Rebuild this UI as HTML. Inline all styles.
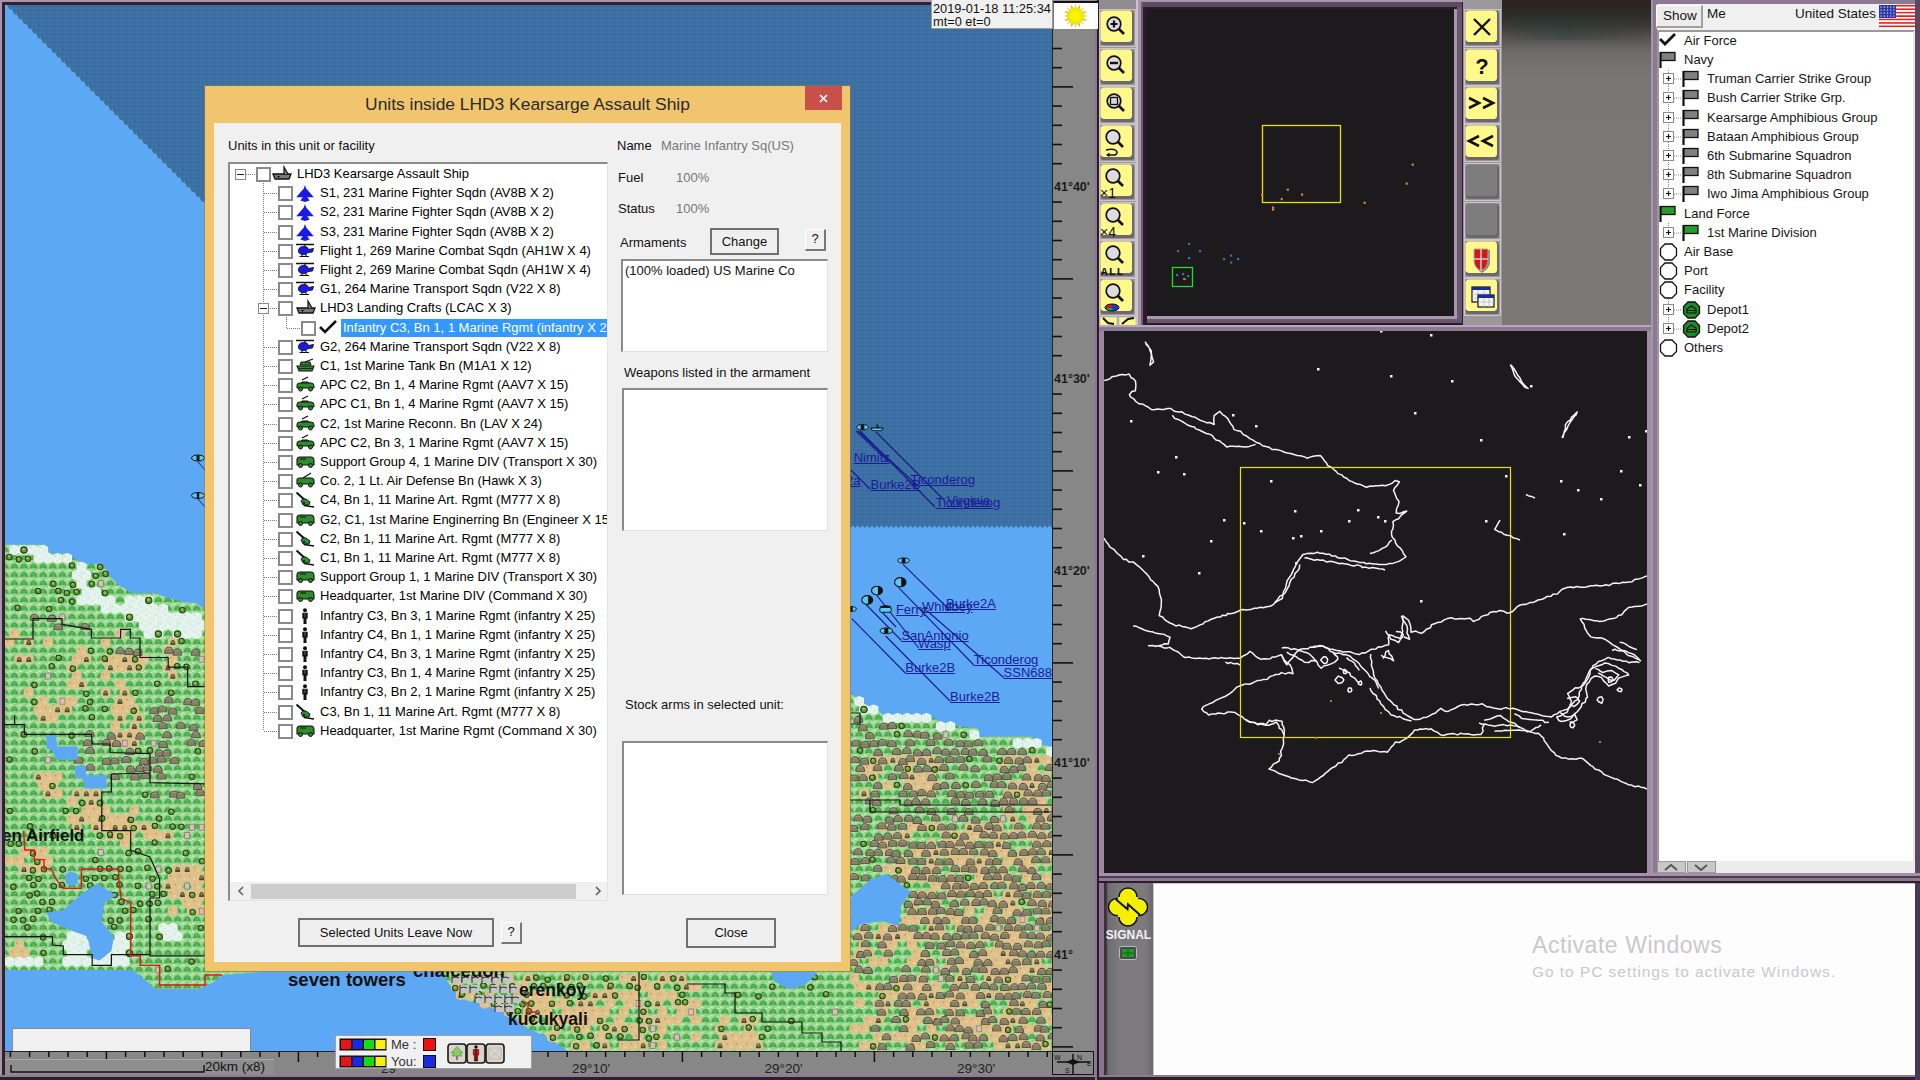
<!DOCTYPE html>
<html><head><meta charset="utf-8">
<style>
html,body{margin:0;padding:0;}
body{width:1920px;height:1080px;overflow:hidden;position:relative;background:#9c8aa0;font-family:"Liberation Sans",sans-serif;}
.a{position:absolute;}
</style></head><body>
<svg class="a" style="left:0;top:0" width="1052" height="1051" viewBox="0 0 1052 1051">
<defs>
<pattern id="grass" width="9.6" height="8.4" patternUnits="userSpaceOnUse">
<rect width="9.6" height="8.4" fill="#9cd894"/>
<path d="M0.6 6.4 Q1.4 1 4.8 0.8 Q8.2 1 9 6.4 Q4.8 4.4 0.6 6.4Z" fill="#46a848"/>
<rect x="3.6" y="2.4" width="2.4" height="1.6" fill="#6cbc68"/>
<rect x="0" y="7" width="2.2" height="1.4" fill="#d0f0ca"/><rect x="7.2" y="0" width="1.8" height="1.2" fill="#c8ecc2"/><rect x="5" y="6.8" width="1.4" height="1.2" fill="#7ac876"/>
</pattern>
<pattern id="sea2" width="4" height="4" patternUnits="userSpaceOnUse">
<rect width="4" height="4" fill="#3c70a3"/><rect x="0" y="0" width="1" height="1" fill="#4a7db0"/><rect x="2" y="2" width="1" height="1" fill="#3567a0"/>
</pattern>
<symbol id="tr" viewBox="0 0 8 8"><circle cx="4" cy="4" r="3.2" fill="#5e9e36" stroke="#2a3c1c" stroke-width="1.2"/><circle cx="3.5" cy="3.1" r="1.2" fill="#9ccc58"/></symbol>
<symbol id="hl" viewBox="0 0 11 8"><path d="M0.6 7.6 Q0.6 0.8 5.5 0.6 Q10.4 0.8 10.4 7.6 Z" fill="#878068" stroke="#4a4434" stroke-width="0.9"/><path d="M2.5 2.8 Q5.5 1.4 8 2.4" stroke="#a49e86" stroke-width="1" fill="none"/></symbol>
<symbol id="tn" viewBox="0 0 10 10.6"><path d="M5 0 L10 2.2 L10 8.4 L5 10.6 L0 8.4 L0 2.2 Z" fill="#e2c08a"/><rect x="2" y="3" width="1.6" height="1.6" fill="#c49e66"/><rect x="6" y="6" width="1.6" height="1.6" fill="#f0dcb0"/></symbol><symbol id="tn2" viewBox="0 0 10 10.6"><path d="M5 0 L10 2.2 L10 8.4 L5 10.6 L0 8.4 L0 2.2 Z" fill="#e2c08a"/><path d="M2.5 8 Q2.5 3 5 3 Q7.5 3 7.5 8Z" fill="#4e4a3c"/><circle cx="5" cy="5" r="1.2" fill="#7a9a4a"/></symbol>
<symbol id="sn" viewBox="0 0 10 10.6"><path d="M5 0 L10 2.2 L10 8.4 L5 10.6 L0 8.4 L0 2.2 Z" fill="#e4f4ee"/><rect x="2" y="2.5" width="1.5" height="1.5" fill="#ecc8dc"/><rect x="6" y="5" width="1.5" height="1.5" fill="#c4e4f4"/><rect x="4" y="7" width="1.5" height="1.2" fill="#f0e2c0"/></symbol>
<symbol id="tw" viewBox="0 0 6 8"><rect x="0.5" y="1" width="5" height="6" fill="#d8c0b8" stroke="#8a7a70" stroke-width="0.8"/></symbol>
<clipPath id="mapclip"><rect x="5" y="5" width="1047" height="1046"/></clipPath>
</defs>
<g clip-path="url(#mapclip)">
<rect x="0" y="0" width="1052" height="1051" fill="#5ca8f4"/>
<polygon points="5.0,5.0 1052.0,5.0 1052.0,528.0 1052.0,528.0 1049.6,525.5 1047.2,528.0 1044.8,525.5 1042.4,528.0 1040.0,525.5 1037.6,528.0 1035.2,525.5 1032.8,528.0 1030.4,525.5 1028.0,528.0 1025.6,525.5 1023.2,528.0 1020.8,525.5 1018.4,528.0 1016.0,525.5 1013.6,528.0 1011.2,525.5 1008.8,528.0 1006.4,525.5 1004.0,528.0 1001.6,525.5 999.2,528.0 996.8,525.5 994.4,528.0 992.0,525.5 989.6,528.0 987.2,525.5 984.8,528.0 982.4,525.5 980.0,528.0 977.6,525.5 975.2,528.0 972.8,525.5 970.4,528.0 968.0,525.5 965.6,528.0 963.2,525.5 960.8,528.0 958.4,525.5 956.0,528.0 953.6,525.5 951.2,528.0 948.8,525.5 946.4,528.0 944.0,525.5 941.6,528.0 939.2,525.5 936.8,528.0 934.4,525.5 932.0,528.0 929.6,525.5 927.2,528.0 924.8,525.5 922.4,528.0 920.0,525.5 917.6,528.0 915.2,525.5 912.8,528.0 910.4,525.5 908.0,528.0 905.6,525.5 903.2,528.0 900.8,525.5 898.4,528.0 896.0,525.5 893.6,528.0 891.2,525.5 888.8,528.0 886.4,525.5 884.0,528.0 881.6,525.5 879.2,528.0 876.8,525.5 874.4,528.0 872.0,525.5 869.6,528.0 867.2,525.5 864.8,528.0 862.4,525.5 860.0,528.0 857.6,525.5 855.2,528.0 852.8,525.5 850.4,528.0 848.0,525.5 845.6,528.0 843.2,525.5 840.8,528.0 838.4,525.5 836.0,528.0 833.6,525.5 831.2,528.0 828.8,525.5 826.4,528.0 824.0,525.5 821.6,528.0 819.2,525.5 816.8,528.0 814.4,525.5 812.0,528.0 809.6,525.5 807.2,528.0 804.8,525.5 802.4,528.0 800.0,525.5 797.6,528.0 795.2,525.5 792.8,528.0 790.4,525.5 788.0,528.0 785.6,525.5 783.2,528.0 780.8,525.5 778.4,528.0 776.0,525.5 773.6,528.0 771.2,525.5 768.8,528.0 766.4,525.5 764.0,528.0 761.6,525.5 759.2,528.0 756.8,525.5 754.4,528.0 752.0,525.5 749.6,528.0 747.2,525.5 744.8,528.0 742.4,525.5 740.0,528.0 737.6,525.5 735.2,528.0 732.8,525.5 730.4,528.0 728.0,525.5 725.6,528.0 723.2,525.5 720.8,528.0 718.4,525.5 716.0,528.0 713.6,525.5 711.2,528.0 708.8,525.5 706.4,528.0 704.0,525.5 701.6,528.0 699.2,525.5 696.8,528.0 694.4,525.5 692.0,528.0 689.6,525.5 687.2,528.0 684.8,525.5 682.4,528.0 680.0,525.5 677.6,528.0 675.2,525.5 672.8,528.0 670.4,525.5 668.0,528.0 665.6,525.5 663.2,528.0 660.8,525.5 658.4,528.0 656.0,525.5 653.6,528.0 651.2,525.5 648.8,528.0 646.4,525.5 644.0,528.0 641.6,525.5 639.2,528.0 636.8,525.5 634.4,528.0 632.0,525.5 629.6,528.0 627.2,525.5 624.8,528.0 622.4,525.5 620.0,528.0 617.6,525.5 615.2,528.0 612.8,525.5 610.4,528.0 608.0,525.5 605.6,528.0 603.2,525.5 600.8,528.0 598.4,525.5 596.0,528.0 593.6,525.5 591.2,528.0 588.8,525.5 586.4,528.0 584.0,525.5 581.6,528.0 579.2,525.5 576.8,528.0 574.4,525.5 572.0,528.0 569.6,525.5 567.2,528.0 564.8,525.5 562.4,528.0 560.0,525.5 557.6,528.0 555.2,525.5 552.8,528.0 550.4,525.5 548.0,528.0 545.6,525.5 543.2,528.0 540.8,525.5 538.4,528.0 536.0,525.5 533.6,528.0 531.2,525.5 528.8,528.0 526.4,525.5 528.0,528.0 528.0,528.0 525.6,523.2 523.2,523.2 520.8,518.4 518.4,518.4 516.0,513.6 513.6,513.6 511.2,508.8 508.8,508.8 506.4,504.0 504.0,504.0 501.6,499.2 499.2,499.2 496.8,494.4 494.4,494.4 492.0,489.6 489.6,489.6 487.2,484.8 484.8,484.8 482.4,480.0 480.0,480.0 477.6,475.2 475.2,475.2 472.8,470.4 470.4,470.4 468.0,465.6 465.6,465.6 463.2,460.8 460.8,460.8 458.4,456.0 456.0,456.0 453.6,451.2 451.2,451.2 448.8,446.4 446.4,446.4 444.0,441.6 441.6,441.6 439.2,436.8 436.8,436.8 434.4,432.0 432.0,432.0 429.6,427.2 427.2,427.2 424.8,422.4 422.4,422.4 420.0,417.6 417.6,417.6 415.2,412.8 412.8,412.8 410.4,408.0 408.0,408.0 405.6,403.2 403.2,403.2 400.8,398.4 398.4,398.4 396.0,393.6 393.6,393.6 391.2,388.8 388.8,388.8 386.4,384.0 384.0,384.0 381.6,379.2 379.2,379.2 376.8,374.4 374.4,374.4 372.0,369.6 369.6,369.6 367.2,364.8 364.8,364.8 362.4,360.0 360.0,360.0 357.6,355.2 355.2,355.2 352.8,350.4 350.4,350.4 348.0,345.6 345.6,345.6 343.2,340.8 340.8,340.8 338.4,336.0 336.0,336.0 333.6,331.2 331.2,331.2 328.8,326.4 326.4,326.4 324.0,321.6 321.6,321.6 319.2,316.8 316.8,316.8 314.4,312.0 312.0,312.0 309.6,307.2 307.2,307.2 304.8,302.4 302.4,302.4 300.0,297.6 297.6,297.6 295.2,292.8 292.8,292.8 290.4,288.0 288.0,288.0 285.6,283.2 283.2,283.2 280.8,278.4 278.4,278.4 276.0,273.6 273.6,273.6 271.2,268.8 268.8,268.8 266.4,264.0 264.0,264.0 261.6,259.2 259.2,259.2 256.8,254.4 254.4,254.4 252.0,249.6 249.6,249.6 247.2,244.8 244.8,244.8 242.4,240.0 240.0,240.0 237.6,235.2 235.2,235.2 232.8,230.4 230.4,230.4 228.0,225.6 225.6,225.6 223.2,220.8 220.8,220.8 218.4,216.0 216.0,216.0 213.6,211.2 211.2,211.2 208.8,206.4 206.4,206.4 204.0,201.6 201.6,201.6 199.2,196.8 196.8,196.8 194.4,192.0 192.0,192.0 189.6,187.2 187.2,187.2 184.8,182.4 182.4,182.4 180.0,177.6 177.6,177.6 175.2,172.8 172.8,172.8 170.4,168.0 168.0,168.0 165.6,163.2 163.2,163.2 160.8,158.4 158.4,158.4 156.0,153.6 153.6,153.6 151.2,148.8 148.8,148.8 146.4,144.0 144.0,144.0 141.6,139.2 139.2,139.2 136.8,134.4 134.4,134.4 132.0,129.6 129.6,129.6 127.2,124.8 124.8,124.8 122.4,120.0 120.0,120.0 117.6,115.2 115.2,115.2 112.8,110.4 110.4,110.4 108.0,105.6 105.6,105.6 103.2,100.8 100.8,100.8 98.4,96.0 96.0,96.0 93.6,91.2 91.2,91.2 88.8,86.4 86.4,86.4 84.0,81.6 81.6,81.6 79.2,76.8 76.8,76.8 74.4,72.0 72.0,72.0 69.6,67.2 67.2,67.2 64.8,62.4 62.4,62.4 60.0,57.6 57.6,57.6 55.2,52.8 52.8,52.8 50.4,48.0 48.0,48.0 45.6,43.2 43.2,43.2 40.8,38.4 38.4,38.4 36.0,33.6 33.6,33.6 31.2,28.8 28.8,28.8 26.4,24.0 24.0,24.0 21.6,19.2 19.2,19.2 16.8,14.4 14.4,14.4 12.0,9.6 9.6,9.6 7.2,4.8" fill="url(#sea2)"/>
<polygon points="5.0,544.7 44.7,544.7 50.5,553.5 68.0,553.5 77.8,561.0 83.6,564.0 103.0,564.0 108.9,575.0 116.7,583.6 132.0,593.0 155.6,593.0 165.3,597.0 182.8,602.0 196.4,603.0 204.0,609.0 260.0,640.0 260.0,972.0 222.0,975.0 215.0,981.0 200.0,989.0 155.0,989.0 145.0,980.0 133.0,970.0 5.0,970.0" fill="url(#grass)"/>
<polygon points="851.0,691.7 855.7,698.5 867.4,705.3 877.0,709.0 885.0,717.0 933.5,717.0 943.0,724.7 962.7,726.7 978.0,728.6 980.0,737.0 991.8,736.4 1030.7,736.4 1040.4,744.0 1052.0,747.0 1052.0,1051.0 568.0,1051.0 545.0,1036.0 527.0,1028.0 505.0,1010.0 480.0,1004.0 464.7,1000.0 450.0,985.0 440.0,971.0 850.0,971.0" fill="url(#grass)"/>
<use href="#sn" x="9.4" y="544.7" width="10" height="10.6"/>
<use href="#sn" x="19.0" y="544.7" width="10" height="10.6"/>
<use href="#sn" x="28.6" y="544.7" width="10" height="10.6"/>
<use href="#sn" x="38.2" y="544.7" width="10" height="10.6"/>
<use href="#sn" x="33.4" y="553.1" width="10" height="10.6"/>
<use href="#sn" x="43.0" y="553.1" width="10" height="10.6"/>
<use href="#sn" x="52.6" y="553.1" width="10" height="10.6"/>
<use href="#sn" x="62.2" y="553.1" width="10" height="10.6"/>
<use href="#sn" x="76.6" y="561.5" width="10" height="10.6"/>
<use href="#sn" x="71.8" y="569.9" width="10" height="10.6"/>
<use href="#sn" x="81.4" y="569.9" width="10" height="10.6"/>
<use href="#sn" x="76.6" y="578.3" width="10" height="10.6"/>
<use href="#sn" x="81.4" y="586.7" width="10" height="10.6"/>
<use href="#sn" x="91.0" y="586.7" width="10" height="10.6"/>
<use href="#sn" x="76.6" y="595.1" width="10" height="10.6"/>
<use href="#sn" x="86.2" y="595.1" width="10" height="10.6"/>
<use href="#sn" x="95.8" y="595.1" width="10" height="10.6"/>
<use href="#sn" x="105.4" y="595.1" width="10" height="10.6"/>
<use href="#sn" x="124.6" y="595.1" width="10" height="10.6"/>
<use href="#sn" x="134.2" y="595.1" width="10" height="10.6"/>
<use href="#sn" x="143.8" y="595.1" width="10" height="10.6"/>
<use href="#sn" x="100.6" y="603.5" width="10" height="10.6"/>
<use href="#sn" x="110.2" y="603.5" width="10" height="10.6"/>
<use href="#sn" x="119.8" y="603.5" width="10" height="10.6"/>
<use href="#sn" x="129.4" y="603.5" width="10" height="10.6"/>
<use href="#sn" x="139.0" y="603.5" width="10" height="10.6"/>
<use href="#sn" x="148.6" y="603.5" width="10" height="10.6"/>
<use href="#sn" x="158.2" y="603.5" width="10" height="10.6"/>
<use href="#sn" x="124.6" y="611.9" width="10" height="10.6"/>
<use href="#sn" x="134.2" y="611.9" width="10" height="10.6"/>
<use href="#sn" x="143.8" y="611.9" width="10" height="10.6"/>
<use href="#sn" x="153.4" y="611.9" width="10" height="10.6"/>
<use href="#sn" x="163.0" y="611.9" width="10" height="10.6"/>
<use href="#sn" x="172.6" y="611.9" width="10" height="10.6"/>
<use href="#sn" x="182.2" y="611.9" width="10" height="10.6"/>
<use href="#sn" x="191.8" y="611.9" width="10" height="10.6"/>
<use href="#sn" x="139.0" y="620.3" width="10" height="10.6"/>
<use href="#sn" x="148.6" y="620.3" width="10" height="10.6"/>
<use href="#sn" x="158.2" y="620.3" width="10" height="10.6"/>
<use href="#sn" x="167.8" y="620.3" width="10" height="10.6"/>
<use href="#sn" x="177.4" y="620.3" width="10" height="10.6"/>
<use href="#sn" x="187.0" y="620.3" width="10" height="10.6"/>
<use href="#sn" x="196.6" y="620.3" width="10" height="10.6"/>
<use href="#tn" x="9.4" y="628.7" width="10" height="10.6"/>
<use href="#tn" x="115.0" y="628.7" width="10" height="10.6"/>
<use href="#sn" x="143.8" y="628.7" width="10" height="10.6"/>
<use href="#sn" x="153.4" y="628.7" width="10" height="10.6"/>
<use href="#sn" x="172.6" y="628.7" width="10" height="10.6"/>
<use href="#sn" x="182.2" y="628.7" width="10" height="10.6"/>
<use href="#sn" x="191.8" y="628.7" width="10" height="10.6"/>
<use href="#tn" x="4.6" y="637.1" width="10" height="10.6"/>
<use href="#tn2" x="23.8" y="637.1" width="10" height="10.6"/>
<use href="#tn" x="43.0" y="637.1" width="10" height="10.6"/>
<use href="#tn" x="100.6" y="637.1" width="10" height="10.6"/>
<use href="#tn2" x="167.8" y="637.1" width="10" height="10.6"/>
<use href="#tn" x="76.6" y="645.5" width="10" height="10.6"/>
<use href="#tn2" x="163.0" y="645.5" width="10" height="10.6"/>
<use href="#tn2" x="14.2" y="653.9" width="10" height="10.6"/>
<use href="#tn2" x="23.8" y="653.9" width="10" height="10.6"/>
<use href="#tn" x="71.8" y="653.9" width="10" height="10.6"/>
<use href="#tn2" x="81.4" y="653.9" width="10" height="10.6"/>
<use href="#tn2" x="100.6" y="653.9" width="10" height="10.6"/>
<use href="#tn" x="110.2" y="653.9" width="10" height="10.6"/>
<use href="#tn2" x="119.8" y="653.9" width="10" height="10.6"/>
<use href="#tn2" x="129.4" y="653.9" width="10" height="10.6"/>
<use href="#tn" x="139.0" y="653.9" width="10" height="10.6"/>
<use href="#tn" x="167.8" y="653.9" width="10" height="10.6"/>
<use href="#tn2" x="67.0" y="662.3" width="10" height="10.6"/>
<use href="#tn2" x="105.4" y="662.3" width="10" height="10.6"/>
<use href="#tn" x="115.0" y="662.3" width="10" height="10.6"/>
<use href="#tn2" x="124.6" y="662.3" width="10" height="10.6"/>
<use href="#tn" x="134.2" y="662.3" width="10" height="10.6"/>
<use href="#tn2" x="163.0" y="662.3" width="10" height="10.6"/>
<use href="#tn" x="71.8" y="670.7" width="10" height="10.6"/>
<use href="#tn" x="100.6" y="670.7" width="10" height="10.6"/>
<use href="#tn2" x="167.8" y="670.7" width="10" height="10.6"/>
<use href="#tn" x="67.0" y="679.1" width="10" height="10.6"/>
<use href="#tn2" x="76.6" y="679.1" width="10" height="10.6"/>
<use href="#tn" x="115.0" y="679.1" width="10" height="10.6"/>
<use href="#tn" x="23.8" y="687.5" width="10" height="10.6"/>
<use href="#tn2" x="100.6" y="687.5" width="10" height="10.6"/>
<use href="#tn2" x="119.8" y="687.5" width="10" height="10.6"/>
<use href="#tn" x="38.2" y="695.9" width="10" height="10.6"/>
<use href="#tn" x="57.4" y="695.9" width="10" height="10.6"/>
<use href="#tn" x="67.0" y="695.9" width="10" height="10.6"/>
<use href="#tn2" x="115.0" y="695.9" width="10" height="10.6"/>
<use href="#tn" x="124.6" y="695.9" width="10" height="10.6"/>
<use href="#sn" x="854.2" y="695.9" width="10" height="10.6"/>
<use href="#tn" x="33.4" y="704.3" width="10" height="10.6"/>
<use href="#tn" x="43.0" y="704.3" width="10" height="10.6"/>
<use href="#tn2" x="52.6" y="704.3" width="10" height="10.6"/>
<use href="#tn2" x="62.2" y="704.3" width="10" height="10.6"/>
<use href="#tn" x="110.2" y="704.3" width="10" height="10.6"/>
<use href="#tn" x="119.8" y="704.3" width="10" height="10.6"/>
<use href="#tn2" x="129.4" y="704.3" width="10" height="10.6"/>
<use href="#sn" x="859.0" y="704.3" width="10" height="10.6"/>
<use href="#sn" x="868.6" y="704.3" width="10" height="10.6"/>
<use href="#tn2" x="38.2" y="712.7" width="10" height="10.6"/>
<use href="#tn" x="47.8" y="712.7" width="10" height="10.6"/>
<use href="#tn2" x="115.0" y="712.7" width="10" height="10.6"/>
<use href="#tn2" x="134.2" y="712.7" width="10" height="10.6"/>
<use href="#sn" x="883.0" y="712.7" width="10" height="10.6"/>
<use href="#sn" x="892.6" y="712.7" width="10" height="10.6"/>
<use href="#sn" x="902.2" y="712.7" width="10" height="10.6"/>
<use href="#sn" x="911.8" y="712.7" width="10" height="10.6"/>
<use href="#sn" x="921.4" y="712.7" width="10" height="10.6"/>
<use href="#tn" x="110.2" y="721.1" width="10" height="10.6"/>
<use href="#tn2" x="129.4" y="721.1" width="10" height="10.6"/>
<use href="#sn" x="935.8" y="721.1" width="10" height="10.6"/>
<use href="#sn" x="945.4" y="721.1" width="10" height="10.6"/>
<use href="#tn2" x="115.0" y="729.5" width="10" height="10.6"/>
<use href="#tn2" x="124.6" y="729.5" width="10" height="10.6"/>
<use href="#tn2" x="134.2" y="729.5" width="10" height="10.6"/>
<use href="#sn" x="969.4" y="729.5" width="10" height="10.6"/>
<use href="#tn2" x="110.2" y="737.9" width="10" height="10.6"/>
<use href="#tn" x="119.8" y="737.9" width="10" height="10.6"/>
<use href="#tn2" x="129.4" y="737.9" width="10" height="10.6"/>
<use href="#sn" x="1012.6" y="737.9" width="10" height="10.6"/>
<use href="#sn" x="1022.2" y="737.9" width="10" height="10.6"/>
<use href="#sn" x="1031.8" y="737.9" width="10" height="10.6"/>
<use href="#sn" x="1046.2" y="746.3" width="10" height="10.6"/>
<use href="#tn" x="868.6" y="754.7" width="10" height="10.6"/>
<use href="#tn" x="878.2" y="754.7" width="10" height="10.6"/>
<use href="#tn2" x="887.8" y="754.7" width="10" height="10.6"/>
<use href="#tn" x="897.4" y="754.7" width="10" height="10.6"/>
<use href="#tn" x="907.0" y="754.7" width="10" height="10.6"/>
<use href="#tn" x="916.6" y="754.7" width="10" height="10.6"/>
<use href="#tn2" x="926.2" y="754.7" width="10" height="10.6"/>
<use href="#tn2" x="1003.0" y="754.7" width="10" height="10.6"/>
<use href="#tn" x="1012.6" y="754.7" width="10" height="10.6"/>
<use href="#tn" x="1022.2" y="754.7" width="10" height="10.6"/>
<use href="#tn2" x="1031.8" y="754.7" width="10" height="10.6"/>
<use href="#tn" x="1041.4" y="754.7" width="10" height="10.6"/>
<use href="#tn" x="863.8" y="763.1" width="10" height="10.6"/>
<use href="#tn" x="873.4" y="763.1" width="10" height="10.6"/>
<use href="#tn" x="902.2" y="763.1" width="10" height="10.6"/>
<use href="#tn2" x="931.0" y="763.1" width="10" height="10.6"/>
<use href="#tn" x="998.2" y="763.1" width="10" height="10.6"/>
<use href="#tn" x="1027.0" y="763.1" width="10" height="10.6"/>
<use href="#tn2" x="33.4" y="771.5" width="10" height="10.6"/>
<use href="#tn" x="43.0" y="771.5" width="10" height="10.6"/>
<use href="#tn" x="52.6" y="771.5" width="10" height="10.6"/>
<use href="#tn" x="859.0" y="771.5" width="10" height="10.6"/>
<use href="#tn2" x="868.6" y="771.5" width="10" height="10.6"/>
<use href="#tn2" x="907.0" y="771.5" width="10" height="10.6"/>
<use href="#tn" x="916.6" y="771.5" width="10" height="10.6"/>
<use href="#tn" x="926.2" y="771.5" width="10" height="10.6"/>
<use href="#tn2" x="1022.2" y="771.5" width="10" height="10.6"/>
<use href="#tn2" x="1031.8" y="771.5" width="10" height="10.6"/>
<use href="#tn" x="1041.4" y="771.5" width="10" height="10.6"/>
<use href="#tn" x="38.2" y="779.9" width="10" height="10.6"/>
<use href="#tn" x="47.8" y="779.9" width="10" height="10.6"/>
<use href="#tn" x="883.0" y="779.9" width="10" height="10.6"/>
<use href="#tn" x="902.2" y="779.9" width="10" height="10.6"/>
<use href="#tn" x="911.8" y="779.9" width="10" height="10.6"/>
<use href="#tn" x="921.4" y="779.9" width="10" height="10.6"/>
<use href="#tn" x="931.0" y="779.9" width="10" height="10.6"/>
<use href="#tn2" x="1007.8" y="779.9" width="10" height="10.6"/>
<use href="#tn2" x="1017.4" y="779.9" width="10" height="10.6"/>
<use href="#tn2" x="1027.0" y="779.9" width="10" height="10.6"/>
<use href="#tn2" x="1036.6" y="779.9" width="10" height="10.6"/>
<use href="#tn2" x="43.0" y="788.3" width="10" height="10.6"/>
<use href="#tn" x="52.6" y="788.3" width="10" height="10.6"/>
<use href="#tn2" x="71.8" y="788.3" width="10" height="10.6"/>
<use href="#tn2" x="81.4" y="788.3" width="10" height="10.6"/>
<use href="#tn2" x="91.0" y="788.3" width="10" height="10.6"/>
<use href="#tn2" x="859.0" y="788.3" width="10" height="10.6"/>
<use href="#tn2" x="916.6" y="788.3" width="10" height="10.6"/>
<use href="#tn2" x="926.2" y="788.3" width="10" height="10.6"/>
<use href="#tn" x="1003.0" y="788.3" width="10" height="10.6"/>
<use href="#tn" x="1012.6" y="788.3" width="10" height="10.6"/>
<use href="#tn" x="1022.2" y="788.3" width="10" height="10.6"/>
<use href="#tn" x="1031.8" y="788.3" width="10" height="10.6"/>
<use href="#tn" x="67.0" y="796.7" width="10" height="10.6"/>
<use href="#tn2" x="86.2" y="796.7" width="10" height="10.6"/>
<use href="#tn" x="998.2" y="796.7" width="10" height="10.6"/>
<use href="#tn2" x="1007.8" y="796.7" width="10" height="10.6"/>
<use href="#tn" x="1027.0" y="796.7" width="10" height="10.6"/>
<use href="#tn" x="1036.6" y="796.7" width="10" height="10.6"/>
<use href="#tn" x="81.4" y="805.1" width="10" height="10.6"/>
<use href="#tn" x="91.0" y="805.1" width="10" height="10.6"/>
<use href="#tn" x="100.6" y="805.1" width="10" height="10.6"/>
<use href="#tn" x="129.4" y="805.1" width="10" height="10.6"/>
<use href="#tn2" x="1003.0" y="805.1" width="10" height="10.6"/>
<use href="#tn" x="1022.2" y="805.1" width="10" height="10.6"/>
<use href="#tn2" x="1031.8" y="805.1" width="10" height="10.6"/>
<use href="#tn2" x="1041.4" y="805.1" width="10" height="10.6"/>
<use href="#tn" x="67.0" y="813.5" width="10" height="10.6"/>
<use href="#tn2" x="76.6" y="813.5" width="10" height="10.6"/>
<use href="#tn" x="86.2" y="813.5" width="10" height="10.6"/>
<use href="#tn2" x="95.8" y="813.5" width="10" height="10.6"/>
<use href="#tn" x="105.4" y="813.5" width="10" height="10.6"/>
<use href="#tn" x="115.0" y="813.5" width="10" height="10.6"/>
<use href="#tn2" x="124.6" y="813.5" width="10" height="10.6"/>
<use href="#tn2" x="1007.8" y="813.5" width="10" height="10.6"/>
<use href="#tn" x="1027.0" y="813.5" width="10" height="10.6"/>
<use href="#tn2" x="1036.6" y="813.5" width="10" height="10.6"/>
<use href="#tn2" x="1046.2" y="813.5" width="10" height="10.6"/>
<use href="#tn2" x="71.8" y="821.9" width="10" height="10.6"/>
<use href="#tn2" x="91.0" y="821.9" width="10" height="10.6"/>
<use href="#tn" x="100.6" y="821.9" width="10" height="10.6"/>
<use href="#tn2" x="110.2" y="821.9" width="10" height="10.6"/>
<use href="#tn2" x="119.8" y="821.9" width="10" height="10.6"/>
<use href="#tn" x="129.4" y="821.9" width="10" height="10.6"/>
<use href="#tn2" x="139.0" y="821.9" width="10" height="10.6"/>
<use href="#tn" x="148.6" y="821.9" width="10" height="10.6"/>
<use href="#tn" x="878.2" y="821.9" width="10" height="10.6"/>
<use href="#tn" x="907.0" y="821.9" width="10" height="10.6"/>
<use href="#tn2" x="916.6" y="821.9" width="10" height="10.6"/>
<use href="#tn2" x="926.2" y="821.9" width="10" height="10.6"/>
<use href="#tn2" x="935.8" y="821.9" width="10" height="10.6"/>
<use href="#tn2" x="964.6" y="821.9" width="10" height="10.6"/>
<use href="#tn" x="974.2" y="821.9" width="10" height="10.6"/>
<use href="#tn2" x="983.8" y="821.9" width="10" height="10.6"/>
<use href="#tn" x="993.4" y="821.9" width="10" height="10.6"/>
<use href="#tn" x="1012.6" y="821.9" width="10" height="10.6"/>
<use href="#tn" x="1031.8" y="821.9" width="10" height="10.6"/>
<use href="#tn2" x="105.4" y="830.3" width="10" height="10.6"/>
<use href="#tn" x="115.0" y="830.3" width="10" height="10.6"/>
<use href="#tn" x="124.6" y="830.3" width="10" height="10.6"/>
<use href="#tn" x="143.8" y="830.3" width="10" height="10.6"/>
<use href="#tn" x="153.4" y="830.3" width="10" height="10.6"/>
<use href="#tn2" x="163.0" y="830.3" width="10" height="10.6"/>
<use href="#tn" x="892.6" y="830.3" width="10" height="10.6"/>
<use href="#tn2" x="902.2" y="830.3" width="10" height="10.6"/>
<use href="#tn" x="940.6" y="830.3" width="10" height="10.6"/>
<use href="#tn" x="950.2" y="830.3" width="10" height="10.6"/>
<use href="#tn" x="959.8" y="830.3" width="10" height="10.6"/>
<use href="#tn" x="969.4" y="830.3" width="10" height="10.6"/>
<use href="#tn2" x="979.0" y="830.3" width="10" height="10.6"/>
<use href="#tn2" x="988.6" y="830.3" width="10" height="10.6"/>
<use href="#tn2" x="998.2" y="830.3" width="10" height="10.6"/>
<use href="#tn" x="1007.8" y="830.3" width="10" height="10.6"/>
<use href="#tn" x="1017.4" y="830.3" width="10" height="10.6"/>
<use href="#tn" x="1027.0" y="830.3" width="10" height="10.6"/>
<use href="#tn" x="1036.6" y="830.3" width="10" height="10.6"/>
<use href="#tn" x="1046.2" y="830.3" width="10" height="10.6"/>
<use href="#tn" x="119.8" y="838.7" width="10" height="10.6"/>
<use href="#tn" x="878.2" y="838.7" width="10" height="10.6"/>
<use href="#tn2" x="897.4" y="838.7" width="10" height="10.6"/>
<use href="#tn2" x="926.2" y="838.7" width="10" height="10.6"/>
<use href="#tn" x="945.4" y="838.7" width="10" height="10.6"/>
<use href="#tn" x="955.0" y="838.7" width="10" height="10.6"/>
<use href="#tn" x="964.6" y="838.7" width="10" height="10.6"/>
<use href="#tn2" x="993.4" y="838.7" width="10" height="10.6"/>
<use href="#tn2" x="1031.8" y="838.7" width="10" height="10.6"/>
<use href="#tn2" x="1041.4" y="838.7" width="10" height="10.6"/>
<use href="#tn" x="19.0" y="847.1" width="10" height="10.6"/>
<use href="#tn" x="28.6" y="847.1" width="10" height="10.6"/>
<use href="#tn" x="38.2" y="847.1" width="10" height="10.6"/>
<use href="#tn" x="883.0" y="847.1" width="10" height="10.6"/>
<use href="#tn" x="911.8" y="847.1" width="10" height="10.6"/>
<use href="#tn" x="921.4" y="847.1" width="10" height="10.6"/>
<use href="#tn2" x="931.0" y="847.1" width="10" height="10.6"/>
<use href="#tn" x="940.6" y="847.1" width="10" height="10.6"/>
<use href="#tn" x="950.2" y="847.1" width="10" height="10.6"/>
<use href="#tn" x="959.8" y="847.1" width="10" height="10.6"/>
<use href="#tn2" x="979.0" y="847.1" width="10" height="10.6"/>
<use href="#tn" x="988.6" y="847.1" width="10" height="10.6"/>
<use href="#tn" x="998.2" y="847.1" width="10" height="10.6"/>
<use href="#tn" x="1017.4" y="847.1" width="10" height="10.6"/>
<use href="#tn" x="1027.0" y="847.1" width="10" height="10.6"/>
<use href="#tn2" x="1046.2" y="847.1" width="10" height="10.6"/>
<use href="#tn" x="4.6" y="855.5" width="10" height="10.6"/>
<use href="#tn" x="14.2" y="855.5" width="10" height="10.6"/>
<use href="#tn" x="33.4" y="855.5" width="10" height="10.6"/>
<use href="#tn" x="43.0" y="855.5" width="10" height="10.6"/>
<use href="#tn2" x="897.4" y="855.5" width="10" height="10.6"/>
<use href="#tn2" x="926.2" y="855.5" width="10" height="10.6"/>
<use href="#tn2" x="945.4" y="855.5" width="10" height="10.6"/>
<use href="#tn" x="955.0" y="855.5" width="10" height="10.6"/>
<use href="#tn" x="964.6" y="855.5" width="10" height="10.6"/>
<use href="#tn2" x="974.2" y="855.5" width="10" height="10.6"/>
<use href="#tn" x="983.8" y="855.5" width="10" height="10.6"/>
<use href="#tn" x="1003.0" y="855.5" width="10" height="10.6"/>
<use href="#tn" x="1012.6" y="855.5" width="10" height="10.6"/>
<use href="#tn" x="1022.2" y="855.5" width="10" height="10.6"/>
<use href="#tn" x="1041.4" y="855.5" width="10" height="10.6"/>
<use href="#tn2" x="19.0" y="863.9" width="10" height="10.6"/>
<use href="#tn" x="28.6" y="863.9" width="10" height="10.6"/>
<use href="#tn" x="38.2" y="863.9" width="10" height="10.6"/>
<use href="#tn2" x="172.6" y="863.9" width="10" height="10.6"/>
<use href="#tn2" x="182.2" y="863.9" width="10" height="10.6"/>
<use href="#tn" x="191.8" y="863.9" width="10" height="10.6"/>
<use href="#tn" x="883.0" y="863.9" width="10" height="10.6"/>
<use href="#tn2" x="892.6" y="863.9" width="10" height="10.6"/>
<use href="#tn" x="902.2" y="863.9" width="10" height="10.6"/>
<use href="#tn" x="921.4" y="863.9" width="10" height="10.6"/>
<use href="#tn2" x="931.0" y="863.9" width="10" height="10.6"/>
<use href="#tn" x="959.8" y="863.9" width="10" height="10.6"/>
<use href="#tn" x="969.4" y="863.9" width="10" height="10.6"/>
<use href="#tn" x="979.0" y="863.9" width="10" height="10.6"/>
<use href="#tn" x="998.2" y="863.9" width="10" height="10.6"/>
<use href="#tn2" x="1017.4" y="863.9" width="10" height="10.6"/>
<use href="#tn2" x="1027.0" y="863.9" width="10" height="10.6"/>
<use href="#tn" x="167.8" y="872.3" width="10" height="10.6"/>
<use href="#tn" x="177.4" y="872.3" width="10" height="10.6"/>
<use href="#tn" x="187.0" y="872.3" width="10" height="10.6"/>
<use href="#tn2" x="196.6" y="872.3" width="10" height="10.6"/>
<use href="#tn" x="897.4" y="872.3" width="10" height="10.6"/>
<use href="#tn" x="907.0" y="872.3" width="10" height="10.6"/>
<use href="#tn" x="916.6" y="872.3" width="10" height="10.6"/>
<use href="#tn" x="926.2" y="872.3" width="10" height="10.6"/>
<use href="#tn" x="945.4" y="872.3" width="10" height="10.6"/>
<use href="#tn" x="974.2" y="872.3" width="10" height="10.6"/>
<use href="#tn" x="983.8" y="872.3" width="10" height="10.6"/>
<use href="#tn" x="993.4" y="872.3" width="10" height="10.6"/>
<use href="#tn" x="1003.0" y="872.3" width="10" height="10.6"/>
<use href="#tn" x="1022.2" y="872.3" width="10" height="10.6"/>
<use href="#tn" x="1041.4" y="872.3" width="10" height="10.6"/>
<use href="#tn2" x="163.0" y="880.7" width="10" height="10.6"/>
<use href="#tn" x="172.6" y="880.7" width="10" height="10.6"/>
<use href="#tn" x="191.8" y="880.7" width="10" height="10.6"/>
<use href="#tn" x="931.0" y="880.7" width="10" height="10.6"/>
<use href="#tn" x="940.6" y="880.7" width="10" height="10.6"/>
<use href="#tn2" x="950.2" y="880.7" width="10" height="10.6"/>
<use href="#tn2" x="959.8" y="880.7" width="10" height="10.6"/>
<use href="#tn" x="969.4" y="880.7" width="10" height="10.6"/>
<use href="#tn2" x="979.0" y="880.7" width="10" height="10.6"/>
<use href="#tn" x="1007.8" y="880.7" width="10" height="10.6"/>
<use href="#tn2" x="1027.0" y="880.7" width="10" height="10.6"/>
<use href="#tn" x="1046.2" y="880.7" width="10" height="10.6"/>
<use href="#tn" x="167.8" y="889.1" width="10" height="10.6"/>
<use href="#tn2" x="177.4" y="889.1" width="10" height="10.6"/>
<use href="#tn" x="187.0" y="889.1" width="10" height="10.6"/>
<use href="#tn2" x="196.6" y="889.1" width="10" height="10.6"/>
<use href="#tn" x="916.6" y="889.1" width="10" height="10.6"/>
<use href="#tn" x="926.2" y="889.1" width="10" height="10.6"/>
<use href="#tn2" x="945.4" y="889.1" width="10" height="10.6"/>
<use href="#tn" x="955.0" y="889.1" width="10" height="10.6"/>
<use href="#tn2" x="974.2" y="889.1" width="10" height="10.6"/>
<use href="#tn" x="983.8" y="889.1" width="10" height="10.6"/>
<use href="#tn2" x="1003.0" y="889.1" width="10" height="10.6"/>
<use href="#tn" x="1012.6" y="889.1" width="10" height="10.6"/>
<use href="#tn" x="1031.8" y="889.1" width="10" height="10.6"/>
<use href="#tn" x="182.2" y="897.5" width="10" height="10.6"/>
<use href="#tn" x="191.8" y="897.5" width="10" height="10.6"/>
<use href="#tn2" x="911.8" y="897.5" width="10" height="10.6"/>
<use href="#tn" x="931.0" y="897.5" width="10" height="10.6"/>
<use href="#tn2" x="969.4" y="897.5" width="10" height="10.6"/>
<use href="#tn2" x="988.6" y="897.5" width="10" height="10.6"/>
<use href="#tn2" x="998.2" y="897.5" width="10" height="10.6"/>
<use href="#tn2" x="1007.8" y="897.5" width="10" height="10.6"/>
<use href="#tn2" x="1027.0" y="897.5" width="10" height="10.6"/>
<use href="#tn" x="1036.6" y="897.5" width="10" height="10.6"/>
<use href="#tn" x="1046.2" y="897.5" width="10" height="10.6"/>
<use href="#tn" x="167.8" y="905.9" width="10" height="10.6"/>
<use href="#tn" x="187.0" y="905.9" width="10" height="10.6"/>
<use href="#tn" x="196.6" y="905.9" width="10" height="10.6"/>
<use href="#tn" x="907.0" y="905.9" width="10" height="10.6"/>
<use href="#tn" x="926.2" y="905.9" width="10" height="10.6"/>
<use href="#tn" x="945.4" y="905.9" width="10" height="10.6"/>
<use href="#tn" x="964.6" y="905.9" width="10" height="10.6"/>
<use href="#tn" x="983.8" y="905.9" width="10" height="10.6"/>
<use href="#tn" x="1003.0" y="905.9" width="10" height="10.6"/>
<use href="#tn" x="1012.6" y="905.9" width="10" height="10.6"/>
<use href="#tn2" x="1041.4" y="905.9" width="10" height="10.6"/>
<use href="#tn" x="902.2" y="914.3" width="10" height="10.6"/>
<use href="#tn" x="911.8" y="914.3" width="10" height="10.6"/>
<use href="#tn" x="921.4" y="914.3" width="10" height="10.6"/>
<use href="#tn" x="931.0" y="914.3" width="10" height="10.6"/>
<use href="#tn" x="940.6" y="914.3" width="10" height="10.6"/>
<use href="#tn" x="950.2" y="914.3" width="10" height="10.6"/>
<use href="#tn" x="959.8" y="914.3" width="10" height="10.6"/>
<use href="#tn" x="979.0" y="914.3" width="10" height="10.6"/>
<use href="#tn2" x="988.6" y="914.3" width="10" height="10.6"/>
<use href="#tn" x="998.2" y="914.3" width="10" height="10.6"/>
<use href="#tn" x="1017.4" y="914.3" width="10" height="10.6"/>
<use href="#tn2" x="1036.6" y="914.3" width="10" height="10.6"/>
<use href="#tn2" x="1046.2" y="914.3" width="10" height="10.6"/>
<use href="#sn" x="158.2" y="922.7" width="10" height="10.6"/>
<use href="#sn" x="167.8" y="922.7" width="10" height="10.6"/>
<use href="#tn2" x="859.0" y="922.7" width="10" height="10.6"/>
<use href="#tn" x="878.2" y="922.7" width="10" height="10.6"/>
<use href="#tn" x="887.8" y="922.7" width="10" height="10.6"/>
<use href="#tn" x="897.4" y="922.7" width="10" height="10.6"/>
<use href="#tn2" x="926.2" y="922.7" width="10" height="10.6"/>
<use href="#tn" x="935.8" y="922.7" width="10" height="10.6"/>
<use href="#tn" x="955.0" y="922.7" width="10" height="10.6"/>
<use href="#tn2" x="964.6" y="922.7" width="10" height="10.6"/>
<use href="#tn2" x="974.2" y="922.7" width="10" height="10.6"/>
<use href="#tn" x="983.8" y="922.7" width="10" height="10.6"/>
<use href="#tn2" x="1003.0" y="922.7" width="10" height="10.6"/>
<use href="#tn2" x="1012.6" y="922.7" width="10" height="10.6"/>
<use href="#sn" x="67.0" y="931.1" width="10" height="10.6"/>
<use href="#sn" x="76.6" y="931.1" width="10" height="10.6"/>
<use href="#sn" x="115.0" y="931.1" width="10" height="10.6"/>
<use href="#sn" x="124.6" y="931.1" width="10" height="10.6"/>
<use href="#sn" x="163.0" y="931.1" width="10" height="10.6"/>
<use href="#sn" x="172.6" y="931.1" width="10" height="10.6"/>
<use href="#tn2" x="854.2" y="931.1" width="10" height="10.6"/>
<use href="#tn2" x="873.4" y="931.1" width="10" height="10.6"/>
<use href="#tn" x="883.0" y="931.1" width="10" height="10.6"/>
<use href="#tn2" x="892.6" y="931.1" width="10" height="10.6"/>
<use href="#tn" x="902.2" y="931.1" width="10" height="10.6"/>
<use href="#tn2" x="911.8" y="931.1" width="10" height="10.6"/>
<use href="#tn" x="921.4" y="931.1" width="10" height="10.6"/>
<use href="#tn" x="931.0" y="931.1" width="10" height="10.6"/>
<use href="#tn2" x="940.6" y="931.1" width="10" height="10.6"/>
<use href="#tn" x="979.0" y="931.1" width="10" height="10.6"/>
<use href="#tn2" x="988.6" y="931.1" width="10" height="10.6"/>
<use href="#tn2" x="998.2" y="931.1" width="10" height="10.6"/>
<use href="#tn" x="1007.8" y="931.1" width="10" height="10.6"/>
<use href="#tn" x="1017.4" y="931.1" width="10" height="10.6"/>
<use href="#tn" x="1036.6" y="931.1" width="10" height="10.6"/>
<use href="#tn2" x="1046.2" y="931.1" width="10" height="10.6"/>
<use href="#tn" x="14.2" y="939.5" width="10" height="10.6"/>
<use href="#sn" x="62.2" y="939.5" width="10" height="10.6"/>
<use href="#sn" x="71.8" y="939.5" width="10" height="10.6"/>
<use href="#sn" x="81.4" y="939.5" width="10" height="10.6"/>
<use href="#sn" x="110.2" y="939.5" width="10" height="10.6"/>
<use href="#sn" x="119.8" y="939.5" width="10" height="10.6"/>
<use href="#tn" x="859.0" y="939.5" width="10" height="10.6"/>
<use href="#tn" x="878.2" y="939.5" width="10" height="10.6"/>
<use href="#tn" x="887.8" y="939.5" width="10" height="10.6"/>
<use href="#tn" x="907.0" y="939.5" width="10" height="10.6"/>
<use href="#tn" x="955.0" y="939.5" width="10" height="10.6"/>
<use href="#tn2" x="964.6" y="939.5" width="10" height="10.6"/>
<use href="#tn2" x="974.2" y="939.5" width="10" height="10.6"/>
<use href="#tn" x="993.4" y="939.5" width="10" height="10.6"/>
<use href="#tn" x="1003.0" y="939.5" width="10" height="10.6"/>
<use href="#tn" x="1012.6" y="939.5" width="10" height="10.6"/>
<use href="#tn" x="1022.2" y="939.5" width="10" height="10.6"/>
<use href="#tn2" x="1031.8" y="939.5" width="10" height="10.6"/>
<use href="#tn" x="9.4" y="947.9" width="10" height="10.6"/>
<use href="#tn" x="19.0" y="947.9" width="10" height="10.6"/>
<use href="#sn" x="67.0" y="947.9" width="10" height="10.6"/>
<use href="#sn" x="76.6" y="947.9" width="10" height="10.6"/>
<use href="#sn" x="105.4" y="947.9" width="10" height="10.6"/>
<use href="#sn" x="115.0" y="947.9" width="10" height="10.6"/>
<use href="#tn2" x="854.2" y="947.9" width="10" height="10.6"/>
<use href="#tn" x="863.8" y="947.9" width="10" height="10.6"/>
<use href="#tn" x="883.0" y="947.9" width="10" height="10.6"/>
<use href="#tn" x="911.8" y="947.9" width="10" height="10.6"/>
<use href="#tn2" x="940.6" y="947.9" width="10" height="10.6"/>
<use href="#tn" x="959.8" y="947.9" width="10" height="10.6"/>
<use href="#tn2" x="979.0" y="947.9" width="10" height="10.6"/>
<use href="#tn" x="988.6" y="947.9" width="10" height="10.6"/>
<use href="#tn2" x="998.2" y="947.9" width="10" height="10.6"/>
<use href="#tn" x="1007.8" y="947.9" width="10" height="10.6"/>
<use href="#tn" x="1017.4" y="947.9" width="10" height="10.6"/>
<use href="#tn2" x="1036.6" y="947.9" width="10" height="10.6"/>
<use href="#tn" x="1046.2" y="947.9" width="10" height="10.6"/>
<use href="#sn" x="4.6" y="956.3" width="10" height="10.6"/>
<use href="#sn" x="14.2" y="956.3" width="10" height="10.6"/>
<use href="#sn" x="23.8" y="956.3" width="10" height="10.6"/>
<use href="#sn" x="33.4" y="956.3" width="10" height="10.6"/>
<use href="#sn" x="62.2" y="956.3" width="10" height="10.6"/>
<use href="#sn" x="71.8" y="956.3" width="10" height="10.6"/>
<use href="#sn" x="81.4" y="956.3" width="10" height="10.6"/>
<use href="#sn" x="91.0" y="956.3" width="10" height="10.6"/>
<use href="#sn" x="100.6" y="956.3" width="10" height="10.6"/>
<use href="#sn" x="110.2" y="956.3" width="10" height="10.6"/>
<use href="#sn" x="119.8" y="956.3" width="10" height="10.6"/>
<use href="#tn" x="849.4" y="956.3" width="10" height="10.6"/>
<use href="#tn" x="868.6" y="956.3" width="10" height="10.6"/>
<use href="#tn" x="878.2" y="956.3" width="10" height="10.6"/>
<use href="#tn" x="907.0" y="956.3" width="10" height="10.6"/>
<use href="#tn2" x="916.6" y="956.3" width="10" height="10.6"/>
<use href="#tn2" x="926.2" y="956.3" width="10" height="10.6"/>
<use href="#tn" x="945.4" y="956.3" width="10" height="10.6"/>
<use href="#tn" x="955.0" y="956.3" width="10" height="10.6"/>
<use href="#tn" x="964.6" y="956.3" width="10" height="10.6"/>
<use href="#tn" x="974.2" y="956.3" width="10" height="10.6"/>
<use href="#tn2" x="983.8" y="956.3" width="10" height="10.6"/>
<use href="#tn" x="993.4" y="956.3" width="10" height="10.6"/>
<use href="#tn2" x="1003.0" y="956.3" width="10" height="10.6"/>
<use href="#tn" x="1012.6" y="956.3" width="10" height="10.6"/>
<use href="#tn2" x="1031.8" y="956.3" width="10" height="10.6"/>
<use href="#tn2" x="940.6" y="964.7" width="10" height="10.6"/>
<use href="#tn" x="959.8" y="964.7" width="10" height="10.6"/>
<use href="#tn" x="979.0" y="964.7" width="10" height="10.6"/>
<use href="#tn" x="988.6" y="964.7" width="10" height="10.6"/>
<use href="#tn" x="998.2" y="964.7" width="10" height="10.6"/>
<use href="#tn2" x="1007.8" y="964.7" width="10" height="10.6"/>
<use href="#tn" x="1017.4" y="964.7" width="10" height="10.6"/>
<use href="#tn2" x="1027.0" y="964.7" width="10" height="10.6"/>
<use href="#tn2" x="1036.6" y="964.7" width="10" height="10.6"/>
<use href="#tn" x="1046.2" y="964.7" width="10" height="10.6"/>
<use href="#tn" x="455.8" y="973.1" width="10" height="10.6"/>
<use href="#tn" x="475.0" y="973.1" width="10" height="10.6"/>
<use href="#tn2" x="484.6" y="973.1" width="10" height="10.6"/>
<use href="#tn2" x="494.2" y="973.1" width="10" height="10.6"/>
<use href="#tn" x="503.8" y="973.1" width="10" height="10.6"/>
<use href="#tn2" x="523.0" y="973.1" width="10" height="10.6"/>
<use href="#tn2" x="561.4" y="973.1" width="10" height="10.6"/>
<use href="#tn" x="580.6" y="973.1" width="10" height="10.6"/>
<use href="#tn" x="619.0" y="973.1" width="10" height="10.6"/>
<use href="#tn2" x="628.6" y="973.1" width="10" height="10.6"/>
<use href="#tn" x="638.2" y="973.1" width="10" height="10.6"/>
<use href="#tn2" x="657.4" y="973.1" width="10" height="10.6"/>
<use href="#tn" x="667.0" y="973.1" width="10" height="10.6"/>
<use href="#tn2" x="676.6" y="973.1" width="10" height="10.6"/>
<use href="#tn" x="849.4" y="973.1" width="10" height="10.6"/>
<use href="#tn" x="897.4" y="973.1" width="10" height="10.6"/>
<use href="#tn2" x="916.6" y="973.1" width="10" height="10.6"/>
<use href="#tn2" x="955.0" y="973.1" width="10" height="10.6"/>
<use href="#tn2" x="983.8" y="973.1" width="10" height="10.6"/>
<use href="#tn" x="993.4" y="973.1" width="10" height="10.6"/>
<use href="#tn" x="1003.0" y="973.1" width="10" height="10.6"/>
<use href="#tn" x="1012.6" y="973.1" width="10" height="10.6"/>
<use href="#tn" x="451.0" y="981.5" width="10" height="10.6"/>
<use href="#tn" x="489.4" y="981.5" width="10" height="10.6"/>
<use href="#tn" x="508.6" y="981.5" width="10" height="10.6"/>
<use href="#tn" x="518.2" y="981.5" width="10" height="10.6"/>
<use href="#tn2" x="604.6" y="981.5" width="10" height="10.6"/>
<use href="#tn" x="633.4" y="981.5" width="10" height="10.6"/>
<use href="#tn" x="643.0" y="981.5" width="10" height="10.6"/>
<use href="#tn2" x="652.6" y="981.5" width="10" height="10.6"/>
<use href="#tn2" x="681.4" y="981.5" width="10" height="10.6"/>
<use href="#tn" x="691.0" y="981.5" width="10" height="10.6"/>
<use href="#tn" x="854.2" y="981.5" width="10" height="10.6"/>
<use href="#tn2" x="863.8" y="981.5" width="10" height="10.6"/>
<use href="#tn2" x="873.4" y="981.5" width="10" height="10.6"/>
<use href="#tn" x="892.6" y="981.5" width="10" height="10.6"/>
<use href="#tn2" x="902.2" y="981.5" width="10" height="10.6"/>
<use href="#tn" x="911.8" y="981.5" width="10" height="10.6"/>
<use href="#tn2" x="921.4" y="981.5" width="10" height="10.6"/>
<use href="#tn" x="931.0" y="981.5" width="10" height="10.6"/>
<use href="#tn" x="950.2" y="981.5" width="10" height="10.6"/>
<use href="#tn2" x="969.4" y="981.5" width="10" height="10.6"/>
<use href="#tn" x="1007.8" y="981.5" width="10" height="10.6"/>
<use href="#tn" x="1017.4" y="981.5" width="10" height="10.6"/>
<use href="#tn" x="1046.2" y="981.5" width="10" height="10.6"/>
<use href="#tn2" x="455.8" y="989.9" width="10" height="10.6"/>
<use href="#tn" x="465.4" y="989.9" width="10" height="10.6"/>
<use href="#tn" x="484.6" y="989.9" width="10" height="10.6"/>
<use href="#tn" x="513.4" y="989.9" width="10" height="10.6"/>
<use href="#tn" x="523.0" y="989.9" width="10" height="10.6"/>
<use href="#tn" x="532.6" y="989.9" width="10" height="10.6"/>
<use href="#tn" x="542.2" y="989.9" width="10" height="10.6"/>
<use href="#tn2" x="561.4" y="989.9" width="10" height="10.6"/>
<use href="#tn2" x="590.2" y="989.9" width="10" height="10.6"/>
<use href="#tn2" x="599.8" y="989.9" width="10" height="10.6"/>
<use href="#tn" x="609.4" y="989.9" width="10" height="10.6"/>
<use href="#tn" x="619.0" y="989.9" width="10" height="10.6"/>
<use href="#tn" x="628.6" y="989.9" width="10" height="10.6"/>
<use href="#tn" x="647.8" y="989.9" width="10" height="10.6"/>
<use href="#tn" x="657.4" y="989.9" width="10" height="10.6"/>
<use href="#tn" x="667.0" y="989.9" width="10" height="10.6"/>
<use href="#tn" x="878.2" y="989.9" width="10" height="10.6"/>
<use href="#tn" x="887.8" y="989.9" width="10" height="10.6"/>
<use href="#tn2" x="897.4" y="989.9" width="10" height="10.6"/>
<use href="#tn2" x="907.0" y="989.9" width="10" height="10.6"/>
<use href="#tn2" x="916.6" y="989.9" width="10" height="10.6"/>
<use href="#tn2" x="926.2" y="989.9" width="10" height="10.6"/>
<use href="#tn" x="945.4" y="989.9" width="10" height="10.6"/>
<use href="#tn2" x="955.0" y="989.9" width="10" height="10.6"/>
<use href="#tn" x="964.6" y="989.9" width="10" height="10.6"/>
<use href="#tn" x="974.2" y="989.9" width="10" height="10.6"/>
<use href="#tn2" x="983.8" y="989.9" width="10" height="10.6"/>
<use href="#tn" x="993.4" y="989.9" width="10" height="10.6"/>
<use href="#tn" x="1003.0" y="989.9" width="10" height="10.6"/>
<use href="#tn2" x="1022.2" y="989.9" width="10" height="10.6"/>
<use href="#tn" x="1041.4" y="989.9" width="10" height="10.6"/>
<use href="#tn" x="479.8" y="998.3" width="10" height="10.6"/>
<use href="#tn" x="489.4" y="998.3" width="10" height="10.6"/>
<use href="#tn2" x="499.0" y="998.3" width="10" height="10.6"/>
<use href="#tn" x="527.8" y="998.3" width="10" height="10.6"/>
<use href="#tn" x="537.4" y="998.3" width="10" height="10.6"/>
<use href="#tn2" x="547.0" y="998.3" width="10" height="10.6"/>
<use href="#tn" x="556.6" y="998.3" width="10" height="10.6"/>
<use href="#tn2" x="575.8" y="998.3" width="10" height="10.6"/>
<use href="#tn2" x="585.4" y="998.3" width="10" height="10.6"/>
<use href="#tn" x="604.6" y="998.3" width="10" height="10.6"/>
<use href="#tn" x="623.8" y="998.3" width="10" height="10.6"/>
<use href="#tn2" x="633.4" y="998.3" width="10" height="10.6"/>
<use href="#tn2" x="652.6" y="998.3" width="10" height="10.6"/>
<use href="#tn" x="671.8" y="998.3" width="10" height="10.6"/>
<use href="#tn" x="681.4" y="998.3" width="10" height="10.6"/>
<use href="#tn" x="691.0" y="998.3" width="10" height="10.6"/>
<use href="#tn" x="854.2" y="998.3" width="10" height="10.6"/>
<use href="#tn" x="873.4" y="998.3" width="10" height="10.6"/>
<use href="#tn2" x="883.0" y="998.3" width="10" height="10.6"/>
<use href="#tn" x="902.2" y="998.3" width="10" height="10.6"/>
<use href="#tn2" x="921.4" y="998.3" width="10" height="10.6"/>
<use href="#tn" x="931.0" y="998.3" width="10" height="10.6"/>
<use href="#tn" x="940.6" y="998.3" width="10" height="10.6"/>
<use href="#tn" x="950.2" y="998.3" width="10" height="10.6"/>
<use href="#tn2" x="959.8" y="998.3" width="10" height="10.6"/>
<use href="#tn" x="969.4" y="998.3" width="10" height="10.6"/>
<use href="#tn" x="1007.8" y="998.3" width="10" height="10.6"/>
<use href="#tn2" x="1017.4" y="998.3" width="10" height="10.6"/>
<use href="#tn" x="1027.0" y="998.3" width="10" height="10.6"/>
<use href="#tn" x="503.8" y="1006.7" width="10" height="10.6"/>
<use href="#tn2" x="523.0" y="1006.7" width="10" height="10.6"/>
<use href="#tn2" x="532.6" y="1006.7" width="10" height="10.6"/>
<use href="#tn" x="542.2" y="1006.7" width="10" height="10.6"/>
<use href="#tn" x="561.4" y="1006.7" width="10" height="10.6"/>
<use href="#tn" x="571.0" y="1006.7" width="10" height="10.6"/>
<use href="#tn" x="580.6" y="1006.7" width="10" height="10.6"/>
<use href="#tn" x="590.2" y="1006.7" width="10" height="10.6"/>
<use href="#tn" x="599.8" y="1006.7" width="10" height="10.6"/>
<use href="#tn" x="619.0" y="1006.7" width="10" height="10.6"/>
<use href="#tn" x="638.2" y="1006.7" width="10" height="10.6"/>
<use href="#tn" x="657.4" y="1006.7" width="10" height="10.6"/>
<use href="#tn" x="676.6" y="1006.7" width="10" height="10.6"/>
<use href="#tn" x="686.2" y="1006.7" width="10" height="10.6"/>
<use href="#tn" x="878.2" y="1006.7" width="10" height="10.6"/>
<use href="#tn" x="907.0" y="1006.7" width="10" height="10.6"/>
<use href="#tn" x="916.6" y="1006.7" width="10" height="10.6"/>
<use href="#tn" x="926.2" y="1006.7" width="10" height="10.6"/>
<use href="#tn2" x="945.4" y="1006.7" width="10" height="10.6"/>
<use href="#tn" x="983.8" y="1006.7" width="10" height="10.6"/>
<use href="#tn" x="1003.0" y="1006.7" width="10" height="10.6"/>
<use href="#tn" x="1022.2" y="1006.7" width="10" height="10.6"/>
<use href="#tn2" x="1031.8" y="1006.7" width="10" height="10.6"/>
<use href="#tn" x="1041.4" y="1006.7" width="10" height="10.6"/>
<use href="#tn" x="518.2" y="1015.1" width="10" height="10.6"/>
<use href="#tn" x="527.8" y="1015.1" width="10" height="10.6"/>
<use href="#tn" x="547.0" y="1015.1" width="10" height="10.6"/>
<use href="#tn" x="556.6" y="1015.1" width="10" height="10.6"/>
<use href="#tn" x="566.2" y="1015.1" width="10" height="10.6"/>
<use href="#tn" x="575.8" y="1015.1" width="10" height="10.6"/>
<use href="#tn" x="585.4" y="1015.1" width="10" height="10.6"/>
<use href="#tn" x="595.0" y="1015.1" width="10" height="10.6"/>
<use href="#tn" x="614.2" y="1015.1" width="10" height="10.6"/>
<use href="#tn2" x="643.0" y="1015.1" width="10" height="10.6"/>
<use href="#tn2" x="652.6" y="1015.1" width="10" height="10.6"/>
<use href="#tn" x="662.2" y="1015.1" width="10" height="10.6"/>
<use href="#tn" x="671.8" y="1015.1" width="10" height="10.6"/>
<use href="#tn" x="691.0" y="1015.1" width="10" height="10.6"/>
<use href="#tn" x="719.8" y="1015.1" width="10" height="10.6"/>
<use href="#tn2" x="739.0" y="1015.1" width="10" height="10.6"/>
<use href="#tn" x="748.6" y="1015.1" width="10" height="10.6"/>
<use href="#tn" x="863.8" y="1015.1" width="10" height="10.6"/>
<use href="#tn2" x="873.4" y="1015.1" width="10" height="10.6"/>
<use href="#tn" x="902.2" y="1015.1" width="10" height="10.6"/>
<use href="#tn" x="911.8" y="1015.1" width="10" height="10.6"/>
<use href="#tn2" x="931.0" y="1015.1" width="10" height="10.6"/>
<use href="#tn" x="950.2" y="1015.1" width="10" height="10.6"/>
<use href="#tn" x="959.8" y="1015.1" width="10" height="10.6"/>
<use href="#tn" x="969.4" y="1015.1" width="10" height="10.6"/>
<use href="#tn2" x="979.0" y="1015.1" width="10" height="10.6"/>
<use href="#tn" x="998.2" y="1015.1" width="10" height="10.6"/>
<use href="#tn2" x="1007.8" y="1015.1" width="10" height="10.6"/>
<use href="#tn" x="1017.4" y="1015.1" width="10" height="10.6"/>
<use href="#tn" x="1046.2" y="1015.1" width="10" height="10.6"/>
<use href="#tn" x="551.8" y="1023.5" width="10" height="10.6"/>
<use href="#tn" x="571.0" y="1023.5" width="10" height="10.6"/>
<use href="#tn" x="580.6" y="1023.5" width="10" height="10.6"/>
<use href="#tn" x="599.8" y="1023.5" width="10" height="10.6"/>
<use href="#tn2" x="609.4" y="1023.5" width="10" height="10.6"/>
<use href="#tn" x="619.0" y="1023.5" width="10" height="10.6"/>
<use href="#tn" x="628.6" y="1023.5" width="10" height="10.6"/>
<use href="#tn" x="638.2" y="1023.5" width="10" height="10.6"/>
<use href="#tn" x="657.4" y="1023.5" width="10" height="10.6"/>
<use href="#tn" x="715.0" y="1023.5" width="10" height="10.6"/>
<use href="#tn" x="743.8" y="1023.5" width="10" height="10.6"/>
<use href="#tn" x="849.4" y="1023.5" width="10" height="10.6"/>
<use href="#tn" x="859.0" y="1023.5" width="10" height="10.6"/>
<use href="#tn" x="907.0" y="1023.5" width="10" height="10.6"/>
<use href="#tn" x="926.2" y="1023.5" width="10" height="10.6"/>
<use href="#tn" x="945.4" y="1023.5" width="10" height="10.6"/>
<use href="#tn" x="955.0" y="1023.5" width="10" height="10.6"/>
<use href="#tn" x="964.6" y="1023.5" width="10" height="10.6"/>
<use href="#tn" x="974.2" y="1023.5" width="10" height="10.6"/>
<use href="#tn" x="983.8" y="1023.5" width="10" height="10.6"/>
<use href="#tn" x="993.4" y="1023.5" width="10" height="10.6"/>
<use href="#tn2" x="1003.0" y="1023.5" width="10" height="10.6"/>
<use href="#tn" x="1022.2" y="1023.5" width="10" height="10.6"/>
<use href="#tn" x="1031.8" y="1023.5" width="10" height="10.6"/>
<use href="#tn" x="547.0" y="1031.9" width="10" height="10.6"/>
<use href="#tn" x="595.0" y="1031.9" width="10" height="10.6"/>
<use href="#tn" x="633.4" y="1031.9" width="10" height="10.6"/>
<use href="#tn" x="652.6" y="1031.9" width="10" height="10.6"/>
<use href="#tn" x="691.0" y="1031.9" width="10" height="10.6"/>
<use href="#tn2" x="719.8" y="1031.9" width="10" height="10.6"/>
<use href="#tn" x="729.4" y="1031.9" width="10" height="10.6"/>
<use href="#tn" x="739.0" y="1031.9" width="10" height="10.6"/>
<use href="#tn" x="748.6" y="1031.9" width="10" height="10.6"/>
<use href="#tn" x="873.4" y="1031.9" width="10" height="10.6"/>
<use href="#tn2" x="883.0" y="1031.9" width="10" height="10.6"/>
<use href="#tn" x="892.6" y="1031.9" width="10" height="10.6"/>
<use href="#tn" x="902.2" y="1031.9" width="10" height="10.6"/>
<use href="#tn2" x="911.8" y="1031.9" width="10" height="10.6"/>
<use href="#tn" x="931.0" y="1031.9" width="10" height="10.6"/>
<use href="#tn" x="940.6" y="1031.9" width="10" height="10.6"/>
<use href="#tn" x="959.8" y="1031.9" width="10" height="10.6"/>
<use href="#tn" x="969.4" y="1031.9" width="10" height="10.6"/>
<use href="#tn" x="988.6" y="1031.9" width="10" height="10.6"/>
<use href="#tn2" x="998.2" y="1031.9" width="10" height="10.6"/>
<use href="#tn" x="1017.4" y="1031.9" width="10" height="10.6"/>
<use href="#tn2" x="1036.6" y="1031.9" width="10" height="10.6"/>
<use href="#tn2" x="571.0" y="1040.3" width="10" height="10.6"/>
<use href="#tn" x="580.6" y="1040.3" width="10" height="10.6"/>
<use href="#tn2" x="599.8" y="1040.3" width="10" height="10.6"/>
<use href="#tn" x="619.0" y="1040.3" width="10" height="10.6"/>
<use href="#tn" x="628.6" y="1040.3" width="10" height="10.6"/>
<use href="#tn2" x="638.2" y="1040.3" width="10" height="10.6"/>
<use href="#tn" x="657.4" y="1040.3" width="10" height="10.6"/>
<use href="#tn2" x="715.0" y="1040.3" width="10" height="10.6"/>
<use href="#tn" x="724.6" y="1040.3" width="10" height="10.6"/>
<use href="#tn" x="734.2" y="1040.3" width="10" height="10.6"/>
<use href="#tn" x="743.8" y="1040.3" width="10" height="10.6"/>
<use href="#tn2" x="753.4" y="1040.3" width="10" height="10.6"/>
<use href="#tn" x="859.0" y="1040.3" width="10" height="10.6"/>
<use href="#tn" x="868.6" y="1040.3" width="10" height="10.6"/>
<use href="#tn2" x="907.0" y="1040.3" width="10" height="10.6"/>
<use href="#tn" x="916.6" y="1040.3" width="10" height="10.6"/>
<use href="#tn" x="945.4" y="1040.3" width="10" height="10.6"/>
<use href="#tn" x="993.4" y="1040.3" width="10" height="10.6"/>
<use href="#tn2" x="1003.0" y="1040.3" width="10" height="10.6"/>
<use href="#tn2" x="1012.6" y="1040.3" width="10" height="10.6"/>
<use href="#tn" x="1022.2" y="1040.3" width="10" height="10.6"/>
<use href="#tn" x="1031.8" y="1040.3" width="10" height="10.6"/>
<use href="#tn" x="1041.4" y="1040.3" width="10" height="10.6"/>
<use href="#tr" x="20.0" y="546.0" width="8" height="8"/>
<use href="#tr" x="5.9" y="553.6" width="7" height="7"/>
<use href="#tr" x="15.5" y="555.9" width="7" height="7"/>
<use href="#tr" x="24.5" y="555.3" width="7" height="7"/>
<use href="#tr" x="68.6" y="562.0" width="7" height="7"/>
<use href="#tr" x="96.7" y="563.6" width="7" height="7"/>
<use href="#tr" x="92.3" y="572.5" width="7" height="7"/>
<use href="#tr" x="102.1" y="570.3" width="7" height="7"/>
<use href="#tr" x="49.9" y="580.4" width="7" height="7"/>
<use href="#tr" x="69.5" y="581.4" width="7" height="7"/>
<use href="#tr" x="88.3" y="580.5" width="7" height="7"/>
<use href="#tw" x="97.8" y="579.6" width="6" height="8"/>
<use href="#tr" x="34.8" y="587.5" width="7" height="7"/>
<use href="#tr" x="54.9" y="587.4" width="7" height="7"/>
<use href="#tr" x="63.4" y="589.6" width="7" height="7"/>
<use href="#tr" x="73.1" y="588.6" width="7" height="7"/>
<use href="#tr" x="101.7" y="589.7" width="7" height="7"/>
<use href="#tr" x="57.4" y="596.7" width="7" height="7"/>
<use href="#tr" x="68.7" y="598.3" width="7" height="7"/>
<use href="#tr" x="144.8" y="596.4" width="8" height="8"/>
<use href="#tr" x="14.2" y="604.3" width="7" height="7"/>
<use href="#tr" x="45.6" y="605.6" width="7" height="7"/>
<use href="#tr" x="179.0" y="606.7" width="7" height="7"/>
<use href="#hl" x="29.6" y="613.7" width="10" height="7.3"/>
<use href="#hl" x="46.8" y="614.5" width="10" height="7.3"/>
<use href="#tw" x="59.4" y="613.2" width="6" height="8"/>
<use href="#tr" x="125.6" y="613.2" width="8" height="8"/>
<use href="#hl" x="53.2" y="623.2" width="10" height="7.3"/>
<use href="#hl" x="80.2" y="622.9" width="10" height="7.3"/>
<use href="#tr" x="209.1" y="622.5" width="7" height="7"/>
<use href="#tr" x="154.4" y="630.0" width="8" height="8"/>
<use href="#tr" x="173.6" y="630.0" width="8" height="8"/>
<use href="#tr" x="178.1" y="637.6" width="7" height="7"/>
<use href="#tr" x="87.5" y="647.3" width="7" height="7"/>
<use href="#tr" x="106.4" y="648.0" width="7" height="7"/>
<use href="#hl" x="115.2" y="647.0" width="10" height="7.3"/>
<use href="#hl" x="124.0" y="647.6" width="10" height="7.3"/>
<use href="#hl" x="132.6" y="648.7" width="10" height="7.3"/>
<use href="#hl" x="164.0" y="646.5" width="10" height="7.3"/>
<use href="#hl" x="172.3" y="648.4" width="10" height="7.3"/>
<use href="#hl" x="190.5" y="648.5" width="10" height="7.3"/>
<use href="#tr" x="55.2" y="654.4" width="7" height="7"/>
<use href="#tr" x="101.2" y="655.1" width="7" height="7"/>
<use href="#tr" x="131.6" y="655.9" width="7" height="7"/>
<use href="#tw" x="198.6" y="655.2" width="6" height="8"/>
<use href="#tr" x="48.2" y="662.8" width="7" height="7"/>
<use href="#tr" x="69.5" y="665.2" width="7" height="7"/>
<use href="#tr" x="135.3" y="664.0" width="7" height="7"/>
<use href="#tr" x="173.8" y="662.7" width="7" height="7"/>
<use href="#tr" x="183.1" y="663.3" width="7" height="7"/>
<use href="#tw" x="45.0" y="672.0" width="6" height="8"/>
<use href="#tr" x="31.0" y="681.6" width="7" height="7"/>
<use href="#tr" x="153.8" y="680.2" width="7" height="7"/>
<use href="#tr" x="192.0" y="680.2" width="7" height="7"/>
<use href="#tr" x="82.8" y="690.3" width="7" height="7"/>
<use href="#tr" x="131.9" y="689.3" width="7" height="7"/>
<use href="#tr" x="167.8" y="689.3" width="7" height="7"/>
<use href="#tr" x="30.9" y="698.7" width="7" height="7"/>
<use href="#tw" x="59.4" y="697.2" width="6" height="8"/>
<use href="#tr" x="86.5" y="698.7" width="7" height="7"/>
<use href="#hl" x="163.8" y="696.2" width="10" height="7.3"/>
<use href="#hl" x="183.1" y="698.0" width="10" height="7.3"/>
<use href="#hl" x="190.2" y="698.9" width="10" height="7.3"/>
<use href="#tr" x="82.0" y="704.9" width="7" height="7"/>
<use href="#tr" x="101.3" y="705.4" width="7" height="7"/>
<use href="#tr" x="130.2" y="707.5" width="7" height="7"/>
<use href="#hl" x="149.1" y="707.1" width="10" height="7.3"/>
<use href="#hl" x="157.4" y="705.2" width="10" height="7.3"/>
<use href="#hl" x="167.6" y="707.4" width="10" height="7.3"/>
<use href="#hl" x="194.9" y="706.6" width="10" height="7.3"/>
<use href="#tr" x="860.0" y="705.6" width="8" height="8"/>
<use href="#tr" x="88.5" y="713.7" width="7" height="7"/>
<use href="#hl" x="152.4" y="714.7" width="10" height="7.3"/>
<use href="#hl" x="162.3" y="714.3" width="10" height="7.3"/>
<use href="#hl" x="853.3" y="715.8" width="10" height="7.3"/>
<use href="#hl" x="157.8" y="721.9" width="10" height="7.3"/>
<use href="#hl" x="175.8" y="721.5" width="10" height="7.3"/>
<use href="#hl" x="188.4" y="724.0" width="10" height="7.3"/>
<use href="#tw" x="208.2" y="722.4" width="6" height="8"/>
<use href="#hl" x="857.9" y="724.1" width="10" height="7.3"/>
<use href="#hl" x="878.8" y="722.4" width="10" height="7.3"/>
<use href="#hl" x="887.2" y="721.8" width="10" height="7.3"/>
<use href="#tr" x="898.2" y="722.5" width="7" height="7"/>
<use href="#tr" x="20.4" y="730.9" width="7" height="7"/>
<use href="#tr" x="68.2" y="732.2" width="7" height="7"/>
<use href="#hl" x="84.5" y="729.9" width="10" height="7.3"/>
<use href="#hl" x="106.3" y="732.4" width="10" height="7.3"/>
<use href="#hl" x="135.1" y="732.4" width="10" height="7.3"/>
<use href="#hl" x="162.0" y="731.1" width="10" height="7.3"/>
<use href="#hl" x="190.9" y="731.0" width="10" height="7.3"/>
<use href="#hl" x="864.9" y="731.9" width="10" height="7.3"/>
<use href="#tr" x="893.6" y="730.8" width="7" height="7"/>
<use href="#hl" x="903.2" y="729.9" width="10" height="7.3"/>
<use href="#hl" x="912.7" y="730.4" width="10" height="7.3"/>
<use href="#hl" x="919.7" y="731.4" width="10" height="7.3"/>
<use href="#hl" x="932.7" y="732.4" width="10" height="7.3"/>
<use href="#tw" x="942.6" y="730.8" width="6" height="8"/>
<use href="#tr" x="960.1" y="731.3" width="7" height="7"/>
<use href="#hl" x="82.6" y="739.0" width="10" height="7.3"/>
<use href="#hl" x="101.5" y="738.7" width="10" height="7.3"/>
<use href="#hl" x="111.6" y="739.8" width="10" height="7.3"/>
<use href="#tw" x="121.8" y="739.2" width="6" height="8"/>
<use href="#tw" x="150.6" y="739.2" width="6" height="8"/>
<use href="#hl" x="158.1" y="740.6" width="10" height="7.3"/>
<use href="#hl" x="186.3" y="738.5" width="10" height="7.3"/>
<use href="#hl" x="198.3" y="739.8" width="10" height="7.3"/>
<use href="#hl" x="850.7" y="739.4" width="10" height="7.3"/>
<use href="#hl" x="860.0" y="740.9" width="10" height="7.3"/>
<use href="#hl" x="868.9" y="740.0" width="10" height="7.3"/>
<use href="#hl" x="877.7" y="738.5" width="10" height="7.3"/>
<use href="#hl" x="886.9" y="739.9" width="10" height="7.3"/>
<use href="#hl" x="905.2" y="739.1" width="10" height="7.3"/>
<use href="#hl" x="925.5" y="738.7" width="10" height="7.3"/>
<use href="#hl" x="943.8" y="738.4" width="10" height="7.3"/>
<use href="#hl" x="955.2" y="740.0" width="10" height="7.3"/>
<use href="#hl" x="963.4" y="740.2" width="10" height="7.3"/>
<use href="#hl" x="973.4" y="739.0" width="10" height="7.3"/>
<use href="#tr" x="31.3" y="747.9" width="7" height="7"/>
<use href="#hl" x="85.0" y="746.5" width="10" height="7.3"/>
<use href="#hl" x="125.0" y="747.6" width="10" height="7.3"/>
<use href="#tr" x="134.6" y="747.4" width="7" height="7"/>
<use href="#tr" x="146.6" y="746.9" width="7" height="7"/>
<use href="#hl" x="154.5" y="749.4" width="10" height="7.3"/>
<use href="#hl" x="161.7" y="749.3" width="10" height="7.3"/>
<use href="#tr" x="194.6" y="747.8" width="7" height="7"/>
<use href="#tr" x="856.7" y="747.1" width="7" height="7"/>
<use href="#hl" x="873.1" y="749.0" width="10" height="7.3"/>
<use href="#hl" x="891.6" y="747.7" width="10" height="7.3"/>
<use href="#hl" x="901.8" y="746.9" width="10" height="7.3"/>
<use href="#hl" x="912.6" y="749.2" width="10" height="7.3"/>
<use href="#hl" x="921.6" y="748.8" width="10" height="7.3"/>
<use href="#hl" x="932.2" y="746.9" width="10" height="7.3"/>
<use href="#hl" x="940.8" y="748.4" width="10" height="7.3"/>
<use href="#hl" x="949.9" y="748.2" width="10" height="7.3"/>
<use href="#hl" x="960.4" y="747.8" width="10" height="7.3"/>
<use href="#hl" x="967.7" y="748.4" width="10" height="7.3"/>
<use href="#hl" x="978.0" y="748.8" width="10" height="7.3"/>
<use href="#hl" x="997.0" y="747.9" width="10" height="7.3"/>
<use href="#hl" x="1006.5" y="747.8" width="10" height="7.3"/>
<use href="#hl" x="1017.2" y="748.0" width="10" height="7.3"/>
<use href="#tr" x="1028.9" y="746.8" width="7" height="7"/>
<use href="#tr" x="6.1" y="756.1" width="7" height="7"/>
<use href="#tw" x="45.0" y="756.0" width="6" height="8"/>
<use href="#hl" x="73.5" y="756.4" width="10" height="7.3"/>
<use href="#hl" x="101.6" y="757.7" width="10" height="7.3"/>
<use href="#hl" x="109.7" y="757.2" width="10" height="7.3"/>
<use href="#hl" x="121.2" y="755.7" width="10" height="7.3"/>
<use href="#hl" x="139.0" y="757.7" width="10" height="7.3"/>
<use href="#hl" x="147.7" y="756.4" width="10" height="7.3"/>
<use href="#hl" x="156.5" y="755.4" width="10" height="7.3"/>
<use href="#hl" x="169.4" y="756.9" width="10" height="7.3"/>
<use href="#hl" x="849.9" y="756.0" width="10" height="7.3"/>
<use href="#hl" x="859.3" y="757.5" width="10" height="7.3"/>
<use href="#tr" x="869.8" y="757.4" width="7" height="7"/>
<use href="#hl" x="877.7" y="757.2" width="10" height="7.3"/>
<use href="#hl" x="897.9" y="757.9" width="10" height="7.3"/>
<use href="#hl" x="905.2" y="755.0" width="10" height="7.3"/>
<use href="#hl" x="916.6" y="757.6" width="10" height="7.3"/>
<use href="#hl" x="934.0" y="756.0" width="10" height="7.3"/>
<use href="#hl" x="944.9" y="755.6" width="10" height="7.3"/>
<use href="#hl" x="955.3" y="755.5" width="10" height="7.3"/>
<use href="#tr" x="966.0" y="755.4" width="7" height="7"/>
<use href="#hl" x="982.5" y="755.2" width="10" height="7.3"/>
<use href="#tr" x="996.0" y="757.3" width="7" height="7"/>
<use href="#hl" x="1003.5" y="756.6" width="10" height="7.3"/>
<use href="#hl" x="1014.2" y="757.1" width="10" height="7.3"/>
<use href="#hl" x="1022.3" y="756.1" width="10" height="7.3"/>
<use href="#hl" x="85.5" y="763.4" width="10" height="7.3"/>
<use href="#hl" x="125.8" y="765.5" width="10" height="7.3"/>
<use href="#hl" x="135.1" y="764.7" width="10" height="7.3"/>
<use href="#hl" x="142.4" y="764.0" width="10" height="7.3"/>
<use href="#hl" x="152.8" y="765.5" width="10" height="7.3"/>
<use href="#hl" x="855.2" y="764.9" width="10" height="7.3"/>
<use href="#hl" x="872.5" y="764.0" width="10" height="7.3"/>
<use href="#hl" x="894.0" y="764.3" width="10" height="7.3"/>
<use href="#tr" x="904.3" y="765.4" width="7" height="7"/>
<use href="#hl" x="913.0" y="765.4" width="10" height="7.3"/>
<use href="#hl" x="922.2" y="765.0" width="10" height="7.3"/>
<use href="#tr" x="931.2" y="766.1" width="7" height="7"/>
<use href="#hl" x="938.9" y="763.6" width="10" height="7.3"/>
<use href="#hl" x="958.5" y="763.4" width="10" height="7.3"/>
<use href="#hl" x="970.1" y="765.2" width="10" height="7.3"/>
<use href="#hl" x="999.3" y="765.8" width="10" height="7.3"/>
<use href="#hl" x="1009.1" y="766.0" width="10" height="7.3"/>
<use href="#hl" x="1016.3" y="763.6" width="10" height="7.3"/>
<use href="#hl" x="1044.8" y="763.6" width="10" height="7.3"/>
<use href="#hl" x="109.9" y="773.0" width="10" height="7.3"/>
<use href="#hl" x="130.1" y="773.3" width="10" height="7.3"/>
<use href="#hl" x="140.3" y="772.0" width="10" height="7.3"/>
<use href="#hl" x="156.4" y="772.3" width="10" height="7.3"/>
<use href="#tr" x="188.5" y="773.3" width="7" height="7"/>
<use href="#hl" x="848.8" y="774.2" width="10" height="7.3"/>
<use href="#hl" x="858.0" y="773.8" width="10" height="7.3"/>
<use href="#tr" x="868.8" y="774.2" width="7" height="7"/>
<use href="#hl" x="887.4" y="772.9" width="10" height="7.3"/>
<use href="#hl" x="898.8" y="771.8" width="10" height="7.3"/>
<use href="#hl" x="927.1" y="774.0" width="10" height="7.3"/>
<use href="#hl" x="944.8" y="772.2" width="10" height="7.3"/>
<use href="#hl" x="983.6" y="774.0" width="10" height="7.3"/>
<use href="#hl" x="992.1" y="773.1" width="10" height="7.3"/>
<use href="#hl" x="1001.9" y="772.6" width="10" height="7.3"/>
<use href="#hl" x="1021.6" y="773.3" width="10" height="7.3"/>
<use href="#hl" x="1033.5" y="773.9" width="10" height="7.3"/>
<use href="#hl" x="1041.0" y="774.7" width="10" height="7.3"/>
<use href="#tr" x="49.0" y="782.6" width="7" height="7"/>
<use href="#hl" x="192.6" y="782.7" width="10" height="7.3"/>
<use href="#hl" x="872.7" y="782.0" width="10" height="7.3"/>
<use href="#tr" x="893.4" y="781.5" width="7" height="7"/>
<use href="#hl" x="902.8" y="782.9" width="10" height="7.3"/>
<use href="#hl" x="932.0" y="782.9" width="10" height="7.3"/>
<use href="#hl" x="939.2" y="781.8" width="10" height="7.3"/>
<use href="#hl" x="951.0" y="781.6" width="10" height="7.3"/>
<use href="#tr" x="962.3" y="781.8" width="7" height="7"/>
<use href="#hl" x="971.0" y="780.7" width="10" height="7.3"/>
<use href="#hl" x="989.5" y="780.5" width="10" height="7.3"/>
<use href="#hl" x="996.6" y="780.9" width="10" height="7.3"/>
<use href="#hl" x="1007.5" y="782.2" width="10" height="7.3"/>
<use href="#hl" x="1018.3" y="782.9" width="10" height="7.3"/>
<use href="#hl" x="1037.6" y="782.5" width="10" height="7.3"/>
<use href="#hl" x="1046.4" y="780.8" width="10" height="7.3"/>
<use href="#tr" x="141.8" y="791.2" width="7" height="7"/>
<use href="#hl" x="149.8" y="791.2" width="10" height="7.3"/>
<use href="#hl" x="169.0" y="790.4" width="10" height="7.3"/>
<use href="#hl" x="175.6" y="791.4" width="10" height="7.3"/>
<use href="#hl" x="195.2" y="788.9" width="10" height="7.3"/>
<use href="#hl" x="870.0" y="790.3" width="10" height="7.3"/>
<use href="#hl" x="898.1" y="790.1" width="10" height="7.3"/>
<use href="#hl" x="908.4" y="790.2" width="10" height="7.3"/>
<use href="#hl" x="916.6" y="788.7" width="10" height="7.3"/>
<use href="#hl" x="926.2" y="790.1" width="10" height="7.3"/>
<use href="#hl" x="946.6" y="789.9" width="10" height="7.3"/>
<use href="#hl" x="955.6" y="791.0" width="10" height="7.3"/>
<use href="#hl" x="964.3" y="791.4" width="10" height="7.3"/>
<use href="#hl" x="974.7" y="790.4" width="10" height="7.3"/>
<use href="#hl" x="984.2" y="790.5" width="10" height="7.3"/>
<use href="#hl" x="1002.9" y="791.2" width="10" height="7.3"/>
<use href="#tr" x="1013.6" y="791.2" width="7" height="7"/>
<use href="#hl" x="1023.2" y="789.1" width="10" height="7.3"/>
<use href="#hl" x="1033.0" y="789.4" width="10" height="7.3"/>
<use href="#hl" x="1041.4" y="789.3" width="10" height="7.3"/>
<use href="#tr" x="78.8" y="799.7" width="7" height="7"/>
<use href="#tr" x="96.4" y="799.8" width="7" height="7"/>
<use href="#hl" x="864.7" y="797.2" width="10" height="7.3"/>
<use href="#hl" x="871.7" y="799.2" width="10" height="7.3"/>
<use href="#hl" x="903.4" y="799.3" width="10" height="7.3"/>
<use href="#hl" x="910.9" y="797.8" width="10" height="7.3"/>
<use href="#hl" x="920.7" y="798.2" width="10" height="7.3"/>
<use href="#hl" x="950.4" y="797.0" width="10" height="7.3"/>
<use href="#hl" x="960.9" y="798.6" width="10" height="7.3"/>
<use href="#hl" x="977.3" y="798.1" width="10" height="7.3"/>
<use href="#hl" x="990.2" y="799.8" width="10" height="7.3"/>
<use href="#hl" x="998.7" y="797.5" width="10" height="7.3"/>
<use href="#hl" x="1008.5" y="797.3" width="10" height="7.3"/>
<use href="#hl" x="1018.7" y="797.3" width="10" height="7.3"/>
<use href="#hl" x="1027.8" y="797.5" width="10" height="7.3"/>
<use href="#tr" x="6.5" y="807.5" width="7" height="7"/>
<use href="#tr" x="62.2" y="807.4" width="7" height="7"/>
<use href="#tr" x="72.7" y="807.6" width="7" height="7"/>
<use href="#tr" x="168.0" y="808.3" width="7" height="7"/>
<use href="#tr" x="869.5" y="806.7" width="7" height="7"/>
<use href="#hl" x="888.5" y="807.1" width="10" height="7.3"/>
<use href="#hl" x="914.8" y="806.1" width="10" height="7.3"/>
<use href="#hl" x="926.5" y="807.7" width="10" height="7.3"/>
<use href="#hl" x="946.6" y="807.7" width="10" height="7.3"/>
<use href="#hl" x="963.8" y="807.9" width="10" height="7.3"/>
<use href="#hl" x="1004.1" y="805.9" width="10" height="7.3"/>
<use href="#hl" x="1032.7" y="807.7" width="10" height="7.3"/>
<use href="#tr" x="98.8" y="814.9" width="7" height="7"/>
<use href="#tr" x="127.6" y="816.4" width="7" height="7"/>
<use href="#tr" x="155.7" y="815.1" width="7" height="7"/>
<use href="#hl" x="853.1" y="814.2" width="10" height="7.3"/>
<use href="#hl" x="862.2" y="815.4" width="10" height="7.3"/>
<use href="#hl" x="884.6" y="816.4" width="10" height="7.3"/>
<use href="#hl" x="893.0" y="814.9" width="10" height="7.3"/>
<use href="#hl" x="903.9" y="814.5" width="10" height="7.3"/>
<use href="#hl" x="912.3" y="816.6" width="10" height="7.3"/>
<use href="#hl" x="930.8" y="814.2" width="10" height="7.3"/>
<use href="#tw" x="952.2" y="814.8" width="6" height="8"/>
<use href="#hl" x="958.1" y="814.5" width="10" height="7.3"/>
<use href="#hl" x="970.8" y="816.4" width="10" height="7.3"/>
<use href="#hl" x="989.6" y="815.8" width="10" height="7.3"/>
<use href="#tw" x="1000.2" y="814.8" width="6" height="8"/>
<use href="#hl" x="1035.2" y="815.1" width="10" height="7.3"/>
<use href="#hl" x="1046.8" y="813.7" width="10" height="7.3"/>
<use href="#tr" x="26.6" y="822.9" width="7" height="7"/>
<use href="#tr" x="130.2" y="824.7" width="7" height="7"/>
<use href="#tr" x="151.5" y="822.4" width="7" height="7"/>
<use href="#tr" x="169.2" y="823.1" width="7" height="7"/>
<use href="#tr" x="178.0" y="823.3" width="7" height="7"/>
<use href="#tw" x="189.0" y="823.2" width="6" height="8"/>
<use href="#tw" x="198.6" y="823.2" width="6" height="8"/>
<use href="#hl" x="848.6" y="824.8" width="10" height="7.3"/>
<use href="#hl" x="859.8" y="823.0" width="10" height="7.3"/>
<use href="#hl" x="876.9" y="822.1" width="10" height="7.3"/>
<use href="#hl" x="886.7" y="823.4" width="10" height="7.3"/>
<use href="#hl" x="897.7" y="822.5" width="10" height="7.3"/>
<use href="#hl" x="917.0" y="823.6" width="10" height="7.3"/>
<use href="#tr" x="928.3" y="824.6" width="7" height="7"/>
<use href="#hl" x="936.6" y="823.3" width="10" height="7.3"/>
<use href="#hl" x="946.5" y="823.1" width="10" height="7.3"/>
<use href="#hl" x="973.1" y="824.6" width="10" height="7.3"/>
<use href="#hl" x="984.1" y="822.1" width="10" height="7.3"/>
<use href="#hl" x="992.0" y="824.2" width="10" height="7.3"/>
<use href="#hl" x="1013.5" y="822.3" width="10" height="7.3"/>
<use href="#hl" x="1031.9" y="822.2" width="10" height="7.3"/>
<use href="#hl" x="1040.3" y="822.4" width="10" height="7.3"/>
<use href="#tr" x="28.9" y="832.7" width="7" height="7"/>
<use href="#tr" x="49.6" y="832.3" width="7" height="7"/>
<use href="#tr" x="96.2" y="832.1" width="7" height="7"/>
<use href="#tr" x="106.6" y="831.0" width="7" height="7"/>
<use href="#tr" x="116.7" y="832.8" width="7" height="7"/>
<use href="#tw" x="184.2" y="831.6" width="6" height="8"/>
<use href="#hl" x="873.5" y="833.4" width="10" height="7.3"/>
<use href="#hl" x="882.7" y="832.4" width="10" height="7.3"/>
<use href="#hl" x="892.4" y="832.0" width="10" height="7.3"/>
<use href="#hl" x="941.2" y="831.3" width="10" height="7.3"/>
<use href="#tr" x="951.0" y="832.2" width="7" height="7"/>
<use href="#hl" x="959.1" y="832.4" width="10" height="7.3"/>
<use href="#hl" x="979.1" y="830.9" width="10" height="7.3"/>
<use href="#hl" x="988.3" y="831.4" width="10" height="7.3"/>
<use href="#hl" x="999.4" y="832.3" width="10" height="7.3"/>
<use href="#hl" x="1008.6" y="831.9" width="10" height="7.3"/>
<use href="#hl" x="1016.7" y="831.2" width="10" height="7.3"/>
<use href="#hl" x="1027.3" y="830.5" width="10" height="7.3"/>
<use href="#hl" x="1036.8" y="832.0" width="10" height="7.3"/>
<use href="#hl" x="1047.2" y="831.0" width="10" height="7.3"/>
<use href="#tr" x="7.2" y="840.3" width="7" height="7"/>
<use href="#tr" x="15.4" y="840.3" width="7" height="7"/>
<use href="#tr" x="151.2" y="839.0" width="7" height="7"/>
<use href="#tr" x="860.1" y="840.4" width="7" height="7"/>
<use href="#hl" x="869.4" y="839.8" width="10" height="7.3"/>
<use href="#hl" x="877.6" y="841.3" width="10" height="7.3"/>
<use href="#hl" x="887.6" y="839.5" width="10" height="7.3"/>
<use href="#hl" x="897.7" y="839.2" width="10" height="7.3"/>
<use href="#hl" x="908.2" y="841.4" width="10" height="7.3"/>
<use href="#hl" x="916.3" y="841.6" width="10" height="7.3"/>
<use href="#hl" x="926.2" y="841.7" width="10" height="7.3"/>
<use href="#hl" x="937.6" y="840.5" width="10" height="7.3"/>
<use href="#hl" x="944.9" y="840.7" width="10" height="7.3"/>
<use href="#hl" x="955.1" y="839.2" width="10" height="7.3"/>
<use href="#hl" x="964.9" y="841.5" width="10" height="7.3"/>
<use href="#hl" x="974.0" y="840.8" width="10" height="7.3"/>
<use href="#hl" x="983.9" y="841.3" width="10" height="7.3"/>
<use href="#hl" x="1001.6" y="841.6" width="10" height="7.3"/>
<use href="#hl" x="1031.8" y="840.4" width="10" height="7.3"/>
<use href="#hl" x="1041.8" y="840.0" width="10" height="7.3"/>
<use href="#tr" x="29.5" y="849.9" width="7" height="7"/>
<use href="#tw" x="97.8" y="848.4" width="6" height="8"/>
<use href="#tr" x="125.1" y="849.7" width="7" height="7"/>
<use href="#tr" x="134.5" y="847.9" width="7" height="7"/>
<use href="#tr" x="182.2" y="849.7" width="7" height="7"/>
<use href="#hl" x="853.0" y="848.1" width="10" height="7.3"/>
<use href="#hl" x="865.3" y="849.0" width="10" height="7.3"/>
<use href="#hl" x="873.2" y="848.5" width="10" height="7.3"/>
<use href="#hl" x="884.7" y="848.6" width="10" height="7.3"/>
<use href="#hl" x="891.0" y="850.1" width="10" height="7.3"/>
<use href="#hl" x="903.6" y="849.7" width="10" height="7.3"/>
<use href="#hl" x="921.0" y="849.5" width="10" height="7.3"/>
<use href="#hl" x="939.4" y="848.4" width="10" height="7.3"/>
<use href="#hl" x="950.4" y="847.6" width="10" height="7.3"/>
<use href="#hl" x="958.2" y="847.7" width="10" height="7.3"/>
<use href="#hl" x="968.5" y="847.9" width="10" height="7.3"/>
<use href="#hl" x="979.6" y="848.3" width="10" height="7.3"/>
<use href="#hl" x="987.8" y="849.8" width="10" height="7.3"/>
<use href="#hl" x="1007.3" y="849.5" width="10" height="7.3"/>
<use href="#hl" x="1019.0" y="848.8" width="10" height="7.3"/>
<use href="#hl" x="1027.7" y="848.1" width="10" height="7.3"/>
<use href="#hl" x="1036.1" y="848.0" width="10" height="7.3"/>
<use href="#tr" x="33.9" y="858.4" width="7" height="7"/>
<use href="#tr" x="91.9" y="856.5" width="7" height="7"/>
<use href="#tr" x="198.6" y="857.8" width="7" height="7"/>
<use href="#hl" x="850.0" y="857.8" width="10" height="7.3"/>
<use href="#hl" x="860.2" y="856.8" width="10" height="7.3"/>
<use href="#tr" x="869.1" y="856.1" width="7" height="7"/>
<use href="#hl" x="886.1" y="856.2" width="10" height="7.3"/>
<use href="#hl" x="895.7" y="856.6" width="10" height="7.3"/>
<use href="#hl" x="908.2" y="857.4" width="10" height="7.3"/>
<use href="#hl" x="916.4" y="857.8" width="10" height="7.3"/>
<use href="#hl" x="934.2" y="858.3" width="10" height="7.3"/>
<use href="#hl" x="944.0" y="858.1" width="10" height="7.3"/>
<use href="#hl" x="965.5" y="858.2" width="10" height="7.3"/>
<use href="#hl" x="984.7" y="858.2" width="10" height="7.3"/>
<use href="#hl" x="991.8" y="857.8" width="10" height="7.3"/>
<use href="#hl" x="1013.3" y="858.1" width="10" height="7.3"/>
<use href="#hl" x="1030.9" y="855.9" width="10" height="7.3"/>
<use href="#hl" x="1040.7" y="856.1" width="10" height="7.3"/>
<use href="#tr" x="29.5" y="866.9" width="7" height="7"/>
<use href="#tr" x="40.6" y="865.8" width="7" height="7"/>
<use href="#tr" x="59.4" y="866.0" width="7" height="7"/>
<use href="#tr" x="96.7" y="865.3" width="7" height="7"/>
<use href="#tr" x="105.6" y="865.0" width="7" height="7"/>
<use href="#tr" x="117.1" y="865.5" width="7" height="7"/>
<use href="#tr" x="125.6" y="865.6" width="7" height="7"/>
<use href="#tr" x="144.0" y="864.2" width="7" height="7"/>
<use href="#tw" x="155.4" y="865.2" width="6" height="8"/>
<use href="#tr" x="165.2" y="867.1" width="7" height="7"/>
<use href="#hl" x="872.5" y="864.5" width="10" height="7.3"/>
<use href="#tr" x="895.1" y="867.0" width="7" height="7"/>
<use href="#hl" x="910.7" y="866.6" width="10" height="7.3"/>
<use href="#hl" x="920.9" y="866.6" width="10" height="7.3"/>
<use href="#hl" x="931.5" y="866.6" width="10" height="7.3"/>
<use href="#hl" x="950.2" y="864.6" width="10" height="7.3"/>
<use href="#hl" x="960.5" y="864.6" width="10" height="7.3"/>
<use href="#hl" x="967.7" y="865.4" width="10" height="7.3"/>
<use href="#hl" x="980.2" y="866.7" width="10" height="7.3"/>
<use href="#hl" x="987.8" y="866.1" width="10" height="7.3"/>
<use href="#hl" x="998.0" y="866.1" width="10" height="7.3"/>
<use href="#hl" x="1017.6" y="865.1" width="10" height="7.3"/>
<use href="#hl" x="1026.9" y="867.0" width="10" height="7.3"/>
<use href="#tr" x="25.8" y="874.4" width="7" height="7"/>
<use href="#tr" x="35.1" y="875.5" width="7" height="7"/>
<use href="#tr" x="82.4" y="875.3" width="7" height="7"/>
<use href="#tr" x="91.6" y="874.6" width="7" height="7"/>
<use href="#tr" x="100.9" y="874.6" width="7" height="7"/>
<use href="#tr" x="111.9" y="873.8" width="7" height="7"/>
<use href="#tr" x="149.1" y="875.3" width="7" height="7"/>
<use href="#hl" x="849.1" y="872.7" width="10" height="7.3"/>
<use href="#hl" x="860.3" y="874.2" width="10" height="7.3"/>
<use href="#hl" x="889.6" y="874.7" width="10" height="7.3"/>
<use href="#hl" x="896.2" y="875.4" width="10" height="7.3"/>
<use href="#hl" x="908.0" y="872.7" width="10" height="7.3"/>
<use href="#hl" x="916.9" y="873.1" width="10" height="7.3"/>
<use href="#hl" x="927.6" y="874.4" width="10" height="7.3"/>
<use href="#hl" x="937.3" y="875.1" width="10" height="7.3"/>
<use href="#hl" x="946.3" y="874.5" width="10" height="7.3"/>
<use href="#hl" x="954.5" y="874.7" width="10" height="7.3"/>
<use href="#tr" x="964.7" y="874.4" width="7" height="7"/>
<use href="#hl" x="982.9" y="873.1" width="10" height="7.3"/>
<use href="#hl" x="992.0" y="872.6" width="10" height="7.3"/>
<use href="#hl" x="1003.2" y="873.4" width="10" height="7.3"/>
<use href="#hl" x="1011.3" y="875.1" width="10" height="7.3"/>
<use href="#hl" x="1031.2" y="873.0" width="10" height="7.3"/>
<use href="#tr" x="9.9" y="883.5" width="7" height="7"/>
<use href="#tr" x="30.0" y="881.5" width="7" height="7"/>
<use href="#tr" x="50.4" y="882.8" width="7" height="7"/>
<use href="#tr" x="58.4" y="881.6" width="7" height="7"/>
<use href="#tr" x="86.7" y="882.1" width="7" height="7"/>
<use href="#tr" x="116.1" y="881.0" width="7" height="7"/>
<use href="#tr" x="134.3" y="882.4" width="7" height="7"/>
<use href="#tw" x="145.8" y="882.0" width="6" height="8"/>
<use href="#tr" x="153.8" y="883.0" width="7" height="7"/>
<use href="#tw" x="184.2" y="882.0" width="6" height="8"/>
<use href="#tr" x="903.3" y="881.8" width="7" height="7"/>
<use href="#hl" x="940.8" y="882.1" width="10" height="7.3"/>
<use href="#hl" x="952.0" y="882.3" width="10" height="7.3"/>
<use href="#hl" x="959.3" y="881.3" width="10" height="7.3"/>
<use href="#hl" x="969.2" y="882.6" width="10" height="7.3"/>
<use href="#hl" x="978.3" y="881.8" width="10" height="7.3"/>
<use href="#hl" x="990.2" y="881.9" width="10" height="7.3"/>
<use href="#hl" x="996.7" y="881.4" width="10" height="7.3"/>
<use href="#hl" x="1008.8" y="882.2" width="10" height="7.3"/>
<use href="#hl" x="1017.3" y="883.6" width="10" height="7.3"/>
<use href="#hl" x="1025.8" y="881.7" width="10" height="7.3"/>
<use href="#hl" x="1036.2" y="881.5" width="10" height="7.3"/>
<use href="#hl" x="1045.1" y="883.1" width="10" height="7.3"/>
<use href="#tr" x="26.2" y="892.0" width="7" height="7"/>
<use href="#tr" x="33.8" y="890.0" width="7" height="7"/>
<use href="#tr" x="111.2" y="891.6" width="7" height="7"/>
<use href="#tr" x="148.8" y="890.6" width="7" height="7"/>
<use href="#tr" x="160.1" y="890.4" width="7" height="7"/>
<use href="#tr" x="188.8" y="891.6" width="7" height="7"/>
<use href="#hl" x="908.1" y="890.6" width="10" height="7.3"/>
<use href="#hl" x="917.2" y="891.1" width="10" height="7.3"/>
<use href="#hl" x="927.0" y="891.6" width="10" height="7.3"/>
<use href="#hl" x="936.8" y="892.2" width="10" height="7.3"/>
<use href="#hl" x="947.0" y="889.7" width="10" height="7.3"/>
<use href="#hl" x="956.0" y="890.4" width="10" height="7.3"/>
<use href="#hl" x="965.5" y="889.6" width="10" height="7.3"/>
<use href="#hl" x="974.2" y="891.0" width="10" height="7.3"/>
<use href="#hl" x="982.5" y="889.8" width="10" height="7.3"/>
<use href="#hl" x="1013.1" y="890.3" width="10" height="7.3"/>
<use href="#hl" x="1021.6" y="892.0" width="10" height="7.3"/>
<use href="#hl" x="1032.3" y="890.5" width="10" height="7.3"/>
<use href="#hl" x="1041.6" y="890.5" width="10" height="7.3"/>
<use href="#tr" x="39.0" y="898.6" width="7" height="7"/>
<use href="#tr" x="48.5" y="898.4" width="7" height="7"/>
<use href="#tr" x="118.0" y="898.4" width="7" height="7"/>
<use href="#tr" x="136.8" y="900.4" width="7" height="7"/>
<use href="#tr" x="146.1" y="900.3" width="7" height="7"/>
<use href="#tr" x="154.4" y="899.3" width="7" height="7"/>
<use href="#hl" x="903.5" y="900.7" width="10" height="7.3"/>
<use href="#hl" x="913.5" y="897.7" width="10" height="7.3"/>
<use href="#hl" x="922.2" y="898.0" width="10" height="7.3"/>
<use href="#hl" x="930.4" y="900.5" width="10" height="7.3"/>
<use href="#hl" x="949.2" y="900.1" width="10" height="7.3"/>
<use href="#hl" x="959.8" y="898.4" width="10" height="7.3"/>
<use href="#hl" x="971.2" y="898.6" width="10" height="7.3"/>
<use href="#hl" x="979.0" y="898.1" width="10" height="7.3"/>
<use href="#hl" x="987.3" y="899.9" width="10" height="7.3"/>
<use href="#hl" x="998.2" y="900.5" width="10" height="7.3"/>
<use href="#tr" x="1018.2" y="898.3" width="7" height="7"/>
<use href="#hl" x="1027.0" y="898.9" width="10" height="7.3"/>
<use href="#hl" x="1037.3" y="899.7" width="10" height="7.3"/>
<use href="#hl" x="1047.9" y="900.3" width="10" height="7.3"/>
<use href="#tr" x="15.2" y="907.5" width="7" height="7"/>
<use href="#tr" x="34.6" y="907.4" width="7" height="7"/>
<use href="#tr" x="46.0" y="906.2" width="7" height="7"/>
<use href="#tr" x="121.6" y="907.3" width="7" height="7"/>
<use href="#tr" x="130.0" y="906.5" width="7" height="7"/>
<use href="#tr" x="189.2" y="908.8" width="7" height="7"/>
<use href="#tw" x="198.6" y="907.2" width="6" height="8"/>
<use href="#hl" x="907.1" y="907.9" width="10" height="7.3"/>
<use href="#hl" x="917.1" y="907.7" width="10" height="7.3"/>
<use href="#hl" x="927.7" y="907.5" width="10" height="7.3"/>
<use href="#hl" x="935.7" y="906.8" width="10" height="7.3"/>
<use href="#hl" x="945.5" y="907.7" width="10" height="7.3"/>
<use href="#hl" x="953.8" y="908.6" width="10" height="7.3"/>
<use href="#hl" x="992.2" y="906.9" width="10" height="7.3"/>
<use href="#hl" x="1012.2" y="909.1" width="10" height="7.3"/>
<use href="#hl" x="1022.1" y="908.5" width="10" height="7.3"/>
<use href="#hl" x="1032.4" y="907.2" width="10" height="7.3"/>
<use href="#hl" x="1040.8" y="907.2" width="10" height="7.3"/>
<use href="#tr" x="10.0" y="916.3" width="7" height="7"/>
<use href="#tr" x="19.5" y="916.8" width="7" height="7"/>
<use href="#tr" x="29.6" y="915.3" width="7" height="7"/>
<use href="#tr" x="107.3" y="917.2" width="7" height="7"/>
<use href="#tr" x="116.3" y="917.0" width="7" height="7"/>
<use href="#tr" x="145.1" y="915.7" width="7" height="7"/>
<use href="#hl" x="919.9" y="916.8" width="10" height="7.3"/>
<use href="#hl" x="932.4" y="916.8" width="10" height="7.3"/>
<use href="#hl" x="940.5" y="917.0" width="10" height="7.3"/>
<use href="#hl" x="961.0" y="916.5" width="10" height="7.3"/>
<use href="#hl" x="967.7" y="916.5" width="10" height="7.3"/>
<use href="#hl" x="989.7" y="914.8" width="10" height="7.3"/>
<use href="#hl" x="996.6" y="916.5" width="10" height="7.3"/>
<use href="#hl" x="1006.2" y="916.6" width="10" height="7.3"/>
<use href="#tw" x="1019.4" y="915.6" width="6" height="8"/>
<use href="#hl" x="1034.8" y="917.5" width="10" height="7.3"/>
<use href="#hl" x="1045.3" y="917.1" width="10" height="7.3"/>
<use href="#tr" x="24.0" y="923.9" width="7" height="7"/>
<use href="#tr" x="110.8" y="923.2" width="7" height="7"/>
<use href="#tr" x="197.5" y="924.6" width="7" height="7"/>
<use href="#hl" x="860.1" y="923.8" width="10" height="7.3"/>
<use href="#hl" x="887.6" y="924.8" width="10" height="7.3"/>
<use href="#hl" x="897.7" y="923.4" width="10" height="7.3"/>
<use href="#hl" x="908.1" y="924.4" width="10" height="7.3"/>
<use href="#hl" x="934.4" y="923.2" width="10" height="7.3"/>
<use href="#hl" x="956.5" y="925.0" width="10" height="7.3"/>
<use href="#hl" x="963.0" y="925.4" width="10" height="7.3"/>
<use href="#hl" x="973.5" y="924.6" width="10" height="7.3"/>
<use href="#hl" x="985.0" y="923.4" width="10" height="7.3"/>
<use href="#tw" x="995.4" y="924.0" width="6" height="8"/>
<use href="#hl" x="1003.5" y="923.6" width="10" height="7.3"/>
<use href="#hl" x="1013.4" y="924.2" width="10" height="7.3"/>
<use href="#hl" x="1023.4" y="923.3" width="10" height="7.3"/>
<use href="#tw" x="1033.8" y="924.0" width="6" height="8"/>
<use href="#hl" x="1040.6" y="923.9" width="10" height="7.3"/>
<use href="#tr" x="39.7" y="934.0" width="7" height="7"/>
<use href="#tr" x="125.6" y="932.4" width="8" height="8"/>
<use href="#tr" x="156.2" y="933.4" width="7" height="7"/>
<use href="#hl" x="852.7" y="933.0" width="10" height="7.3"/>
<use href="#hl" x="863.7" y="931.4" width="10" height="7.3"/>
<use href="#hl" x="882.5" y="933.3" width="10" height="7.3"/>
<use href="#hl" x="913.2" y="931.7" width="10" height="7.3"/>
<use href="#hl" x="921.3" y="931.8" width="10" height="7.3"/>
<use href="#hl" x="929.9" y="932.5" width="10" height="7.3"/>
<use href="#hl" x="941.9" y="932.8" width="10" height="7.3"/>
<use href="#hl" x="951.8" y="932.8" width="10" height="7.3"/>
<use href="#hl" x="960.5" y="932.0" width="10" height="7.3"/>
<use href="#hl" x="968.6" y="931.4" width="10" height="7.3"/>
<use href="#hl" x="980.4" y="931.6" width="10" height="7.3"/>
<use href="#hl" x="989.6" y="933.4" width="10" height="7.3"/>
<use href="#hl" x="999.9" y="931.4" width="10" height="7.3"/>
<use href="#hl" x="1018.9" y="931.3" width="10" height="7.3"/>
<use href="#hl" x="1026.7" y="931.6" width="10" height="7.3"/>
<use href="#hl" x="1035.3" y="932.3" width="10" height="7.3"/>
<use href="#hl" x="1045.6" y="934.2" width="10" height="7.3"/>
<use href="#hl" x="860.6" y="940.0" width="10" height="7.3"/>
<use href="#hl" x="877.1" y="941.1" width="10" height="7.3"/>
<use href="#hl" x="924.7" y="941.7" width="10" height="7.3"/>
<use href="#hl" x="936.1" y="942.2" width="10" height="7.3"/>
<use href="#hl" x="945.4" y="939.7" width="10" height="7.3"/>
<use href="#hl" x="955.4" y="941.1" width="10" height="7.3"/>
<use href="#hl" x="965.8" y="941.6" width="10" height="7.3"/>
<use href="#hl" x="974.9" y="941.0" width="10" height="7.3"/>
<use href="#hl" x="994.6" y="940.3" width="10" height="7.3"/>
<use href="#hl" x="1002.0" y="942.4" width="10" height="7.3"/>
<use href="#hl" x="1012.6" y="942.6" width="10" height="7.3"/>
<use href="#hl" x="1023.4" y="940.2" width="10" height="7.3"/>
<use href="#hl" x="1033.4" y="941.1" width="10" height="7.3"/>
<use href="#hl" x="1040.9" y="940.0" width="10" height="7.3"/>
<use href="#tr" x="40.1" y="949.5" width="7" height="7"/>
<use href="#tr" x="125.6" y="949.2" width="8" height="8"/>
<use href="#hl" x="855.8" y="950.8" width="10" height="7.3"/>
<use href="#hl" x="862.2" y="949.3" width="10" height="7.3"/>
<use href="#hl" x="883.2" y="949.4" width="10" height="7.3"/>
<use href="#hl" x="920.2" y="949.8" width="10" height="7.3"/>
<use href="#hl" x="942.0" y="948.6" width="10" height="7.3"/>
<use href="#hl" x="949.5" y="948.3" width="10" height="7.3"/>
<use href="#hl" x="968.7" y="950.9" width="10" height="7.3"/>
<use href="#hl" x="977.6" y="948.9" width="10" height="7.3"/>
<use href="#hl" x="1008.8" y="949.0" width="10" height="7.3"/>
<use href="#hl" x="1017.6" y="950.1" width="10" height="7.3"/>
<use href="#hl" x="1026.5" y="950.9" width="10" height="7.3"/>
<use href="#hl" x="1035.7" y="950.4" width="10" height="7.3"/>
<use href="#hl" x="1045.7" y="950.9" width="10" height="7.3"/>
<use href="#tr" x="188.2" y="958.1" width="7" height="7"/>
<use href="#hl" x="848.6" y="959.0" width="10" height="7.3"/>
<use href="#hl" x="917.0" y="959.0" width="10" height="7.3"/>
<use href="#hl" x="924.7" y="958.5" width="10" height="7.3"/>
<use href="#hl" x="946.6" y="957.5" width="10" height="7.3"/>
<use href="#hl" x="954.2" y="956.7" width="10" height="7.3"/>
<use href="#hl" x="973.2" y="958.4" width="10" height="7.3"/>
<use href="#hl" x="982.8" y="958.9" width="10" height="7.3"/>
<use href="#hl" x="1011.0" y="958.4" width="10" height="7.3"/>
<use href="#hl" x="1021.8" y="958.0" width="10" height="7.3"/>
<use href="#tw" x="155.4" y="966.0" width="6" height="8"/>
<use href="#tr" x="164.4" y="965.4" width="7" height="7"/>
<use href="#hl" x="854.0" y="965.5" width="10" height="7.3"/>
<use href="#hl" x="863.0" y="966.6" width="10" height="7.3"/>
<use href="#hl" x="901.1" y="964.9" width="10" height="7.3"/>
<use href="#hl" x="920.9" y="965.4" width="10" height="7.3"/>
<use href="#tw" x="933.0" y="966.0" width="6" height="8"/>
<use href="#hl" x="940.1" y="967.6" width="10" height="7.3"/>
<use href="#hl" x="948.8" y="965.2" width="10" height="7.3"/>
<use href="#hl" x="961.6" y="967.6" width="10" height="7.3"/>
<use href="#hl" x="970.6" y="965.3" width="10" height="7.3"/>
<use href="#hl" x="978.0" y="965.7" width="10" height="7.3"/>
<use href="#hl" x="990.2" y="967.8" width="10" height="7.3"/>
<use href="#hl" x="999.3" y="967.4" width="10" height="7.3"/>
<use href="#hl" x="1008.1" y="966.0" width="10" height="7.3"/>
<use href="#hl" x="1037.0" y="967.6" width="10" height="7.3"/>
<use href="#hl" x="1045.3" y="967.6" width="10" height="7.3"/>
<use href="#tr" x="457.2" y="974.6" width="7" height="7"/>
<use href="#tr" x="497.2" y="974.1" width="7" height="7"/>
<use href="#tr" x="532.7" y="974.1" width="7" height="7"/>
<use href="#tr" x="544.2" y="976.2" width="7" height="7"/>
<use href="#tr" x="563.7" y="973.7" width="7" height="7"/>
<use href="#tr" x="582.1" y="973.7" width="7" height="7"/>
<use href="#tr" x="602.4" y="975.1" width="7" height="7"/>
<use href="#tr" x="640.4" y="973.5" width="7" height="7"/>
<use href="#tr" x="669.9" y="975.0" width="7" height="7"/>
<use href="#tr" x="811.2" y="973.7" width="7" height="7"/>
<use href="#hl" x="888.5" y="975.8" width="10" height="7.3"/>
<use href="#hl" x="899.0" y="974.6" width="10" height="7.3"/>
<use href="#hl" x="906.3" y="974.3" width="10" height="7.3"/>
<use href="#hl" x="918.3" y="975.3" width="10" height="7.3"/>
<use href="#tw" x="937.8" y="974.4" width="6" height="8"/>
<use href="#hl" x="944.5" y="974.5" width="10" height="7.3"/>
<use href="#hl" x="965.6" y="975.6" width="10" height="7.3"/>
<use href="#hl" x="993.5" y="976.2" width="10" height="7.3"/>
<use href="#tr" x="1004.6" y="976.2" width="7" height="7"/>
<use href="#hl" x="1021.2" y="974.2" width="10" height="7.3"/>
<use href="#hl" x="1030.9" y="975.4" width="10" height="7.3"/>
<use href="#hl" x="1041.2" y="975.4" width="10" height="7.3"/>
<use href="#tr" x="451.8" y="984.7" width="7" height="7"/>
<use href="#tr" x="480.0" y="982.0" width="7" height="7"/>
<use href="#tr" x="489.7" y="983.3" width="7" height="7"/>
<use href="#tr" x="508.9" y="982.7" width="7" height="7"/>
<use href="#tr" x="530.6" y="982.8" width="7" height="7"/>
<use href="#tr" x="539.9" y="982.5" width="7" height="7"/>
<use href="#tr" x="556.6" y="982.4" width="7" height="7"/>
<use href="#tr" x="568.2" y="983.6" width="7" height="7"/>
<use href="#tr" x="576.2" y="982.1" width="7" height="7"/>
<use href="#tr" x="607.2" y="982.2" width="7" height="7"/>
<use href="#tr" x="626.2" y="982.6" width="7" height="7"/>
<use href="#tr" x="634.1" y="984.2" width="7" height="7"/>
<use href="#tr" x="653.8" y="982.9" width="7" height="7"/>
<use href="#tr" x="673.8" y="984.3" width="7" height="7"/>
<use href="#tr" x="768.9" y="983.2" width="7" height="7"/>
<use href="#tr" x="806.9" y="984.0" width="7" height="7"/>
<use href="#hl" x="874.9" y="983.1" width="10" height="7.3"/>
<use href="#hl" x="882.8" y="982.7" width="10" height="7.3"/>
<use href="#tr" x="893.0" y="984.8" width="7" height="7"/>
<use href="#hl" x="902.8" y="983.2" width="10" height="7.3"/>
<use href="#hl" x="921.8" y="983.7" width="10" height="7.3"/>
<use href="#hl" x="949.2" y="983.5" width="10" height="7.3"/>
<use href="#hl" x="958.8" y="981.8" width="10" height="7.3"/>
<use href="#hl" x="970.3" y="983.4" width="10" height="7.3"/>
<use href="#hl" x="979.6" y="981.7" width="10" height="7.3"/>
<use href="#hl" x="988.5" y="983.2" width="10" height="7.3"/>
<use href="#hl" x="1000.0" y="983.6" width="10" height="7.3"/>
<use href="#hl" x="1009.6" y="983.1" width="10" height="7.3"/>
<use href="#hl" x="1017.1" y="982.7" width="10" height="7.3"/>
<use href="#hl" x="1026.5" y="982.2" width="10" height="7.3"/>
<use href="#hl" x="1037.0" y="982.5" width="10" height="7.3"/>
<use href="#tr" x="458.7" y="990.6" width="7" height="7"/>
<use href="#tr" x="475.7" y="990.7" width="7" height="7"/>
<use href="#tr" x="523.1" y="991.1" width="7" height="7"/>
<use href="#tr" x="563.4" y="992.0" width="7" height="7"/>
<use href="#tr" x="580.8" y="992.9" width="7" height="7"/>
<use href="#tr" x="611.6" y="992.1" width="7" height="7"/>
<use href="#tr" x="678.8" y="991.3" width="7" height="7"/>
<use href="#tr" x="734.6" y="991.4" width="7" height="7"/>
<use href="#tr" x="755.1" y="993.0" width="7" height="7"/>
<use href="#tr" x="822.6" y="990.7" width="7" height="7"/>
<use href="#tr" x="879.0" y="992.7" width="7" height="7"/>
<use href="#hl" x="897.5" y="992.3" width="10" height="7.3"/>
<use href="#hl" x="905.8" y="992.2" width="10" height="7.3"/>
<use href="#hl" x="917.4" y="993.1" width="10" height="7.3"/>
<use href="#hl" x="935.2" y="991.7" width="10" height="7.3"/>
<use href="#hl" x="944.5" y="990.3" width="10" height="7.3"/>
<use href="#hl" x="955.4" y="992.2" width="10" height="7.3"/>
<use href="#hl" x="975.7" y="991.8" width="10" height="7.3"/>
<use href="#hl" x="994.5" y="992.5" width="10" height="7.3"/>
<use href="#hl" x="1003.7" y="992.5" width="10" height="7.3"/>
<use href="#hl" x="1011.1" y="992.1" width="10" height="7.3"/>
<use href="#hl" x="1022.5" y="990.4" width="10" height="7.3"/>
<use href="#hl" x="1030.9" y="991.4" width="10" height="7.3"/>
<use href="#hl" x="1042.2" y="990.8" width="10" height="7.3"/>
<use href="#tr" x="490.3" y="1000.6" width="7" height="7"/>
<use href="#tr" x="501.3" y="1001.1" width="7" height="7"/>
<use href="#tr" x="519.1" y="1000.8" width="7" height="7"/>
<use href="#tr" x="527.9" y="1000.1" width="7" height="7"/>
<use href="#tr" x="548.5" y="1000.2" width="7" height="7"/>
<use href="#tr" x="566.4" y="999.8" width="7" height="7"/>
<use href="#tw" x="635.4" y="999.6" width="6" height="8"/>
<use href="#tr" x="644.4" y="1000.5" width="7" height="7"/>
<use href="#tr" x="674.7" y="998.8" width="7" height="7"/>
<use href="#tr" x="681.7" y="998.8" width="7" height="7"/>
<use href="#hl" x="874.5" y="999.5" width="10" height="7.3"/>
<use href="#hl" x="893.9" y="999.5" width="10" height="7.3"/>
<use href="#hl" x="901.1" y="999.8" width="10" height="7.3"/>
<use href="#hl" x="949.7" y="999.6" width="10" height="7.3"/>
<use href="#hl" x="980.5" y="1000.9" width="10" height="7.3"/>
<use href="#hl" x="1009.0" y="998.9" width="10" height="7.3"/>
<use href="#hl" x="1038.2" y="1000.7" width="10" height="7.3"/>
<use href="#tr" x="1046.3" y="1001.2" width="7" height="7"/>
<use href="#tr" x="506.1" y="1009.3" width="7" height="7"/>
<use href="#tr" x="514.4" y="1007.7" width="7" height="7"/>
<use href="#tr" x="525.4" y="1007.7" width="7" height="7"/>
<use href="#tr" x="640.0" y="1008.3" width="7" height="7"/>
<use href="#tw" x="688.2" y="1008.0" width="6" height="8"/>
<use href="#tw" x="832.2" y="1008.0" width="6" height="8"/>
<use href="#hl" x="876.5" y="1008.4" width="10" height="7.3"/>
<use href="#hl" x="899.0" y="1008.6" width="10" height="7.3"/>
<use href="#hl" x="915.8" y="1008.2" width="10" height="7.3"/>
<use href="#hl" x="924.4" y="1007.9" width="10" height="7.3"/>
<use href="#hl" x="944.2" y="1008.7" width="10" height="7.3"/>
<use href="#hl" x="955.3" y="1009.1" width="10" height="7.3"/>
<use href="#hl" x="975.4" y="1009.7" width="10" height="7.3"/>
<use href="#hl" x="982.3" y="1007.1" width="10" height="7.3"/>
<use href="#tr" x="1006.0" y="1008.0" width="7" height="7"/>
<use href="#hl" x="1011.5" y="1007.4" width="10" height="7.3"/>
<use href="#hl" x="1021.0" y="1007.6" width="10" height="7.3"/>
<use href="#hl" x="1031.8" y="1007.5" width="10" height="7.3"/>
<use href="#tr" x="528.3" y="1015.6" width="7" height="7"/>
<use href="#tr" x="596.7" y="1017.4" width="7" height="7"/>
<use href="#tr" x="636.2" y="1017.0" width="7" height="7"/>
<use href="#tr" x="645.7" y="1017.8" width="7" height="7"/>
<use href="#tr" x="749.2" y="1015.6" width="7" height="7"/>
<use href="#tr" x="787.8" y="1017.6" width="7" height="7"/>
<use href="#hl" x="891.0" y="1015.7" width="10" height="7.3"/>
<use href="#tr" x="902.5" y="1015.9" width="7" height="7"/>
<use href="#hl" x="923.1" y="1016.6" width="10" height="7.3"/>
<use href="#hl" x="932.7" y="1018.3" width="10" height="7.3"/>
<use href="#hl" x="939.4" y="1015.8" width="10" height="7.3"/>
<use href="#hl" x="950.3" y="1017.3" width="10" height="7.3"/>
<use href="#hl" x="980.6" y="1017.9" width="10" height="7.3"/>
<use href="#hl" x="987.3" y="1015.8" width="10" height="7.3"/>
<use href="#hl" x="999.3" y="1017.7" width="10" height="7.3"/>
<use href="#hl" x="1018.2" y="1016.5" width="10" height="7.3"/>
<use href="#hl" x="1035.9" y="1016.4" width="10" height="7.3"/>
<use href="#tr" x="553.6" y="1024.3" width="7" height="7"/>
<use href="#tr" x="573.8" y="1026.1" width="7" height="7"/>
<use href="#tr" x="602.1" y="1024.1" width="7" height="7"/>
<use href="#tr" x="621.2" y="1025.7" width="7" height="7"/>
<use href="#tr" x="639.3" y="1026.6" width="7" height="7"/>
<use href="#tw" x="649.8" y="1024.8" width="6" height="8"/>
<use href="#tr" x="718.0" y="1025.4" width="7" height="7"/>
<use href="#tr" x="745.2" y="1024.1" width="7" height="7"/>
<use href="#tr" x="764.4" y="1025.2" width="7" height="7"/>
<use href="#hl" x="870.1" y="1024.4" width="10" height="7.3"/>
<use href="#hl" x="898.7" y="1025.0" width="10" height="7.3"/>
<use href="#hl" x="945.1" y="1024.2" width="10" height="7.3"/>
<use href="#hl" x="954.2" y="1024.8" width="10" height="7.3"/>
<use href="#hl" x="963.4" y="1026.4" width="10" height="7.3"/>
<use href="#tw" x="976.2" y="1024.8" width="6" height="8"/>
<use href="#hl" x="991.7" y="1024.3" width="10" height="7.3"/>
<use href="#tr" x="1004.7" y="1026.6" width="7" height="7"/>
<use href="#hl" x="1014.2" y="1025.6" width="10" height="7.3"/>
<use href="#hl" x="1033.5" y="1024.4" width="10" height="7.3"/>
<use href="#hl" x="1039.6" y="1025.4" width="10" height="7.3"/>
<use href="#tr" x="549.5" y="1034.2" width="7" height="7"/>
<use href="#tr" x="575.9" y="1033.5" width="7" height="7"/>
<use href="#tr" x="587.1" y="1032.2" width="7" height="7"/>
<use href="#tr" x="605.2" y="1032.7" width="7" height="7"/>
<use href="#tr" x="617.0" y="1033.0" width="7" height="7"/>
<use href="#tr" x="645.5" y="1035.1" width="7" height="7"/>
<use href="#tr" x="653.0" y="1033.3" width="7" height="7"/>
<use href="#tw" x="673.8" y="1033.2" width="6" height="8"/>
<use href="#tr" x="758.4" y="1033.5" width="7" height="7"/>
<use href="#hl" x="881.5" y="1033.1" width="10" height="7.3"/>
<use href="#hl" x="911.2" y="1034.8" width="10" height="7.3"/>
<use href="#hl" x="920.2" y="1032.2" width="10" height="7.3"/>
<use href="#tr" x="931.5" y="1034.1" width="7" height="7"/>
<use href="#hl" x="939.2" y="1034.3" width="10" height="7.3"/>
<use href="#hl" x="949.0" y="1034.1" width="10" height="7.3"/>
<use href="#hl" x="961.2" y="1032.1" width="10" height="7.3"/>
<use href="#hl" x="967.9" y="1034.2" width="10" height="7.3"/>
<use href="#hl" x="978.2" y="1034.1" width="10" height="7.3"/>
<use href="#hl" x="998.4" y="1035.1" width="10" height="7.3"/>
<use href="#hl" x="1007.8" y="1033.6" width="10" height="7.3"/>
<use href="#hl" x="1018.5" y="1033.0" width="10" height="7.3"/>
<use href="#hl" x="1035.3" y="1034.2" width="10" height="7.3"/>
<use href="#hl" x="1047.9" y="1032.2" width="10" height="7.3"/>
<use href="#tr" x="572.7" y="1042.8" width="7" height="7"/>
<use href="#tr" x="593.1" y="1041.9" width="7" height="7"/>
<use href="#tw" x="649.8" y="1041.6" width="6" height="8"/>
<use href="#tr" x="869.7" y="1042.9" width="7" height="7"/>
<use href="#hl" x="877.2" y="1042.9" width="10" height="7.3"/>
<use href="#hl" x="905.3" y="1043.4" width="10" height="7.3"/>
<use href="#hl" x="925.6" y="1040.8" width="10" height="7.3"/>
<use href="#hl" x="945.4" y="1042.6" width="10" height="7.3"/>
<use href="#hl" x="964.3" y="1041.4" width="10" height="7.3"/>
<use href="#hl" x="973.0" y="1041.3" width="10" height="7.3"/>
<use href="#hl" x="1021.3" y="1040.6" width="10" height="7.3"/>
<use href="#hl" x="1031.3" y="1042.8" width="10" height="7.3"/>
<use href="#tr" x="1042.0" y="1040.7" width="7" height="7"/>
<polygon points="46.5,735.6 56.0,735.6 57.0,746.5 77.7,746.5 77.7,759.7 56.0,759.7 52.0,749.0 46.5,749.0" fill="#5ca8f4"/>
<polygon points="75.0,765.7 86.0,765.7 86.0,775.0 106.6,775.0 106.6,788.6 85.0,788.6 82.0,778.0 75.0,777.7" fill="#5ca8f4"/>
<polygon points="65.7,874.0 70.0,871.6 77.7,874.0 77.7,884.0 71.0,886.0 65.7,883.0" fill="#5ca8f4"/>
<polygon points="46.5,912.5 63.3,910.0 82.6,893.0 97.0,883.6 116.0,895.6 104.2,903.0 101.8,922.0 113.8,936.6 111.4,951.0 99.4,960.6 92.2,958.0 87.4,936.6 68.0,929.0 51.3,922.0" fill="#5ca8f4"/>
<polygon points="771.0,972.0 818.0,972.0 805.0,985.0 790.0,989.0 775.0,982.0" fill="#5ca8f4"/>
<polygon points="851.0,897.0 870.0,880.0 886.0,874.0 911.0,892.0 901.0,905.0 899.0,926.0 882.0,921.0 862.0,924.0 851.0,931.0" fill="#5ca8f4"/>
<rect x="452" y="975" width="9" height="8" fill="#c4c4c4"/><path d="M452 983 V975 M452 978 Q456 976 459 978" stroke="#2a2a2a" stroke-width="1" fill="none"/>
<rect x="462" y="975" width="9" height="8" fill="#c4c4c4"/><path d="M462 983 V975 M462 978 Q466 976 469 978" stroke="#2a2a2a" stroke-width="1" fill="none"/>
<rect x="472" y="975" width="9" height="8" fill="#c4c4c4"/><path d="M472 983 V975 M472 978 Q476 976 479 978" stroke="#2a2a2a" stroke-width="1" fill="none"/>
<rect x="482" y="975" width="9" height="8" fill="#c4c4c4"/><path d="M482 983 V975 M482 978 Q486 976 489 978" stroke="#2a2a2a" stroke-width="1" fill="none"/>
<rect x="492" y="975" width="9" height="8" fill="#c4c4c4"/><path d="M492 983 V975 M492 978 Q496 976 499 978" stroke="#2a2a2a" stroke-width="1" fill="none"/>
<rect x="502" y="975" width="9" height="8" fill="#c4c4c4"/><path d="M502 983 V975 M502 978 Q506 976 509 978" stroke="#2a2a2a" stroke-width="1" fill="none"/>
<rect x="460" y="985" width="9" height="8" fill="#c4c4c4"/><path d="M460 993 V985 M460 988 Q464 986 467 988" stroke="#2a2a2a" stroke-width="1" fill="none"/>
<rect x="470" y="985" width="9" height="8" fill="#c4c4c4"/><path d="M470 993 V985 M470 988 Q474 986 477 988" stroke="#2a2a2a" stroke-width="1" fill="none"/>
<rect x="490" y="985" width="9" height="8" fill="#c4c4c4"/><path d="M490 993 V985 M490 988 Q494 986 497 988" stroke="#2a2a2a" stroke-width="1" fill="none"/>
<rect x="500" y="985" width="9" height="8" fill="#c4c4c4"/><path d="M500 993 V985 M500 988 Q504 986 507 988" stroke="#2a2a2a" stroke-width="1" fill="none"/>
<rect x="510" y="985" width="9" height="8" fill="#c4c4c4"/><path d="M510 993 V985 M510 988 Q514 986 517 988" stroke="#2a2a2a" stroke-width="1" fill="none"/>
<rect x="475" y="995" width="9" height="8" fill="#c4c4c4"/><path d="M475 1003 V995 M475 998 Q479 996 482 998" stroke="#2a2a2a" stroke-width="1" fill="none"/>
<rect x="485" y="995" width="9" height="8" fill="#c4c4c4"/><path d="M485 1003 V995 M485 998 Q489 996 492 998" stroke="#2a2a2a" stroke-width="1" fill="none"/>
<rect x="495" y="995" width="9" height="8" fill="#c4c4c4"/><path d="M495 1003 V995 M495 998 Q499 996 502 998" stroke="#2a2a2a" stroke-width="1" fill="none"/>
<rect x="505" y="995" width="9" height="8" fill="#c4c4c4"/><path d="M505 1003 V995 M505 998 Q509 996 512 998" stroke="#2a2a2a" stroke-width="1" fill="none"/>
<rect x="512" y="995" width="9" height="8" fill="#c4c4c4"/><path d="M512 1003 V995 M512 998 Q516 996 519 998" stroke="#2a2a2a" stroke-width="1" fill="none"/>
<rect x="495" y="1004" width="9" height="8" fill="#c4c4c4"/><path d="M495 1012 V1004 M495 1007 Q499 1005 502 1007" stroke="#2a2a2a" stroke-width="1" fill="none"/>
<rect x="505" y="1004" width="9" height="8" fill="#c4c4c4"/><path d="M505 1012 V1004 M505 1007 Q509 1005 512 1007" stroke="#2a2a2a" stroke-width="1" fill="none"/>
<polyline points="5,639 33,639 33,618.6 62,618.6 62,624.4 91.4,629.3 91.4,638 120.6,638 120.6,629.3 130.3,629.3 130.3,638 140,638 140,657.5 168.2,657.5 168.2,667.2 187.6,667.2 187.6,686.7 205,686.7" fill="none" stroke="#151515" stroke-width="1.2"/>
<polyline points="14.6,715.8 14.6,724.6" fill="none" stroke="#151515" stroke-width="1.2"/>
<polyline points="5,724.6 24.3,724.6 24.3,734.3 91.4,734.3 92.2,744 110,744 110,752.5 150,753.7 150,782.6 205,783.8" fill="none" stroke="#151515" stroke-width="1.2"/>
<polyline points="111.4,774 150,773" fill="none" stroke="#151515" stroke-width="1.2"/>
<polyline points="111.4,774 111.4,792 101.8,792 101.8,830.7 130.7,830.7 130.7,850 150,857 159.6,878.8 159.6,898 150,898 150,955.8 205,955.8" fill="none" stroke="#151515" stroke-width="1.2"/>
<polyline points="5,936.6 52.5,936.6 52.5,945 63.3,946 63.3,954.6 92.2,954.6 92.2,965.4 111.4,965.4 111.4,954.6 150,954.6" fill="none" stroke="#151515" stroke-width="1.2"/>
<polyline points="687,984 725,984 725,993 735,993 735,1013 762,1013 762,1022 802,1022 802,1033 822,1033 822,1042 841,1042 841,1051" fill="none" stroke="#151515" stroke-width="1.2"/>
<polyline points="639,972 639,1040 617,1040" fill="none" stroke="#151515" stroke-width="1.2"/>
<polyline points="850,800 900,800 900,805 1052,805" fill="none" stroke="#151515" stroke-width="1.2"/>
<polyline points="851,713 860,713 860,724 851,724" fill="none" stroke="#151515" stroke-width="1.2"/>
<polyline points="870,800 870,812 1052,812" fill="none" stroke="#151515" stroke-width="1.2"/>
<polyline points="23.6,830.7 24.8,850 34.4,850 34.4,859.6 44,859.6 44,869 51.3,869 56,878.8 63.3,888.4 81.4,888.4 81.4,869 118.7,869 118.7,878.8 121,898 130.7,903 130.7,955.8 140.3,955.8 140.3,965.4 159.6,965.4 159.6,985 205,985 205,975 222,975" fill="none" stroke="#e01818" stroke-width="1.4"/>
<polyline points="522,1003 528,1003 528,1012 537,1012" fill="none" stroke="#e01818" stroke-width="1.4"/>
</g>
</svg>
<!-- map frame -->
<div class="a" style="left:0;top:0;width:1052px;height:2px;background:#a897aa"></div>
<div class="a" style="left:0;top:2px;width:1052px;height:3px;background:#32202e"></div>
<div class="a" style="left:0;top:0;width:2px;height:1080px;background:#a897aa"></div>
<div class="a" style="left:2px;top:2px;width:3px;height:1078px;background:#32202e"></div>
<!-- bottom ruler -->
<div class="a" style="left:5px;top:1051px;width:1047px;height:24px;background:#878787;border-top:1px solid #222;box-sizing:border-box"></div>
<div class="a" style="left:0;top:1075px;width:1100px;height:5px;background:#2e1e30"></div><div class="a" style="left:0;top:1075px;width:1100px;height:2px;background:#8f7c94"></div>
<!-- right ruler -->
<div class="a" style="left:1052px;top:29px;width:43px;height:1046px;background:#878787;border-left:1px solid #222;box-sizing:border-box"></div>
<div class="a" style="left:1095px;top:0;width:9px;height:1080px;background:#8a7590"></div>
<div class="a" style="left:1097px;top:0;width:2px;height:1080px;background:#2a1a2a"></div>

<svg class="a" style="left:0;top:0" width="1052" height="1051"><defs><symbol id="sub" viewBox="0 0 14 7"><ellipse cx="7" cy="3.5" rx="6.3" ry="3" fill="#5ac8f0" stroke="#111" stroke-width="1"/><rect x="5" y="0.8" width="4" height="5.4" fill="#111"/></symbol><symbol id="half" viewBox="0 0 14 11"><ellipse cx="7" cy="5.5" rx="6" ry="4.8" fill="#5ac8f0" stroke="#111" stroke-width="1.2"/><path d="M8 0.8 A6 4.8 0 0 1 8 10.2Z" fill="#111"/></symbol><symbol id="boat" viewBox="0 0 14 10"><path d="M1 3 Q7 0 13 3 V4 H1Z" fill="#111"/><rect x="1" y="4" width="12" height="5" rx="1.5" fill="#5ac8f0" stroke="#111"/></symbol><symbol id="car" viewBox="0 0 14 8"><path d="M0.8 4.5 H13.2 L11.5 7.3 H2.5Z" fill="#5ac8f0" stroke="#111" stroke-width="1"/><path d="M7 4.5 V1 L9 4.5" stroke="#111" fill="none"/></symbol></defs><g fill="none" stroke="#18188c" stroke-width="1.1"><path d="M856 431 L888 461"/><path d="M858 431 L918 486"/><path d="M860 431 L935 507"/><path d="M876 432 L944 500"/><path d="M851 470 L870 489"/><path d="M903 564.4 L948.6 609"/><path d="M898.2 587.2 L973.8 665"/><path d="M925 609 L1003.7 677.5"/><path d="M876 594.3 L918.7 648"/><path d="M866 604.5 L901.4 640.5"/><path d="M851.8 618.7 L905.3 673"/><path d="M885.6 636 L950 701"/><path d="M882 612 L896 627"/></g><use href="#sub" x="856" y="424" width="13" height="6.5"/><use href="#car" x="870" y="423.5" width="14" height="8"/><use href="#sub" x="896.6" y="557.3" width="14" height="6.5"/><use href="#half" x="893.5" y="577" width="13.5" height="10.5"/><use href="#half" x="870" y="585.6" width="14" height="10"/><use href="#half" x="860.5" y="595" width="13.5" height="10"/><use href="#boat" x="878.5" y="603.7" width="14" height="9.5"/><use href="#sub" x="879.3" y="627.3" width="14" height="7"/><use href="#sub" x="845" y="606" width="12" height="6"/><use href="#boat" x="921.8" y="606" width="7" height="6"/></svg>
<div class="a" style="left:853.7px;top:451px;font-size:13px;line-height:14px;color:#1c1c9a;text-decoration:underline;white-space:nowrap">Nimitz</div>
<div class="a" style="left:910.5px;top:473px;font-size:13px;line-height:14px;color:#1c1c9a;text-decoration:underline;white-space:nowrap">Ticonderog</div>
<div class="a" style="left:935.7px;top:496px;font-size:13px;line-height:14px;color:#1c1c9a;text-decoration:underline;white-space:nowrap">Ticonderog</div>
<div class="a" style="left:947px;top:494px;font-size:13px;line-height:14px;color:#1c1c9a;text-decoration:underline;white-space:nowrap">Virginia</div>
<div class="a" style="left:870.6px;top:478px;font-size:13px;line-height:14px;color:#1c1c9a;text-decoration:underline;white-space:nowrap">Burke2B</div>
<div class="a" style="left:846px;top:474px;font-size:13px;line-height:14px;color:#1c1c9a;text-decoration:underline;white-space:nowrap">2a</div>
<div class="a" style="left:946px;top:597px;font-size:13px;line-height:14px;color:#1c1c9a;text-decoration:underline;white-space:nowrap">Burke2A</div>
<div class="a" style="left:895.9px;top:603px;font-size:13px;line-height:14px;color:#1c1c9a;text-decoration:underline;white-space:nowrap">Ferry</div>
<div class="a" style="left:922px;top:600px;font-size:13px;line-height:14px;color:#1c1c9a;text-decoration:underline;white-space:nowrap">Whidbey</div>
<div class="a" style="left:901.4px;top:629px;font-size:13px;line-height:14px;color:#1c1c9a;text-decoration:underline;white-space:nowrap">SanAntonio</div>
<div class="a" style="left:918px;top:637px;font-size:13px;line-height:14px;color:#1c1c9a;text-decoration:underline;white-space:nowrap">Wasp</div>
<div class="a" style="left:973.8px;top:653px;font-size:13px;line-height:14px;color:#1c1c9a;text-decoration:underline;white-space:nowrap">Ticonderog</div>
<div class="a" style="left:1003.6px;top:666px;font-size:13px;line-height:14px;color:#1c1c9a;text-decoration:underline;white-space:nowrap">SSN688</div>
<div class="a" style="left:905.3px;top:661px;font-size:13px;line-height:14px;color:#1c1c9a;text-decoration:underline;white-space:nowrap">Burke2B</div>
<div class="a" style="left:950px;top:690px;font-size:13px;line-height:14px;color:#1c1c9a;text-decoration:underline;white-space:nowrap">Burke2B</div>
<svg class="a" style="left:190px;top:450px" width="16" height="60"><ellipse cx="8" cy="8" rx="6.5" ry="3" fill="#5ac8f0" stroke="#111"/><rect x="6.5" y="5.2" width="3" height="5.6" fill="#111"/><path d="M8 12 L15 20" stroke="#18188c"/><ellipse cx="8" cy="45.5" rx="6.5" ry="3" fill="#5ac8f0" stroke="#111"/><rect x="6.8" y="42.6" width="2.4" height="5.8" fill="#111"/><path d="M8 49 L15 57" stroke="#18188c"/></svg>
<div class="a" style="left:5px;top:0;width:200px;height:1051px;overflow:hidden"><div style="position:absolute;left:-3px;top:826px;font-size:17px;font-weight:bold;line-height:20px;color:#111;white-space:nowrap">en Airfield</div></div>
<div class="a" style="left:288px;top:970px;font-size:18.6px;font-weight:bold;line-height:20px;color:#111;white-space:nowrap">seven towers</div>
<div class="a" style="left:413px;top:971px;width:100px;height:10px;overflow:hidden"><div style="position:absolute;left:0;top:-10px;font-size:18.6px;font-weight:bold;line-height:20px;color:#111;white-space:nowrap">chalcedon</div></div>
<div class="a" style="left:519px;top:980px;font-size:17.5px;font-weight:bold;line-height:20px;color:#111;white-space:nowrap">erenkoy</div>
<div class="a" style="left:508px;top:1009px;font-size:17.5px;font-weight:bold;line-height:20px;color:#111;white-space:nowrap">kucukyali</div>
<div class="a" style="left:931px;top:0;width:122px;height:29px;box-sizing:border-box;background:#f0f0f0;border:1px solid #9a9a9a;border-top:none"></div>
<div class="a" style="left:933px;top:2px;font-size:12.8px;line-height:13px;color:#111;white-space:nowrap">2019-01-18 11:25:34<br>mt=0 et=0</div>
<div class="a" style="left:1053px;top:1px;width:45px;height:28px;background:#fdfdfd;border-top:2px solid #111;border-left:1px solid #777;box-sizing:border-box"></div>
<svg class="a" style="left:1053px;top:1px" width="45" height="28"><path d="M29.4 13.6 L35.0 15.0 L29.4 16.4Z" fill="#e8e020"/><path d="M29.4 16.3 L34.0 19.8 L28.3 18.9Z" fill="#f0a040"/><path d="M28.3 18.9 L31.3 23.8 L26.4 20.8Z" fill="#e8e020"/><path d="M26.4 20.8 L27.3 26.5 L23.8 21.9Z" fill="#f0a040"/><path d="M23.9 21.9 L22.5 27.5 L21.1 21.9Z" fill="#e8e020"/><path d="M21.2 21.9 L17.7 26.5 L18.6 20.8Z" fill="#f0a040"/><path d="M18.6 20.8 L13.7 23.8 L16.7 18.9Z" fill="#e8e020"/><path d="M16.7 18.9 L11.0 19.8 L15.6 16.3Z" fill="#f0a040"/><path d="M15.6 16.4 L10.0 15.0 L15.6 13.6Z" fill="#e8e020"/><path d="M15.6 13.7 L11.0 10.2 L16.7 11.1Z" fill="#f0a040"/><path d="M16.7 11.1 L13.7 6.2 L18.6 9.2Z" fill="#e8e020"/><path d="M18.6 9.2 L17.7 3.5 L21.2 8.1Z" fill="#f0a040"/><path d="M21.1 8.1 L22.5 2.5 L23.9 8.1Z" fill="#e8e020"/><path d="M23.8 8.1 L27.3 3.5 L26.4 9.2Z" fill="#f0a040"/><path d="M26.4 9.2 L31.3 6.2 L28.3 11.1Z" fill="#e8e020"/><path d="M28.3 11.1 L34.0 10.2 L29.4 13.7Z" fill="#f0a040"/><circle cx="22.5" cy="15" r="8.5" fill="#eaea10"/><circle cx="22.5" cy="15" r="5.5" fill="#f8f400"/></svg>
<svg class="a" style="left:1052px;top:29px" width="43" height="1022"><g stroke="#111" stroke-width="1.6"><path d="M0 19.5 H10"/><path d="M0 38.7 H10"/><path d="M0 57.9 H21"/><path d="M0 77.1 H10"/><path d="M0 96.3 H10"/><path d="M0 115.5 H10"/><path d="M0 134.7 H10"/><path d="M0 173.1 H10"/><path d="M0 192.3 H10"/><path d="M0 211.5 H10"/><path d="M0 230.7 H10"/><path d="M0 249.9 H21"/><path d="M0 269.1 H10"/><path d="M0 288.3 H10"/><path d="M0 307.5 H10"/><path d="M0 326.7 H10"/><path d="M0 365.1 H10"/><path d="M0 384.3 H10"/><path d="M0 403.5 H10"/><path d="M0 422.7 H10"/><path d="M0 441.9 H21"/><path d="M0 461.1 H10"/><path d="M0 480.3 H10"/><path d="M0 499.5 H10"/><path d="M0 518.7 H10"/><path d="M0 557.1 H10"/><path d="M0 576.3 H10"/><path d="M0 595.5 H10"/><path d="M0 614.7 H10"/><path d="M0 633.9 H21"/><path d="M0 653.1 H10"/><path d="M0 672.3 H10"/><path d="M0 691.5 H10"/><path d="M0 710.7 H10"/><path d="M0 749.1 H10"/><path d="M0 768.3 H10"/><path d="M0 787.5 H10"/><path d="M0 806.7 H10"/><path d="M0 825.9 H21"/><path d="M0 845.1 H10"/><path d="M0 864.3 H10"/><path d="M0 883.5 H10"/><path d="M0 902.7 H10"/><path d="M0 941.1 H10"/><path d="M0 960.3 H10"/><path d="M0 979.5 H10"/><path d="M0 998.7 H10"/><path d="M0 1017.9 H21"/></g></svg>
<div class="a" style="left:1054px;top:179.5px;font-size:12.5px;font-weight:bold;line-height:15px;color:#1a1a1a;white-space:nowrap">41°40'</div>
<div class="a" style="left:1054px;top:371.5px;font-size:12.5px;font-weight:bold;line-height:15px;color:#1a1a1a;white-space:nowrap">41°30'</div>
<div class="a" style="left:1054px;top:563.5px;font-size:12.5px;font-weight:bold;line-height:15px;color:#1a1a1a;white-space:nowrap">41°20'</div>
<div class="a" style="left:1054px;top:755.5px;font-size:12.5px;font-weight:bold;line-height:15px;color:#1a1a1a;white-space:nowrap">41°10'</div>
<div class="a" style="left:1054px;top:947.5px;font-size:12.5px;font-weight:bold;line-height:15px;color:#1a1a1a;white-space:nowrap">41°</div>
<svg class="a" style="left:0;top:1051px" width="1052" height="24"><g stroke="#111" stroke-width="1.5"><path d="M10.4 0 V6"/><path d="M29.6 0 V6"/><path d="M48.8 0 V6"/><path d="M68.0 0 V6"/><path d="M87.2 0 V6"/><path d="M106.4 0 V11"/><path d="M125.6 0 V6"/><path d="M144.8 0 V6"/><path d="M164.0 0 V6"/><path d="M183.2 0 V6"/><path d="M202.4 0 V6"/><path d="M221.6 0 V6"/><path d="M240.8 0 V6"/><path d="M260.0 0 V6"/><path d="M279.2 0 V6"/><path d="M298.4 0 V11"/><path d="M317.6 0 V6"/><path d="M336.8 0 V6"/><path d="M356.0 0 V6"/><path d="M375.2 0 V6"/><path d="M394.4 0 V6"/><path d="M413.6 0 V6"/><path d="M432.8 0 V6"/><path d="M452.0 0 V6"/><path d="M471.2 0 V6"/><path d="M490.4 0 V11"/><path d="M509.6 0 V6"/><path d="M528.8 0 V6"/><path d="M548.0 0 V6"/><path d="M567.2 0 V6"/><path d="M586.4 0 V6"/><path d="M605.6 0 V6"/><path d="M624.8 0 V6"/><path d="M644.0 0 V6"/><path d="M663.2 0 V6"/><path d="M682.4 0 V11"/><path d="M701.6 0 V6"/><path d="M720.8 0 V6"/><path d="M740.0 0 V6"/><path d="M759.2 0 V6"/><path d="M778.4 0 V6"/><path d="M797.6 0 V6"/><path d="M816.8 0 V6"/><path d="M836.0 0 V6"/><path d="M855.2 0 V6"/><path d="M874.4 0 V11"/><path d="M893.6 0 V6"/><path d="M912.8 0 V6"/><path d="M932.0 0 V6"/><path d="M951.2 0 V6"/><path d="M970.4 0 V6"/><path d="M989.6 0 V6"/><path d="M1008.8 0 V6"/><path d="M1028.0 0 V6"/><path d="M1047.2 0 V6"/></g></svg>
<div class="a" style="left:572.0px;top:1060.5px;font-size:13.5px;line-height:15px;color:#222;white-space:nowrap">29°10'</div>
<div class="a" style="left:764.5px;top:1060.5px;font-size:13.5px;line-height:15px;color:#222;white-space:nowrap">29°20'</div>
<div class="a" style="left:957.0px;top:1060.5px;font-size:13.5px;line-height:15px;color:#222;white-space:nowrap">29°30'</div>
<div class="a" style="left:381px;top:1060.5px;font-size:13.5px;line-height:15px;color:#222;white-space:nowrap">29°</div>
<div class="a" style="left:5px;top:1059px;width:269px;height:16px;background:#8e8e8e;border-top:1px solid #a8a8a8;box-sizing:border-box"></div>
<svg class="a" style="left:5px;top:1059px" width="269" height="16"><path d="M6 6 V13 H199 V6" stroke="#111" stroke-width="1.4" fill="none"/></svg>
<div class="a" style="left:205px;top:1059px;font-size:13.5px;line-height:15px;color:#111;white-space:nowrap">20km (x8)</div>
<div class="a" style="left:12px;top:1028px;width:239px;height:23px;background:#f0f0f0;border:1px solid #8a8a8a;border-bottom:none;box-sizing:border-box"></div>
<div class="a" style="left:335px;top:1035px;width:197px;height:34px;background:#f0f0f0;border:1px solid #a0a0a0;box-sizing:border-box"></div><svg class="a" style="left:335px;top:1035px" width="197" height="34"><rect x="4.5" y="3.5" width="47" height="12" fill="#111"/><rect x="6.0" y="5" width="10" height="9" fill="#ee1111"/><rect x="17.5" y="5" width="10" height="9" fill="#1a2ae0"/><rect x="29.0" y="5" width="10" height="9" fill="#11dd11"/><rect x="40.5" y="5" width="10" height="9" fill="#f8f011"/><rect x="4.5" y="20.5" width="47" height="12" fill="#111"/><rect x="6.0" y="22" width="10" height="9" fill="#ee1111"/><rect x="17.5" y="22" width="10" height="9" fill="#1a2ae0"/><rect x="29.0" y="22" width="10" height="9" fill="#11dd11"/><rect x="40.5" y="22" width="10" height="9" fill="#f8f011"/><rect x="88.5" y="3.5" width="12" height="12" fill="#ee1111" stroke="#111"/><rect x="88.5" y="20.5" width="12" height="12" fill="#1a2ae0" stroke="#111"/><text x="56" y="14" font-size="13" font-family="Liberation Sans" fill="#333">Me :</text><text x="56" y="31" font-size="13" font-family="Liberation Sans" fill="#333">You:</text><rect x="113" y="9" width="18" height="19" rx="3" fill="#dcd4cc" stroke="#1a1a1a" stroke-width="1.6"/><rect x="132" y="9" width="18" height="19" rx="3" fill="#dcd4cc" stroke="#1a1a1a" stroke-width="1.6"/><rect x="151" y="9" width="18" height="19" rx="3" fill="#dcd4cc" stroke="#1a1a1a" stroke-width="1.6"/><path d="M122 11.5 L128 18 L125 18 L127 21 L117 21 L119 18 L116 18Z" fill="#88cc66" stroke="#4a8a3a" stroke-width="0.6"/><path d="M122 21 V25" stroke="#666" stroke-width="1.5"/><circle cx="141" cy="12" r="1.7" fill="#111"/><path d="M138.3 14.5 H143.7 V20 H142.6 V26 H139.4 V20 H138.3Z" fill="#dd1010" stroke="#111" stroke-width="0.6"/><path d="M141 14.5 V26" stroke="#111" stroke-width="1"/><rect x="154" y="13" width="12" height="11" fill="none" stroke="#bbb"/><path d="M154 13 L166 24 M166 13 L154 24" stroke="#bbb"/></svg>
<svg class="a" style="left:1052px;top:1051px" width="43" height="24"><rect x="0.5" y="0.5" width="41" height="23" fill="#888" stroke="#111"/><path d="M5 11 H38 M21 3 V23" stroke="#111" stroke-width="1.5"/><path d="M14 11 L21 8 L28 11 L21 14Z" fill="#111"/><text x="2" y="9" font-size="7" font-family="Liberation Sans" fill="#111">W</text><text x="35" y="15" font-size="7" font-family="Liberation Sans" fill="#111">E</text><text x="25" y="9" font-size="7" font-family="Liberation Sans" fill="#111">N</text><text x="13" y="22" font-size="7" font-family="Liberation Sans" fill="#111">S</text></svg>
<div class="a" style="left:1099px;top:29px;width:41px;height:297px;background:#9b979b"></div>
<div class="a" style="left:1099px;top:0px;width:41px;height:29px;background:#8f8b8f"></div>
<svg class="a" style="left:1099px;top:9px" width="37" height="38"><rect x="0.5" y="0.5" width="36" height="37" fill="#9b979b" stroke="#c9c5c9"/><polygon points="4,2 33,2 35,4 35,35 33,36 4,36 2,35 2,4" fill="#6b676b"/><polygon points="4,1.5 31,1.5 33,3.5 33,31 31,33 4,33 1.5,31 1.5,3.5" fill="#fff98c"/><path d="M19 19 L25 25" stroke="#111" stroke-width="2.6"/><circle cx="15" cy="15" r="6.8" fill="#dcdce0" stroke="#111" stroke-width="1.7"/><path d="M11.5 15 H18.5 M15 11.5 V18.5" stroke="#111" stroke-width="2.2"/></svg>
<svg class="a" style="left:1099px;top:48px" width="37" height="38"><rect x="0.5" y="0.5" width="36" height="37" fill="#9b979b" stroke="#c9c5c9"/><polygon points="4,2 33,2 35,4 35,35 33,36 4,36 2,35 2,4" fill="#6b676b"/><polygon points="4,1.5 31,1.5 33,3.5 33,31 31,33 4,33 1.5,31 1.5,3.5" fill="#fff98c"/><path d="M19 19 L25 25" stroke="#111" stroke-width="2.6"/><circle cx="15" cy="15" r="6.8" fill="#dcdce0" stroke="#111" stroke-width="1.7"/><path d="M11 15 H19" stroke="#111" stroke-width="2.4"/></svg>
<svg class="a" style="left:1099px;top:86px" width="37" height="38"><rect x="0.5" y="0.5" width="36" height="37" fill="#9b979b" stroke="#c9c5c9"/><polygon points="4,2 33,2 35,4 35,35 33,36 4,36 2,35 2,4" fill="#6b676b"/><polygon points="4,1.5 31,1.5 33,3.5 33,31 31,33 4,33 1.5,31 1.5,3.5" fill="#fff98c"/><path d="M19 19 L25 25" stroke="#111" stroke-width="2.6"/><circle cx="15" cy="15" r="6.8" fill="#dcdce0" stroke="#111" stroke-width="1.7"/><rect x="11.5" y="11.5" width="7" height="7" fill="#d8d8dc" stroke="#111" stroke-width="1.3"/></svg>
<svg class="a" style="left:1099px;top:124px" width="37" height="38"><rect x="0.5" y="0.5" width="36" height="37" fill="#9b979b" stroke="#c9c5c9"/><polygon points="4,2 33,2 35,4 35,35 33,36 4,36 2,35 2,4" fill="#6b676b"/><polygon points="4,1.5 31,1.5 33,3.5 33,31 31,33 4,33 1.5,31 1.5,3.5" fill="#fff98c"/><path d="M18 17 L24 23" stroke="#111" stroke-width="2.6"/><circle cx="14" cy="13" r="6.8" fill="#dcdce0" stroke="#111" stroke-width="1.7"/><path d="M7 26 Q14 24.5 17 26.5 Q19.5 29 16 31 L8 31" stroke="#111" stroke-width="1.5" fill="none"/><path d="M10.5 28.5 L7 31 L10.5 33Z" fill="#111"/></svg>
<svg class="a" style="left:1099px;top:163px" width="37" height="38"><rect x="0.5" y="0.5" width="36" height="37" fill="#9b979b" stroke="#c9c5c9"/><polygon points="4,2 33,2 35,4 35,35 33,36 4,36 2,35 2,4" fill="#6b676b"/><polygon points="4,1.5 31,1.5 33,3.5 33,31 31,33 4,33 1.5,31 1.5,3.5" fill="#fff98c"/><path d="M18 17 L24 23" stroke="#111" stroke-width="2.6"/><circle cx="14" cy="13" r="6.8" fill="#dcdce0" stroke="#111" stroke-width="1.7"/><text x="1" y="35" font-size="14" font-family="Liberation Sans" fill="#111">×1</text></svg>
<svg class="a" style="left:1099px;top:202px" width="37" height="38"><rect x="0.5" y="0.5" width="36" height="37" fill="#9b979b" stroke="#c9c5c9"/><polygon points="4,2 33,2 35,4 35,35 33,36 4,36 2,35 2,4" fill="#6b676b"/><polygon points="4,1.5 31,1.5 33,3.5 33,31 31,33 4,33 1.5,31 1.5,3.5" fill="#fff98c"/><path d="M18 17 L24 23" stroke="#111" stroke-width="2.6"/><circle cx="14" cy="13" r="6.8" fill="#dcdce0" stroke="#111" stroke-width="1.7"/><text x="1" y="35" font-size="14" font-family="Liberation Sans" fill="#111">×4</text></svg>
<svg class="a" style="left:1099px;top:240px" width="37" height="38"><rect x="0.5" y="0.5" width="36" height="37" fill="#9b979b" stroke="#c9c5c9"/><polygon points="4,2 33,2 35,4 35,35 33,36 4,36 2,35 2,4" fill="#6b676b"/><polygon points="4,1.5 31,1.5 33,3.5 33,31 31,33 4,33 1.5,31 1.5,3.5" fill="#fff98c"/><path d="M18 17 L24 23" stroke="#111" stroke-width="2.6"/><circle cx="14" cy="13" r="6.8" fill="#dcdce0" stroke="#111" stroke-width="1.7"/><text x="2" y="35" font-size="11" font-family="Liberation Mono" font-weight="bold" fill="#111" textLength="22">ALL</text></svg>
<svg class="a" style="left:1099px;top:278px" width="37" height="38"><rect x="0.5" y="0.5" width="36" height="37" fill="#9b979b" stroke="#c9c5c9"/><polygon points="4,2 33,2 35,4 35,35 33,36 4,36 2,35 2,4" fill="#6b676b"/><polygon points="4,1.5 31,1.5 33,3.5 33,31 31,33 4,33 1.5,31 1.5,3.5" fill="#fff98c"/><path d="M18 17 L24 23" stroke="#111" stroke-width="2.6"/><circle cx="14" cy="13" r="6.8" fill="#dcdce0" stroke="#111" stroke-width="1.7"/><ellipse cx="13" cy="29.5" rx="7" ry="3.5" fill="#1a3ad0" stroke="#111"/><path d="M6 29 Q9 26 14 27 L12 30Z" fill="#e01010"/><path d="M7 30 Q10 33 14 32 L12 30Z" fill="#10c010"/></svg>
<svg class="a" style="left:1099px;top:316px" width="41" height="12"><rect x="1" y="1" width="17" height="9" fill="#fff98c" stroke="#c9c5c9"/><rect x="20" y="1" width="17" height="9" fill="#fff98c" stroke="#c9c5c9"/><path d="M4 2 L9 7 L15 8" stroke="#111" stroke-width="2" fill="none"/><path d="M23 8 L29 3 L35 2" stroke="#111" stroke-width="2" fill="none"/></svg>
<div class="a" style="left:1136px;top:0;width:329px;height:326px;background:#2a1a2c"></div>
<div class="a" style="left:1138px;top:0;width:3px;height:326px;background:#a897ab"></div>
<div class="a" style="left:1141px;top:0;width:2px;height:326px;background:#6e5a72"></div>
<div class="a" style="left:1141px;top:0;width:322px;height:2px;background:#a897ab"></div>
<div class="a" style="left:1143px;top:2px;width:319px;height:5px;background:#5e4a60"></div>
<div class="a" style="left:1454px;top:9px;width:3px;height:310px;background:#a897ab"></div>
<div class="a" style="left:1457px;top:7px;width:5px;height:316px;background:#6a566e"></div>
<div class="a" style="left:1147px;top:316px;width:310px;height:3px;background:#a897ab"></div>
<div class="a" style="left:1147px;top:319px;width:312px;height:4px;background:#6a566e"></div>
<div class="a" style="left:1136px;top:0;width:2px;height:326px;background:#c8c4c8"></div>
<div class="a" style="left:1147px;top:9px;width:307px;height:307px;background:#1c1a1c"></div>
<svg class="a" style="left:1146px;top:8px" width="309" height="308">
<rect x="116.5" y="117.5" width="78" height="77" fill="none" stroke="#e8e000" stroke-width="1.3"/>
<rect x="26.5" y="259.5" width="20" height="19" fill="none" stroke="#22dd22" stroke-width="1.3"/>
<rect x="140.70000000000005" y="180.6" width="2.2" height="2.2" fill="#d8843a"/>
<rect x="155" y="185.5" width="2.2" height="2.2" fill="#d8843a"/>
<rect x="134.5999999999999" y="190" width="2.2" height="2.2" fill="#d8843a"/>
<rect x="126" y="198.5" width="2.2" height="2.2" fill="#d8843a"/>
<rect x="126" y="200.5" width="2.2" height="2.2" fill="#d8843a"/>
<rect x="217.5" y="193.7" width="2.2" height="2.2" fill="#d8843a"/>
<rect x="259.5999999999999" y="174.5" width="2.2" height="2.2" fill="#d8843a"/>
<rect x="265.5999999999999" y="155.6" width="2.2" height="2.2" fill="#d8843a"/>
<rect x="115" y="186" width="2.2" height="2.2" fill="#d8843a"/>
<rect x="42" y="234.7" width="2.2" height="2.2" fill="#3d6fa8"/>
<rect x="31" y="242" width="2.2" height="2.2" fill="#3d6fa8"/>
<rect x="53" y="242" width="2.2" height="2.2" fill="#3d6fa8"/>
<rect x="42" y="249" width="2.2" height="2.2" fill="#3d6fa8"/>
<rect x="77" y="250" width="2.2" height="2.2" fill="#3d6fa8"/>
<rect x="84" y="246.5" width="2.2" height="2.2" fill="#3d6fa8"/>
<rect x="91" y="250" width="2.2" height="2.2" fill="#3d6fa8"/>
<rect x="84" y="253.5" width="2.2" height="2.2" fill="#3d6fa8"/>
<rect x="30" y="266" width="2.2" height="2.2" fill="#3d6fa8"/>
<rect x="36" y="265" width="2.2" height="2.2" fill="#3d6fa8"/>
<rect x="41" y="267" width="2.2" height="2.2" fill="#3d6fa8"/>
<rect x="37" y="270" width="3" height="2" fill="#d06030"/>
</svg>
<div class="a" style="left:1463px;top:0;width:39px;height:326px;background:#9b979b"></div>
<svg class="a" style="left:1464px;top:9px" width="37" height="38"><rect x="0.5" y="0.5" width="36" height="37" fill="#9b979b" stroke="#c9c5c9"/><polygon points="4,2 33,2 35,4 35,35 33,36 4,36 2,35 2,4" fill="#6b676b"/><polygon points="4,1.5 31,1.5 33,3.5 33,31 31,33 4,33 1.5,31 1.5,3.5" fill="#fff98c"/><path d="M10 10 L26 26 M26 10 L10 26" stroke="#111" stroke-width="2.4"/></svg>
<svg class="a" style="left:1464px;top:48px" width="37" height="38"><rect x="0.5" y="0.5" width="36" height="37" fill="#9b979b" stroke="#c9c5c9"/><polygon points="4,2 33,2 35,4 35,35 33,36 4,36 2,35 2,4" fill="#6b676b"/><polygon points="4,1.5 31,1.5 33,3.5 33,31 31,33 4,33 1.5,31 1.5,3.5" fill="#fff98c"/><text x="18" y="26" text-anchor="middle" font-size="22" font-weight="bold" font-family="Liberation Sans" fill="#111">?</text></svg>
<svg class="a" style="left:1464px;top:86px" width="37" height="38"><rect x="0.5" y="0.5" width="36" height="37" fill="#9b979b" stroke="#c9c5c9"/><polygon points="4,2 33,2 35,4 35,35 33,36 4,36 2,35 2,4" fill="#6b676b"/><polygon points="4,1.5 31,1.5 33,3.5 33,31 31,33 4,33 1.5,31 1.5,3.5" fill="#fff98c"/><path d="M5 12 L15 17 L5 22 M19 12 L29 17 L19 22" stroke="#111" stroke-width="2.6" fill="none"/></svg>
<svg class="a" style="left:1464px;top:124px" width="37" height="38"><rect x="0.5" y="0.5" width="36" height="37" fill="#9b979b" stroke="#c9c5c9"/><polygon points="4,2 33,2 35,4 35,35 33,36 4,36 2,35 2,4" fill="#6b676b"/><polygon points="4,1.5 31,1.5 33,3.5 33,31 31,33 4,33 1.5,31 1.5,3.5" fill="#fff98c"/><path d="M15 12 L5 17 L15 22 M29 12 L19 17 L29 22" stroke="#111" stroke-width="2.6" fill="none"/></svg>
<svg class="a" style="left:1464px;top:163px" width="37" height="38"><rect x="0.5" y="0.5" width="36" height="37" fill="#9b979b" stroke="#c9c5c9"/><polygon points="4,2 33,2 35,4 35,35 33,36 4,36 2,35 2,4" fill="#6b676b"/><polygon points="4,1.5 31,1.5 33,3.5 33,31 31,33 4,33 1.5,31 1.5,3.5" fill="#7d7d7d"/></svg>
<svg class="a" style="left:1464px;top:202px" width="37" height="38"><rect x="0.5" y="0.5" width="36" height="37" fill="#9b979b" stroke="#c9c5c9"/><polygon points="4,2 33,2 35,4 35,35 33,36 4,36 2,35 2,4" fill="#6b676b"/><polygon points="4,1.5 31,1.5 33,3.5 33,31 31,33 4,33 1.5,31 1.5,3.5" fill="#7d7d7d"/></svg>
<svg class="a" style="left:1464px;top:240px" width="37" height="38"><rect x="0.5" y="0.5" width="36" height="37" fill="#9b979b" stroke="#c9c5c9"/><polygon points="4,2 33,2 35,4 35,35 33,36 4,36 2,35 2,4" fill="#6b676b"/><polygon points="4,1.5 31,1.5 33,3.5 33,31 31,33 4,33 1.5,31 1.5,3.5" fill="#fff98c"/><path d="M11 10 H26 V22 Q26 28 18 33 Q10 28 11 22Z" fill="#888" /><path d="M10 9 H24 V21 Q24 27 17 31 Q10 27 10 21Z" fill="#d01818" stroke="#aaa" stroke-width="1"/><path d="M17 9 V31 M10 19 H24" stroke="#ccc" stroke-width="1.5"/></svg>
<svg class="a" style="left:1464px;top:278px" width="37" height="38"><rect x="0.5" y="0.5" width="36" height="37" fill="#9b979b" stroke="#c9c5c9"/><polygon points="4,2 33,2 35,4 35,35 33,36 4,36 2,35 2,4" fill="#6b676b"/><polygon points="4,1.5 31,1.5 33,3.5 33,31 31,33 4,33 1.5,31 1.5,3.5" fill="#fff98c"/><rect x="8" y="9" width="18" height="15" fill="#f4f4f4" stroke="#111" stroke-width="1.2"/><rect x="8" y="9" width="18" height="3" fill="#1a2aa0"/><path d="M8 16 H26 M8 20 H26 M14 12 V24 M20 12 V24" stroke="#bbb" stroke-width="0.8"/><rect x="14" y="17" width="16" height="12" fill="#f4f4f4" stroke="#111" stroke-width="1.2"/><rect x="14" y="17" width="16" height="3" fill="#1a2aa0"/><path d="M14 24 H30 M20 20 V29 M25 20 V29" stroke="#bbb" stroke-width="0.8"/></svg>
<div class="a" style="left:1502px;top:0;width:149px;height:326px;background:linear-gradient(180deg,#2b2321 0px,#2e2a26 14px,#3b3a36 26px,#555350 38px,#6d6b68 52px,#797775 75px,#7b7977 326px)"></div>
<div class="a" style="left:1502px;top:16px;width:149px;height:24px;background:linear-gradient(90deg,rgba(40,60,70,0.0),rgba(30,60,60,0.35) 40%,rgba(40,50,40,0.2) 70%,rgba(0,0,0,0))"></div>
<div class="a" style="left:1099px;top:325px;width:552px;height:2px;background:#b8a6bb"></div>
<div class="a" style="left:1099px;top:327px;width:552px;height:4px;background:#8d7a92"></div>
<div class="a" style="left:1099px;top:331px;width:5px;height:552px;background:#9c89a0"></div>
<div class="a" style="left:1104px;top:331px;width:543px;height:542px;background:#1c1a1c"></div>
<div class="a" style="left:1647px;top:331px;width:4px;height:552px;background:#a08ca4"></div>
<div class="a" style="left:1099px;top:873px;width:821px;height:3px;background:#a592a9"></div>
<div class="a" style="left:1099px;top:876px;width:821px;height:2px;background:#4e3b52"></div>
<div class="a" style="left:1099px;top:878px;width:821px;height:3px;background:#8d7a92"></div>
<div class="a" style="left:1099px;top:881px;width:821px;height:2px;background:#2c1c2c"></div>
<div class="a" style="left:1104px;top:883px;width:49px;height:192px;background:linear-gradient(90deg,#3a3038 0px,#3a3038 2px,#6e6c6e 4px,#7c7a7c 30%,#7c7a7c 85%,#6a686a)"></div>
<svg class="a" style="left:1104px;top:883px" width="49" height="80"><g fill="#f5f000" stroke="#111" stroke-width="1.6"><circle cx="24" cy="14" r="9"/><circle cx="24" cy="34" r="9"/><circle cx="13" cy="24" r="8.5"/><circle cx="35" cy="24" r="8.5"/></g><g fill="#f5f000"><circle cx="24" cy="14" r="8"/><circle cx="24" cy="34" r="8"/><circle cx="13" cy="24" r="7.5"/><circle cx="35" cy="24" r="7.5"/><rect x="14" y="14" width="20" height="20"/></g><path d="M11.8 16.2 L23.5 26.2 L24 21.2 L36 32" stroke="#111" stroke-width="2" fill="none"/><text x="24.5" y="56" text-anchor="middle" font-size="12" font-weight="bold" font-family="Liberation Sans" fill="#f2f2f2">SIGNAL</text><rect x="15.5" y="63.5" width="17" height="13" rx="2" fill="#4a4a4a" stroke="#bbb"/><rect x="18" y="66" width="12" height="8" fill="#1e9a2a"/><path d="M18 70 H30 M24 66 V74" stroke="#0a5a10" stroke-width="0.8"/></svg>
<div class="a" style="left:1153px;top:883px;width:762px;height:192px;background:#fefdfe;border-top:1px solid #c8c8c8;border-left:1px solid #c8c8c8;box-sizing:border-box"></div>
<div class="a" style="left:1099px;top:1075px;width:821px;height:5px;background:#2e1e30"></div><div class="a" style="left:1099px;top:1075px;width:821px;height:2px;background:#8f7c94"></div>
<div class="a" style="left:1915px;top:883px;width:5px;height:197px;background:#4a3850"></div>
<div class="a" style="left:1532px;top:931px;font-size:23px;letter-spacing:0.55px;color:#c9c9cb;line-height:28px;white-space:nowrap">Activate Windows</div>
<div class="a" style="left:1532px;top:962px;font-size:15.5px;letter-spacing:0.95px;color:#c9c9cb;line-height:20px;white-space:nowrap">Go to PC settings to activate Windows.</div>
<svg class="a" style="left:1104px;top:331px" width="543" height="542">
<g transform="translate(-1104,-331)" fill="none" stroke="#f4f4f4" stroke-width="1.5" stroke-linejoin="round">
<polyline points="1104.2,380.4 1107.4,379.7 1110.2,378.6 1111.9,376.7 1116.4,376.0 1119.9,374.7 1122.6,374.6 1126.3,374.9 1128.9,373.9 1131.1,377.7 1133.7,378.9 1135.5,381.3 1135.9,385.3 1135.4,390.7 1131.9,391.5 1129.4,394.7 1130.7,397.1 1133.8,398.8 1135.8,401.5 1139.2,403.8 1142.9,404.2 1145.2,405.6 1148.0,407.0 1151.5,409.6 1154.0,409.7 1157.6,409.1 1161.5,409.4 1163.6,409.4 1167.4,408.6 1170.9,408.5 1173.6,410.8 1175.4,411.5 1179.1,411.9 1181.6,411.7 1185.0,414.1 1188.1,415.0 1192.4,416.7 1194.4,416.9 1197.7,418.9 1200.0,420.2 1204.2,421.6 1206.3,422.7 1209.8,422.5 1214.2,424.5 1213.7,420.6 1214.1,415.7 1217.0,413.4 1219.8,411.4 1223.1,415.1 1224.3,415.5 1227.9,418.6 1228.8,420.6 1231.1,424.3 1232.8,426.2 1234.0,429.6 1236.6,430.4 1240.6,431.3 1243.0,434.3 1245.4,435.5 1247.1,436.4 1249.8,438.6 1252.6,439.9 1256.5,442.5 1259.9,443.5 1262.5,445.7 1266.0,446.6 1268.9,447.2 1272.0,449.5 1276.1,449.6 1278.4,449.9 1280.8,450.6 1285.2,452.5 1287.7,453.1 1291.7,453.8 1294.7,454.7 1297.4,455.4 1300.5,455.8 1304.6,456.9 1307.0,458.2 1310.9,456.9 1313.0,456.2 1316.7,455.8 1320.3,455.4 1322.6,457.9 1323.9,460.2 1326.5,463.0 1327.7,465.6 1331.3,467.3 1334.1,469.8 1335.9,471.1 1337.9,473.6 1341.9,474.9 1344.0,477.2 1346.7,478.2 1349.4,480.8 1352.2,481.6 1355.2,483.3 1358.2,484.2 1360.1,484.3 1363.9,486.2 1366.5,487.3 1370.3,486.0 1373.1,486.2 1375.5,485.8 1379.1,485.8 1381.9,485.3 1385.5,485.8 1389.3,484.4 1392.1,483.2 1395.1,480.5 1399.4,481.8 1396.9,485.6 1395.2,487.2 1393.5,490.3 1395.1,494.2 1396.9,498.8 1399.1,501.4 1398.2,505.6 1396.6,508.5 1396.2,513.1 1400.2,513.5 1402.9,512.1 1406.7,511.1 1402.8,514.1 1401.1,515.4 1398.6,518.7 1395.6,519.9 1392.8,521.6 1393.5,525.0 1392.8,529.2 1391.5,531.3 1391.6,535.0 1392.3,537.3 1395.1,540.3 1395.6,543.0 1397.4,545.8 1400.0,547.8 1402.7,551.4 1403.4,553.5 1405.9,556.8 1404.2,558.0 1400.6,560.4 1398.8,561.4 1395.0,562.6 1392.0,563.6 1389.1,563.5 1386.1,564.6 1382.5,564.4 1379.0,564.5 1376.2,564.0 1373.6,564.1 1369.2,563.3 1366.6,563.8 1364.0,562.5 1359.1,562.4 1356.5,561.4 1353.7,560.9 1350.0,560.7 1346.8,559.0 1344.6,557.9 1340.6,558.2 1337.2,557.4 1335.4,555.9 1331.6,555.9 1329.7,554.2 1326.0,554.3 1323.0,553.3 1319.4,553.2 1317.5,552.2 1313.4,553.6 1311.4,553.3 1307.0,553.4 1305.7,553.9 1302.9,554.5 1300.9,557.2 1298.3,560.8 1297.1,562.3 1295.1,566.8 1293.6,569.2 1292.8,571.4 1291.5,574.4 1288.8,578.3 1287.0,581.0 1286.1,585.4 1285.6,587.8 1283.6,591.5 1282.8,595.3 1282.3,598.5 1277.8,600.9 1275.1,602.6 1272.9,604.9 1270.1,606.2 1266.5,606.8 1263.4,607.8 1260.7,607.3 1256.8,608.2 1254.2,608.3 1250.7,609.6 1246.2,610.1 1242.7,609.6 1240.2,610.2 1237.8,611.5 1233.9,613.0 1230.5,613.7 1227.6,613.5 1226.4,615.4 1222.2,615.2 1220.6,617.1 1217.5,617.0 1214.2,618.2 1210.6,619.5 1208.4,620.9 1205.1,621.8 1202.9,624.0 1200.0,624.9 1197.2,626.4 1193.8,627.8 1191.1,628.8 1187.0,627.4 1184.3,626.7 1182.5,626.7 1179.3,625.1 1175.9,625.9 1173.2,624.3 1169.9,623.0 1166.8,621.2 1164.6,619.6 1162.9,617.3 1159.2,615.6 1159.8,612.2 1160.7,609.0 1161.2,606.4 1161.3,603.2 1161.4,599.5 1160.5,596.8 1159.4,593.1 1159.2,589.9 1157.9,586.4 1154.8,583.6 1152.8,581.1 1150.9,580.1 1148.8,576.4 1146.4,573.6 1144.4,571.7 1140.9,568.2 1139.3,566.8 1136.1,564.4 1133.6,562.1 1128.8,562.0 1126.3,559.2 1123.4,559.4 1120.8,556.1 1117.4,553.5 1116.3,552.2 1113.8,549.3 1109.9,547.2 1108.1,543.9 1105.7,541.2 1104.0,538.0"/>
<polyline points="1172.3,415.2 1174.8,418.6 1178.1,419.4 1181.5,421.2 1183.9,422.5 1187.0,424.7 1191.5,426.5 1194.4,427.1 1195.9,428.9 1199.8,430.3 1202.7,431.7 1206.4,433.5 1208.7,433.9 1212.2,435.4 1213.5,437.4 1216.0,440.1 1219.9,441.1 1221.2,442.5 1224.0,444.4 1226.9,447.1 1229.5,446.2 1233.4,446.2 1235.5,446.6 1238.8,446.3 1241.9,446.7 1245.5,447.1 1249.2,446.4 1252.5,445.4 1255.6,444.4"/>
<polyline points="1369.9,553.6 1373.4,552.8 1376.7,551.4 1378.9,550.6 1382.3,548.3 1384.8,547.4 1387.3,545.6 1389.5,541.9 1392.0,540.0"/>
<polyline points="1304.5,558.1 1306.4,557.7 1309.8,558.7 1314.4,560.3 1317.2,559.5 1320.1,560.3 1323.2,560.1 1326.9,562.1 1330.4,561.3 1333.1,561.8 1336.4,562.7 1339.8,563.7 1341.3,563.3 1345.7,563.9 1347.9,564.3 1351.5,565.6 1354.1,566.0 1357.2,564.9 1360.6,565.9 1362.3,567.4 1365.4,567.1 1369.3,568.2 1372.3,567.5 1375.2,568.0 1378.9,568.7 1382.3,569.0 1385.0,570.0"/>
<polyline points="1299.7,564.5 1299.3,568.6 1297.4,571.2 1295.0,573.4 1294.2,577.0 1291.2,579.4 1289.5,583.4 1289.2,585.5 1287.3,588.7 1285.3,592.7 1282.7,595.0 1279.8,596.1 1277.5,599.7 1275.0,602.0"/>
<polyline points="1133.1,626.1 1136.4,626.3 1139.4,627.8 1142.8,629.3 1145.7,630.6 1149.4,631.4 1152.2,631.8 1155.0,632.9 1157.7,633.4 1161.3,634.1 1163.6,634.2 1166.2,635.6 1170.1,637.2 1169.1,640.2 1168.2,644.0 1164.7,643.8 1161.7,645.1 1159.0,645.8 1155.5,645.9 1152.5,645.7 1148.5,645.7 1152.7,645.6 1155.9,646.4 1157.8,645.8 1160.8,646.4 1164.3,648.1 1167.7,647.9 1169.8,647.3 1172.9,649.7 1175.6,650.9 1178.5,652.2 1180.1,653.8 1183.2,656.5 1185.0,657.6 1189.4,657.1 1191.5,657.9 1196.2,658.6 1199.4,658.0 1202.2,658.4 1206.4,658.2 1208.6,658.9 1212.9,658.0 1214.4,657.7 1218.4,658.5 1220.8,657.6 1224.7,658.3 1227.9,658.3 1229.9,657.8 1234.4,658.5 1236.6,658.2 1240.3,658.2 1243.0,656.0 1247.5,653.8 1249.7,651.4 1252.4,652.9 1254.9,655.6 1257.4,657.5 1261.1,659.3 1264.4,658.8 1267.7,659.0 1270.3,658.8 1272.5,656.9 1275.5,656.9 1281.3,654.7 1283.6,658.6 1284.2,661.4 1286.8,664.8 1288.1,662.4 1290.6,659.7 1292.9,657.4 1295.7,653.0 1297.5,651.4 1300.1,649.3 1303.9,648.7 1307.8,648.8 1310.4,647.0 1313.9,647.2 1317.7,646.4 1320.0,645.4 1324.3,646.7 1326.0,647.5 1329.6,648.9 1332.5,649.2 1335.8,650.2 1340.7,650.9 1342.8,652.2 1345.6,651.7 1350.1,651.8 1353.3,653.1 1355.2,653.7 1359.2,654.6 1362.5,652.7 1365.1,653.1 1368.7,650.8 1371.3,649.2 1376.0,648.9 1378.4,646.7 1381.4,647.0 1384.7,645.6 1388.7,644.7 1388.7,640.1 1388.1,638.0 1389.2,634.7 1392.9,635.7 1395.0,636.9 1398.6,637.7 1400.4,638.5 1401.2,635.7 1402.7,631.2 1402.0,628.2 1402.5,625.0 1403.2,621.6 1402.7,619.1 1402.9,615.8 1407.1,619.2 1408.5,620.1 1410.4,625.3 1410.8,627.3 1411.0,632.3 1415.8,631.1 1417.9,632.2 1421.5,633.3 1424.3,631.5 1426.4,629.2 1430.5,627.7 1431.5,624.8 1435.1,623.5 1437.8,622.4 1441.4,621.9 1444.1,619.9 1447.4,618.6 1451.5,617.8 1454.4,618.9 1456.9,619.0 1460.9,618.5 1464.6,619.0 1466.9,618.5 1470.2,618.3 1473.4,621.5 1475.9,620.4 1479.1,619.3 1481.2,616.6 1484.4,615.4 1487.9,614.7 1489.9,612.4 1494.1,611.5 1496.4,611.9 1499.7,610.5 1503.8,611.2 1506.6,613.0 1509.3,613.0 1512.6,611.5 1514.7,609.4 1517.0,606.8 1520.1,605.0 1524.3,604.3 1526.0,604.4 1529.9,602.6 1533.1,602.4 1535.3,601.5 1538.0,600.0 1542.2,599.2 1545.3,597.7 1546.9,596.4 1551.1,596.2 1552.8,594.2 1557.3,594.0 1560.0,591.2 1562.1,589.3 1564.9,588.2 1567.9,587.3 1571.7,586.9 1573.3,587.8 1576.6,586.5 1580.5,587.3 1584.5,587.2 1586.2,586.9 1590.8,585.8 1593.8,585.8 1596.2,585.2 1600.3,585.9 1603.7,585.6 1605.6,584.7 1609.1,585.6 1612.2,583.6 1615.7,583.1 1619.1,583.6 1622.8,582.3 1625.1,582.4 1629.3,581.9 1632.1,581.7 1634.4,579.6 1638.0,579.1 1641.7,578.1 1644.3,576.9 1647.0,576.0"/>
<polyline points="1201.5,709.6 1203.3,706.6 1205.9,705.4 1209.7,703.6 1212.2,702.8 1215.7,700.4 1218.3,699.3 1220.1,698.4 1224.3,696.8 1225.8,696.0 1229.4,693.9 1232.6,691.3 1234.6,689.5 1236.7,687.1 1240.4,685.8 1243.6,684.5 1245.6,683.9 1249.7,684.3 1252.5,683.0 1254.1,682.1 1257.3,680.6 1260.8,680.3 1263.0,679.6 1267.4,679.3 1269.6,676.7 1273.1,675.6 1275.6,674.5 1279.4,674.2 1281.4,672.6 1285.4,673.9 1289.0,672.5 1293.0,673.8 1291.7,668.0 1290.0,664.9 1287.2,662.7 1283.4,659.2 1281.5,654.8"/>
<polyline points="1201.8,708.9 1203.6,711.6 1206.5,712.7 1208.6,714.9 1211.8,714.1 1215.9,714.0 1218.0,713.0 1222.3,713.6 1224.4,713.8 1227.7,712.0 1230.8,712.1 1235.0,712.5 1236.8,713.9 1239.3,715.4 1242.2,716.7 1244.4,719.0 1247.1,720.8 1250.1,722.2 1253.8,722.5 1257.3,723.9 1259.4,723.4 1263.6,723.6 1265.9,724.6 1269.4,720.3 1272.0,721.5 1275.4,720.1 1279.0,720.7 1282.1,721.3 1282.2,724.6 1283.5,726.7 1284.4,730.0 1284.1,733.3 1284.1,735.6 1283.3,738.5 1283.6,743.0 1283.4,744.8 1282.1,748.6 1280.6,751.2 1281.4,755.5 1279.3,758.5 1279.3,760.8 1276.6,762.5 1273.3,764.1 1271.4,767.1 1268.9,769.0 1271.6,769.9 1275.4,771.3 1278.4,773.2 1281.4,774.3 1284.2,775.2 1289.1,776.7 1291.2,778.1 1295.9,778.8 1298.8,779.9 1302.8,780.4 1305.8,780.1 1309.7,781.9 1312.8,782.5 1315.4,780.7 1318.4,779.0 1319.5,777.9 1323.9,775.0 1324.8,773.7 1327.5,771.7 1330.0,769.4 1332.4,767.7 1335.6,766.2 1338.3,763.1 1341.9,762.5 1344.1,759.3 1346.2,757.8 1348.8,755.1 1351.9,755.6 1355.3,754.9 1358.3,753.8 1361.7,753.2 1364.5,751.4 1367.3,751.0 1370.7,751.3 1372.9,750.5 1375.7,750.8 1379.3,751.9 1381.4,751.7 1385.6,751.6 1387.3,752.2 1389.8,749.1 1391.6,746.6 1393.4,745.1 1395.3,742.1 1399.3,742.5 1403.1,740.1 1406.5,738.3 1408.4,736.9 1409.9,735.4 1412.8,732.6 1414.5,729.9 1417.8,730.0 1420.1,729.0 1422.9,729.2 1426.6,728.6 1428.6,729.5 1431.2,728.8 1434.2,731.1 1437.5,732.2 1440.4,734.8 1443.1,735.5 1447.4,734.3 1450.7,733.8 1453.8,733.6 1457.5,734.9 1460.9,733.2 1464.2,734.1 1467.5,733.7 1470.7,734.4 1473.8,735.0 1477.6,734.5 1480.8,734.6 1483.1,731.2 1482.4,727.9 1484.0,724.8"/>
<polyline points="1370.8,654.1 1370.4,657.6 1371.8,661.4 1371.4,665.4 1372.5,668.4 1373.5,672.0 1373.5,674.2 1374.6,677.6 1377.3,681.0 1378.3,684.0 1380.9,687.1 1382.0,690.3 1384.0,692.8 1385.5,695.3 1387.6,698.8 1389.6,700.1 1392.2,702.7 1393.6,704.6 1396.8,706.0 1397.8,709.5 1401.8,710.0 1402.9,712.8 1405.9,714.6 1408.0,716.0 1410.8,717.5 1414.3,719.6 1417.9,719.6 1420.7,718.9 1423.2,717.6 1426.7,717.2 1428.9,716.1 1432.0,714.3 1435.6,713.0 1437.2,711.2 1440.9,708.3 1444.3,710.9 1447.7,711.6 1450.4,710.1 1455.0,708.3 1457.0,707.0 1460.6,705.2 1464.1,704.4 1466.8,705.2 1471.4,704.0 1474.6,704.5 1478.0,704.9 1482.0,703.7 1484.3,705.2 1487.1,706.8 1490.0,707.0 1493.5,708.0 1496.2,708.5 1501.1,709.3 1503.0,708.4 1505.9,707.6 1509.4,708.9 1512.8,708.3 1515.5,708.9 1520.3,710.8 1523.2,711.8 1526.1,711.6 1528.2,712.2 1531.3,712.7 1535.7,713.9 1537.7,714.1 1542.4,715.8 1545.4,716.2 1549.0,716.5 1551.3,717.1 1554.2,714.6 1557.3,713.7 1560.1,711.4 1563.4,710.4 1567.8,709.0 1570.2,706.9 1572.4,703.7 1574.6,701.2 1577.6,699.6 1579.2,695.6 1579.3,692.0 1581.4,689.4 1581.6,686.4 1583.2,683.2 1585.3,680.9 1586.2,678.0 1587.7,675.2 1589.1,671.4 1591.8,668.6 1593.0,665.7 1596.3,663.8 1598.4,661.4 1602.2,660.5 1604.7,659.4 1608.2,657.4 1611.5,658.8 1614.0,659.0 1617.5,659.9 1619.9,660.0 1623.1,661.3 1626.3,661.2 1628.9,662.7 1632.0,661.9 1636.8,661.7 1639.6,662.6"/>
<polyline points="1370.0,688.1 1371.0,690.7 1373.1,693.5 1376.3,695.5 1377.2,699.3 1379.5,700.6 1380.7,703.7 1383.7,706.6 1385.1,709.3 1388.1,711.3 1391.0,714.9 1393.6,715.5 1397.1,717.2 1399.8,716.5 1402.6,718.5 1405.3,719.5 1408.3,720.3 1411.5,721.0"/>
<polyline points="1484.2,720.3 1488.0,719.6 1490.8,718.8 1493.1,717.8 1497.0,716.0 1500.5,715.5 1502.8,717.6 1506.1,719.6 1508.5,721.5 1511.3,722.3 1515.1,723.5 1517.5,726.2 1519.2,727.4 1523.0,728.5 1526.1,730.6 1528.0,731.0 1532.0,732.4 1535.7,733.5 1538.5,733.2 1540.9,735.7 1543.6,738.1 1544.2,740.7 1546.3,743.2 1548.2,746.1 1550.1,748.9 1551.5,750.7 1554.4,752.8 1555.9,755.4 1559.0,756.5 1561.2,757.9 1566.2,758.1 1568.5,759.1 1571.8,758.8 1575.9,759.2 1579.1,758.2 1582.2,758.3 1584.3,759.9 1587.2,762.4 1590.9,765.6 1592.7,766.4 1595.2,769.2 1598.6,770.0 1601.7,771.9 1604.0,774.5 1607.0,775.6 1611.2,777.4 1614.4,778.7 1617.6,779.3 1620.5,781.1 1622.0,781.9 1626.8,783.8 1629.4,785.1 1631.1,784.9 1634.9,786.7 1638.7,786.1 1641.9,787.6 1643.6,787.5 1647.0,789.0"/>
<polyline points="1579.9,618.5 1581.6,621.2 1584.1,624.5 1584.7,628.1 1586.2,630.5 1587.6,633.2 1590.9,636.9 1593.4,637.6 1597.0,637.9 1599.8,637.8 1602.6,638.3 1606.4,640.1 1610.0,642.7 1612.4,644.7 1616.0,646.5 1619.2,648.5 1620.4,649.4 1624.5,651.8 1626.0,653.6 1628.2,655.5 1633.3,656.8 1635.3,658.1 1639.6,660.0"/>
<polyline points="1580.6,618.7 1582.8,618.4 1585.9,619.3 1589.5,619.5 1594.1,620.7 1596.7,620.8 1599.4,621.4 1604.1,621.0 1607.2,619.6 1610.5,618.7 1613.5,618.6 1616.7,617.4 1618.2,615.6 1621.8,614.7 1624.3,611.2 1626.2,609.7 1628.4,607.5 1632.0,607.1 1634.6,606.5 1638.8,606.2 1641.5,606.1 1643.2,605.4 1647.0,604.0"/>
<polyline points="1510.3,364.5 1512.4,368.8 1513.2,371.6 1514.4,374.9 1515.4,376.8 1517.3,378.8 1520.8,382.8 1522.4,384.2 1524.9,387.2 1528.0,388.4 1526.7,387.3 1523.2,383.9 1521.5,381.3 1519.7,377.6 1517.6,375.2 1516.0,372.0 1513.8,368.5 1511.0,365.0"/>
<polyline points="1562.8,437.9 1563.5,435.5 1564.2,431.7 1565.5,428.6 1565.4,424.9 1567.4,421.8 1570.3,420.0 1571.6,417.1 1573.8,415.3 1577.1,411.9 1575.9,415.2 1574.1,416.5 1572.7,418.9 1570.1,422.3 1568.0,426.0 1566.9,429.0 1564.3,432.6 1563.1,435.2 1562.0,438.0"/>
<polyline points="1145.4,341.7 1146.2,344.4 1149.2,347.6 1149.9,350.1 1151.3,353.6 1151.2,357.3 1150.6,361.7 1149.9,365.2 1153.6,361.9 1152.2,357.4 1151.4,353.8 1151.2,350.6 1149.3,347.8 1147.5,344.9 1145.0,342.0"/>
<polyline points="1500.1,520.2 1498.5,522.6 1496.0,527.1 1494.7,529.3 1498.7,531.7 1501.7,532.3 1503.7,534.2 1507.0,535.3 1511.0,535.8 1512.9,537.7 1517.4,538.9 1520.0,540.0"/>
<polyline points="1525.9,494.5 1528.7,495.9 1531.8,496.6 1535.0,498.0"/>
<polyline points="1556.2,717.1 1560.3,716.1 1563.8,713.6 1567.3,712.1 1568.6,708.0 1570.8,704.7 1571.4,700.9 1570.2,699.2 1569.1,696.3 1567.6,693.4 1569.4,692.4 1572.6,690.1 1575.5,687.7 1578.8,687.9 1583.3,685.4 1584.9,683.4 1586.8,680.4 1588.1,678.4 1590.0,674.0 1590.2,669.7 1593.3,667.9 1596.2,666.3 1597.6,666.0 1601.6,664.8 1604.8,663.0 1608.3,663.5 1611.4,665.1 1616.1,666.4 1618.5,668.2 1622.2,669.7 1623.6,671.4 1627.5,673.1 1628.6,675.0 1626.0,675.6 1621.5,677.1 1618.5,678.1 1615.5,683.4 1612.7,684.3 1608.7,686.0 1606.5,683.5 1603.6,680.9 1601.3,677.4 1597.5,676.2 1594.9,676.0 1591.1,678.3 1589.3,682.0 1586.7,684.4 1585.7,688.9 1586.4,692.0 1587.5,697.1 1586.0,698.4 1585.2,702.3 1582.0,703.5 1581.3,706.5 1579.1,709.6 1577.0,712.0 1574.3,713.9 1572.3,716.9 1570.3,719.0 1566.5,720.5 1561.6,721.5 1558.9,720.5 1556.7,717.0"/>
<polyline points="1595.3,668.4 1599.0,669.9 1600.2,671.1 1602.7,672.5 1606.9,671.1 1611.4,670.4 1613.3,671.7 1615.7,673.1 1618.8,674.8 1616.3,677.7 1614.2,680.3 1610.5,680.2 1606.7,677.7 1604.1,676.4 1601.4,674.6 1598.2,673.0"/>
<polyline points="1567.1,698.5 1571.4,697.4 1575.5,696.7 1577.3,698.0 1579.6,701.3 1577.2,704.2 1573.9,706.6 1569.6,704.1"/>
<polyline points="1560.0,712.7 1562.2,713.9 1564.6,716.2 1567.6,717.0 1570.9,716.5 1574.9,714.6 1577.1,719.9 1573.5,721.7 1569.6,722.2"/>
<polyline points="1612.0,650.5 1615.0,649.2 1616.4,650.2 1620.8,651.0 1622.8,650.6 1625.8,651.1 1628.6,652.7 1631.3,653.4 1634.7,655.0 1637.6,657.7 1640.9,661.3"/>
<polyline points="1619.6,642.3 1622.8,642.7 1625.7,644.2 1629.1,646.5 1633.0,648.2 1637.0,649.6"/>
<polyline points="1479.1,722.8 1481.5,724.2 1485.6,724.1 1487.8,724.9 1491.3,725.5 1495.2,726.3 1497.2,725.6 1500.7,725.0 1503.6,724.6 1507.2,725.7 1510.7,725.0 1513.3,725.8 1517.0,726.0 1520.4,727.4"/>
<polyline points="1494.5,731.3 1497.4,731.0 1502.0,731.1 1504.5,730.2 1508.5,730.5 1511.4,730.2 1515.0,730.2 1519.0,730.0 1521.5,730.6 1524.8,730.3 1527.2,731.8 1530.1,731.6 1532.9,729.7 1535.8,727.6 1537.9,727.3 1541.1,724.8"/>
<polyline points="1514.4,713.8 1519.1,715.9 1521.6,718.4 1526.4,719.1 1529.4,719.4 1533.4,719.8 1536.6,719.9 1538.5,720.2 1542.8,720.3 1544.9,722.5 1548.9,722.2"/>
<polyline points="1381.1,655.1 1382.8,656.5 1387.7,657.9 1390.5,658.6 1393.6,660.8 1391.6,655.8 1389.2,653.9 1388.5,650.4 1385.8,651.9 1385.0,655.6 1383.0,658.7"/>
<polyline points="1385.5,631.0 1387.8,634.6 1389.4,636.5 1390.7,639.1 1394.6,640.2 1398.5,642.7 1400.8,638.6 1402.3,637.2 1403.4,634.8 1400.6,632.0 1395.9,631.5"/>
<polyline points="1401.3,615.7 1402.8,619.5 1405.2,623.1 1407.0,625.8 1407.5,629.3 1407.0,633.3 1408.4,635.5 1409.6,639.2 1403.7,636.7"/>
<polyline points="1281.8,647.9 1284.3,647.6 1287.8,647.7 1290.9,649.4 1294.3,648.7 1297.4,649.8 1300.3,650.8 1303.7,651.9 1307.2,652.8 1309.6,654.2 1312.3,656.7 1315.9,660.9 1311.6,660.4 1309.0,662.4 1304.4,662.2 1302.2,660.2 1299.1,659.0 1296.4,656.8 1293.8,655.3 1290.9,654.8 1286.7,652.2"/>
<polyline points="1312.9,646.6 1316.5,646.3 1320.2,646.0 1323.3,646.2 1325.9,647.8 1327.9,648.4 1330.5,651.4 1332.5,651.8 1334.7,654.7 1337.5,656.8 1337.8,659.1 1334.8,662.1 1331.5,663.7 1328.2,664.9 1324.1,665.7 1321.2,668.2 1317.9,664.7 1317.4,662.6 1315.2,660.0"/>
<polyline points="1333.8,652.7 1335.9,653.5 1339.3,652.9 1343.5,654.7 1346.0,654.6 1350.2,656.2 1353.1,659.2 1356.0,660.8 1359.1,663.5 1359.7,664.6 1361.7,667.2 1365.2,670.5 1367.7,673.0 1369.6,676.4 1371.6,677.7 1375.5,680.9 1377.3,685.5 1378.7,688.5"/>
<polyline points="1339.0,668.0 1342.4,669.6 1344.9,670.9 1349.7,673.0 1350.6,675.8 1355.0,678.4 1356.7,680.7 1359.3,683.3"/>
<polyline points="1346.5,657.6 1348.9,659.9 1352.2,661.4 1354.5,663.0 1355.3,665.2 1357.1,667.2 1359.3,670.4"/>
<polyline points="1225.3,662.1 1228.3,663.5 1230.8,662.4 1233.6,663.8 1237.8,663.6 1240.0,665.2"/>
<polyline points="1245.4,719.0 1248.7,721.4 1252.2,722.3 1255.0,722.6 1257.7,724.7 1260.8,724.1 1265.9,725.2 1268.6,725.2 1273.1,723.8 1276.2,722.0 1278.9,725.6 1279.1,728.0 1281.7,729.7 1284.1,735.2"/>
<polyline points="1327.7,660.0 1326.7,663.0 1323.9,663.6 1320.7,660.0 1323.6,656.8 1326.2,657.1 1327.9,660.0"/>
<polyline points="1346.7,672.0 1346.0,673.6 1343.9,673.5 1343.4,672.0 1344.2,669.3 1346.2,670.5 1347.3,672.0"/>
<polyline points="1362.1,683.0 1360.9,685.0 1358.7,684.3 1358.1,683.0 1359.1,681.8 1360.8,680.8 1361.8,683.0"/>
<polyline points="1344.0,680.0 1341.8,682.8 1338.2,683.5 1335.0,680.0 1338.1,676.1 1341.9,677.5 1344.1,680.0"/>
<polyline points="1352.1,690.0 1350.8,691.8 1348.5,692.0 1347.9,690.0 1348.7,688.0 1351.1,687.9 1351.9,690.0"/>
<polyline points="1613.1,680.0 1611.5,681.8 1608.7,682.3 1608.3,680.0 1608.7,677.2 1611.7,677.1 1613.3,680.0"/>
<polyline points="1621.7,690.0 1621.4,691.5 1619.0,691.4 1617.0,690.0 1619.1,687.9 1621.3,688.7 1622.4,690.0"/>
<polyline points="1603.0,700.0 1601.8,703.2 1598.7,701.7 1597.1,700.0 1598.4,697.5 1601.7,696.8 1603.5,700.0"/>
<polyline points="1575.0,725.0 1573.0,727.8 1570.8,727.2 1570.0,725.0 1570.8,722.4 1573.6,722.8 1574.7,725.0"/>
</g>
<g transform="translate(-1104,-331)" fill="#f4f4f4">
<rect x="1270" y="480" width="2.5" height="2.5"/>
<rect x="1255" y="425" width="2.5" height="2.5"/>
<rect x="1317" y="368" width="2.5" height="2.5"/>
<rect x="1232" y="414" width="2.5" height="2.5"/>
<rect x="1157" y="471" width="2.5" height="2.5"/>
<rect x="1183" y="473" width="2.5" height="2.5"/>
<rect x="1223" y="519" width="2.5" height="2.5"/>
<rect x="1198" y="572" width="2.5" height="2.5"/>
<rect x="1243" y="522" width="2.5" height="2.5"/>
<rect x="1294" y="510" width="2.5" height="2.5"/>
<rect x="1292" y="537" width="2.5" height="2.5"/>
<rect x="1320" y="530" width="2.5" height="2.5"/>
<rect x="1300" y="535" width="2.5" height="2.5"/>
<rect x="1348" y="520" width="2.5" height="2.5"/>
<rect x="1357" y="509" width="2.5" height="2.5"/>
<rect x="1377" y="516" width="2.5" height="2.5"/>
<rect x="1384" y="520" width="2.5" height="2.5"/>
<rect x="1295" y="562" width="2.5" height="2.5"/>
<rect x="1430" y="334" width="2.5" height="2.5"/>
<rect x="1390" y="375" width="2.5" height="2.5"/>
<rect x="1414" y="412" width="2.5" height="2.5"/>
<rect x="1451" y="380" width="2.5" height="2.5"/>
<rect x="1480" y="439" width="2.5" height="2.5"/>
<rect x="1505" y="475" width="2.5" height="2.5"/>
<rect x="1560" y="480" width="2.5" height="2.5"/>
<rect x="1577" y="489" width="2.5" height="2.5"/>
<rect x="1600" y="498" width="2.5" height="2.5"/>
<rect x="1620" y="470" width="2.5" height="2.5"/>
<rect x="1639" y="484" width="2.5" height="2.5"/>
<rect x="1628" y="436" width="2.5" height="2.5"/>
<rect x="1645" y="430" width="2.5" height="2.5"/>
<rect x="1485" y="520" width="2.5" height="2.5"/>
<rect x="1563" y="533" width="2.5" height="2.5"/>
<rect x="1530" y="385" width="2.5" height="2.5"/>
<rect x="1380" y="330" width="2.5" height="2.5"/>
<rect x="1175" y="456" width="2.5" height="2.5"/>
<rect x="1130" y="420" width="2.5" height="2.5"/>
<rect x="1142" y="555" width="2.5" height="2.5"/>
<rect x="1210" y="540" width="2.5" height="2.5"/>
<rect x="1260" y="530" width="2.5" height="2.5"/>
<rect x="1420" y="600" width="2.5" height="2.5"/>
</g>
<rect x="136.5" y="136.5" width="270" height="270" fill="none" stroke="#e8e000" stroke-width="1.2"/>
<rect x="226" y="369" width="2" height="2" fill="#c07030"/>
<rect x="276" y="381" width="2" height="2" fill="#c07030"/>
<rect x="211" y="406" width="2" height="2" fill="#c07030"/>
<rect x="495" y="410" width="2" height="2" fill="#c07030"/>
<rect x="174" y="422" width="2" height="2" fill="#c07030"/>
</svg>
<div class="a" style="left:1651px;top:0;width:269px;height:873px;background:#8d7a92"></div>
<div class="a" style="left:1651px;top:0;width:2px;height:873px;background:#a796ab"></div>
<div class="a" style="left:1915px;top:0;width:5px;height:873px;background:#5a4760"></div>
<div class="a" style="left:1657px;top:4px;width:258px;height:869px;background:#f0f0f0"></div>
<div class="a" style="left:1656px;top:5px;width:47px;height:23px;box-sizing:border-box;border:1px solid #fff;border-right:2px solid #a0a0a0;border-bottom:2px solid #a0a0a0;background:#ececec;font-size:13.5px;line-height:20px;padding-left:6px;color:#151515">Show</div>
<div class="a" style="left:1707px;top:6px;font-size:13.5px;line-height:15px;color:#151515">Me</div>
<div class="a" style="left:1700px;top:6px;width:176px;text-align:right;font-size:13.5px;line-height:15px;color:#151515">United States</div>
<svg class="a" style="left:1879px;top:5px" width="36" height="24"><rect x="0" y="0.0" width="36" height="1.7142857142857142" fill="#e8201c"/><rect x="0" y="1.7142857142857142" width="36" height="1.7142857142857142" fill="#fff"/><rect x="0" y="3.4285714285714284" width="36" height="1.7142857142857142" fill="#e8201c"/><rect x="0" y="5.142857142857142" width="36" height="1.7142857142857142" fill="#fff"/><rect x="0" y="6.857142857142857" width="36" height="1.7142857142857142" fill="#e8201c"/><rect x="0" y="8.571428571428571" width="36" height="1.7142857142857142" fill="#fff"/><rect x="0" y="10.285714285714286" width="36" height="1.7142857142857142" fill="#e8201c"/><rect x="0" y="12.0" width="36" height="1.7142857142857142" fill="#fff"/><rect x="0" y="13.714285714285714" width="36" height="1.7142857142857142" fill="#e8201c"/><rect x="0" y="15.428571428571427" width="36" height="1.7142857142857142" fill="#fff"/><rect x="0" y="17.142857142857142" width="36" height="1.7142857142857142" fill="#e8201c"/><rect x="0" y="18.857142857142858" width="36" height="1.7142857142857142" fill="#fff"/><rect x="0" y="20.571428571428573" width="36" height="1.7142857142857142" fill="#e8201c"/><rect x="0" y="22.28571428571429" width="36" height="1.7142857142857142" fill="#fff"/><rect x="0" y="0" width="17" height="13" fill="#2a3aa8"/><rect x="1.5" y="1.5" width="1.2" height="1.2" fill="#dde"/><rect x="4.7" y="1.5" width="1.2" height="1.2" fill="#dde"/><rect x="7.9" y="1.5" width="1.2" height="1.2" fill="#dde"/><rect x="11.100000000000001" y="1.5" width="1.2" height="1.2" fill="#dde"/><rect x="14.3" y="1.5" width="1.2" height="1.2" fill="#dde"/><rect x="1.5" y="4.5" width="1.2" height="1.2" fill="#dde"/><rect x="4.7" y="4.5" width="1.2" height="1.2" fill="#dde"/><rect x="7.9" y="4.5" width="1.2" height="1.2" fill="#dde"/><rect x="11.100000000000001" y="4.5" width="1.2" height="1.2" fill="#dde"/><rect x="14.3" y="4.5" width="1.2" height="1.2" fill="#dde"/><rect x="1.5" y="7.5" width="1.2" height="1.2" fill="#dde"/><rect x="4.7" y="7.5" width="1.2" height="1.2" fill="#dde"/><rect x="7.9" y="7.5" width="1.2" height="1.2" fill="#dde"/><rect x="11.100000000000001" y="7.5" width="1.2" height="1.2" fill="#dde"/><rect x="14.3" y="7.5" width="1.2" height="1.2" fill="#dde"/><rect x="1.5" y="10.5" width="1.2" height="1.2" fill="#dde"/><rect x="4.7" y="10.5" width="1.2" height="1.2" fill="#dde"/><rect x="7.9" y="10.5" width="1.2" height="1.2" fill="#dde"/><rect x="11.100000000000001" y="10.5" width="1.2" height="1.2" fill="#dde"/><rect x="14.3" y="10.5" width="1.2" height="1.2" fill="#dde"/></svg>
<div class="a" style="left:1657px;top:30px;width:258px;height:831px;box-sizing:border-box;background:#fff;border-top:2px solid #9a9a9a;border-left:2px solid #9a9a9a;border-right:2px solid #e8e8e8"></div>
<svg class="a" style="left:1657px;top:30px" width="258" height="830">
<path d="M11.5 40 L11.5 165" stroke="#888" stroke-width="1" stroke-dasharray="1 1"/>
<path d="M11.5 193 L11.5 203" stroke="#888" stroke-width="1" stroke-dasharray="1 1"/>
<path d="M11.5 269 L11.5 299" stroke="#888" stroke-width="1" stroke-dasharray="1 1"/>
<g transform="translate(2,2)"><path d="M1 7 L6 12 L16 2" stroke="#111" stroke-width="2.8" fill="none"/></g>
<g transform="translate(2,21)"><path d="M1.5 1 V17" stroke="#111" stroke-width="2.2"/><rect x="2" y="1.5" width="14" height="8" fill="#808080" stroke="#111" stroke-width="1.3"/></g>
<rect x="6.5" y="43.5" width="10" height="10" fill="#fff" stroke="#8a8a8a"/>
<path d="M9 48.5 H14 M11.5 46 V51" stroke="#111" stroke-width="1.2"/>
<path d="M17 49 L24 49" stroke="#888" stroke-width="1" stroke-dasharray="1 1"/>
<g transform="translate(25,40)"><path d="M1.5 1 V17" stroke="#111" stroke-width="2.2"/><rect x="2" y="1.5" width="14" height="8" fill="#808080" stroke="#111" stroke-width="1.3"/></g>
<rect x="6.5" y="62.5" width="10" height="10" fill="#fff" stroke="#8a8a8a"/>
<path d="M9 67.5 H14 M11.5 65 V70" stroke="#111" stroke-width="1.2"/>
<path d="M17 68 L24 68" stroke="#888" stroke-width="1" stroke-dasharray="1 1"/>
<g transform="translate(25,59)"><path d="M1.5 1 V17" stroke="#111" stroke-width="2.2"/><rect x="2" y="1.5" width="14" height="8" fill="#808080" stroke="#111" stroke-width="1.3"/></g>
<rect x="6.5" y="82.5" width="10" height="10" fill="#fff" stroke="#8a8a8a"/>
<path d="M9 87.5 H14 M11.5 85 V90" stroke="#111" stroke-width="1.2"/>
<path d="M17 88 L24 88" stroke="#888" stroke-width="1" stroke-dasharray="1 1"/>
<g transform="translate(25,79)"><path d="M1.5 1 V17" stroke="#111" stroke-width="2.2"/><rect x="2" y="1.5" width="14" height="8" fill="#808080" stroke="#111" stroke-width="1.3"/></g>
<rect x="6.5" y="101.5" width="10" height="10" fill="#fff" stroke="#8a8a8a"/>
<path d="M9 106.5 H14 M11.5 104 V109" stroke="#111" stroke-width="1.2"/>
<path d="M17 107 L24 107" stroke="#888" stroke-width="1" stroke-dasharray="1 1"/>
<g transform="translate(25,98)"><path d="M1.5 1 V17" stroke="#111" stroke-width="2.2"/><rect x="2" y="1.5" width="14" height="8" fill="#808080" stroke="#111" stroke-width="1.3"/></g>
<rect x="6.5" y="120.5" width="10" height="10" fill="#fff" stroke="#8a8a8a"/>
<path d="M9 125.5 H14 M11.5 123 V128" stroke="#111" stroke-width="1.2"/>
<path d="M17 126 L24 126" stroke="#888" stroke-width="1" stroke-dasharray="1 1"/>
<g transform="translate(25,117)"><path d="M1.5 1 V17" stroke="#111" stroke-width="2.2"/><rect x="2" y="1.5" width="14" height="8" fill="#808080" stroke="#111" stroke-width="1.3"/></g>
<rect x="6.5" y="139.5" width="10" height="10" fill="#fff" stroke="#8a8a8a"/>
<path d="M9 144.5 H14 M11.5 142 V147" stroke="#111" stroke-width="1.2"/>
<path d="M17 145 L24 145" stroke="#888" stroke-width="1" stroke-dasharray="1 1"/>
<g transform="translate(25,136)"><path d="M1.5 1 V17" stroke="#111" stroke-width="2.2"/><rect x="2" y="1.5" width="14" height="8" fill="#808080" stroke="#111" stroke-width="1.3"/></g>
<rect x="6.5" y="158.5" width="10" height="10" fill="#fff" stroke="#8a8a8a"/>
<path d="M9 163.5 H14 M11.5 161 V166" stroke="#111" stroke-width="1.2"/>
<path d="M17 164 L24 164" stroke="#888" stroke-width="1" stroke-dasharray="1 1"/>
<g transform="translate(25,155)"><path d="M1.5 1 V17" stroke="#111" stroke-width="2.2"/><rect x="2" y="1.5" width="14" height="8" fill="#808080" stroke="#111" stroke-width="1.3"/></g>
<g transform="translate(2,175)"><path d="M1.5 1 V17" stroke="#111" stroke-width="2.2"/><rect x="2" y="1.5" width="14" height="8" fill="#2a9a2a" stroke="#111" stroke-width="1.3"/></g>
<rect x="6.5" y="197.5" width="10" height="10" fill="#fff" stroke="#8a8a8a"/>
<path d="M9 202.5 H14 M11.5 200 V205" stroke="#111" stroke-width="1.2"/>
<path d="M17 203 L24 203" stroke="#888" stroke-width="1" stroke-dasharray="1 1"/>
<g transform="translate(25,194)"><path d="M1.5 1 V17" stroke="#111" stroke-width="2.2"/><rect x="2" y="1.5" width="14" height="8" fill="#2a9a2a" stroke="#111" stroke-width="1.3"/></g>
<g transform="translate(2,213)"><polygon points="6,1 13,1 17.5,5.5 17.5,12.5 13,17 6,17 1.5,12.5 1.5,5.5" fill="#fff" stroke="#111" stroke-width="1.3"/></g>
<g transform="translate(2,232)"><polygon points="6,1 13,1 17.5,5.5 17.5,12.5 13,17 6,17 1.5,12.5 1.5,5.5" fill="#fff" stroke="#111" stroke-width="1.3"/></g>
<g transform="translate(2,251)"><polygon points="6,1 13,1 17.5,5.5 17.5,12.5 13,17 6,17 1.5,12.5 1.5,5.5" fill="#fff" stroke="#111" stroke-width="1.3"/></g>
<rect x="6.5" y="274.5" width="10" height="10" fill="#fff" stroke="#8a8a8a"/>
<path d="M9 279.5 H14 M11.5 277 V282" stroke="#111" stroke-width="1.2"/>
<path d="M17 280 L24 280" stroke="#888" stroke-width="1" stroke-dasharray="1 1"/>
<g transform="translate(25,271)"><polygon points="6,1 13,1 17.5,5.5 17.5,12.5 13,17 6,17 1.5,12.5 1.5,5.5" fill="#1f8a2a" stroke="#111" stroke-width="1.3"/><path d="M5 8 L9.5 5 L14 8 V12 H5Z M5 9.5 H14" fill="none" stroke="#111" stroke-width="1.2"/></g>
<rect x="6.5" y="293.5" width="10" height="10" fill="#fff" stroke="#8a8a8a"/>
<path d="M9 298.5 H14 M11.5 296 V301" stroke="#111" stroke-width="1.2"/>
<path d="M17 299 L24 299" stroke="#888" stroke-width="1" stroke-dasharray="1 1"/>
<g transform="translate(25,290)"><polygon points="6,1 13,1 17.5,5.5 17.5,12.5 13,17 6,17 1.5,12.5 1.5,5.5" fill="#1f8a2a" stroke="#111" stroke-width="1.3"/><path d="M5 8 L9.5 5 L14 8 V12 H5Z M5 9.5 H14" fill="none" stroke="#111" stroke-width="1.2"/></g>
<g transform="translate(2,309)"><polygon points="6,1 13,1 17.5,5.5 17.5,12.5 13,17 6,17 1.5,12.5 1.5,5.5" fill="#fff" stroke="#111" stroke-width="1.3"/></g>
</svg>
<div class="a" style="left:1684px;top:33px;font-size:13px;line-height:16px;color:#151515;white-space:nowrap">Air Force</div>
<div class="a" style="left:1684px;top:52px;font-size:13px;line-height:16px;color:#151515;white-space:nowrap">Navy</div>
<div class="a" style="left:1707px;top:71px;font-size:13px;line-height:16px;color:#151515;white-space:nowrap">Truman Carrier Strike Group</div>
<div class="a" style="left:1707px;top:90px;font-size:13px;line-height:16px;color:#151515;white-space:nowrap">Bush Carrier Strike Grp.</div>
<div class="a" style="left:1707px;top:110px;font-size:13px;line-height:16px;color:#151515;white-space:nowrap">Kearsarge Amphibious Group</div>
<div class="a" style="left:1707px;top:129px;font-size:13px;line-height:16px;color:#151515;white-space:nowrap">Bataan Amphibious Group</div>
<div class="a" style="left:1707px;top:148px;font-size:13px;line-height:16px;color:#151515;white-space:nowrap">6th Submarine Squadron</div>
<div class="a" style="left:1707px;top:167px;font-size:13px;line-height:16px;color:#151515;white-space:nowrap">8th Submarine Squadron</div>
<div class="a" style="left:1707px;top:186px;font-size:13px;line-height:16px;color:#151515;white-space:nowrap">Iwo Jima Amphibious Group</div>
<div class="a" style="left:1684px;top:206px;font-size:13px;line-height:16px;color:#151515;white-space:nowrap">Land Force</div>
<div class="a" style="left:1707px;top:225px;font-size:13px;line-height:16px;color:#151515;white-space:nowrap">1st Marine Division</div>
<div class="a" style="left:1684px;top:244px;font-size:13px;line-height:16px;color:#151515;white-space:nowrap">Air Base</div>
<div class="a" style="left:1684px;top:263px;font-size:13px;line-height:16px;color:#151515;white-space:nowrap">Port</div>
<div class="a" style="left:1684px;top:282px;font-size:13px;line-height:16px;color:#151515;white-space:nowrap">Facility</div>
<div class="a" style="left:1707px;top:302px;font-size:13px;line-height:16px;color:#151515;white-space:nowrap">Depot1</div>
<div class="a" style="left:1707px;top:321px;font-size:13px;line-height:16px;color:#151515;white-space:nowrap">Depot2</div>
<div class="a" style="left:1684px;top:340px;font-size:13px;line-height:16px;color:#151515;white-space:nowrap">Others</div>
<div class="a" style="left:1657px;top:861px;width:258px;height:12px;background:#ececec"></div>
<svg class="a" style="left:1657px;top:861px" width="60" height="12"><rect x="0.5" y="0.5" width="28" height="11" fill="#c8c8c8" stroke="#999"/><rect x="30.5" y="0.5" width="28" height="11" fill="#c8c8c8" stroke="#999"/><path d="M8 9 L14 4 L20 9" stroke="#555" stroke-width="1.8" fill="none"/><path d="M38 4 L44 9 L50 4" stroke="#555" stroke-width="1.8" fill="none"/></svg>
<div class="a" style="left:205px;top:86px;width:645px;height:885px;background:#f0c56e;box-shadow:0 0 0 1px rgba(160,120,40,0.5)"></div>
<div class="a" style="left:205px;top:92px;width:645px;text-align:center;font-size:17.4px;color:#2b2b2b;line-height:24px"><span style="position:relative;left:0px">Units inside LHD3 Kearsarge Assault Ship</span></div>
<div class="a" style="left:805px;top:86px;width:37px;height:24px;background:#c9504a"><svg width="37" height="24"><path d="M15 9 L22 16 M22 9 L15 16" stroke="#fff" stroke-width="1.7"/></svg></div>
<div class="a" style="left:214px;top:123px;width:627px;height:839px;background:#f0f0f0"></div>
<div class="a" style="left:228px;top:138px;font-size:13px;color:#111;line-height:15px">Units in this unit or facility</div>
<div class="a" style="left:228px;top:162px;width:380px;height:739px;background:#fff;border-top:2px solid #8c8c8c;border-left:2px solid #8c8c8c;border-right:1px solid #e3e3e3;border-bottom:1px solid #e3e3e3;box-sizing:border-box;overflow:hidden">
<svg class="a" style="left:0;top:0" width="378" height="736">
<path d="M33.5 17 L33.5 567" stroke="#7a7a7a" stroke-width="1" stroke-dasharray="1 1"/>
<path d="M56.5 151 L56.5 164" stroke="#7a7a7a" stroke-width="1" stroke-dasharray="1 1"/>
<rect x="5.5" y="5.5" width="10" height="10" fill="#fff" stroke="#888"/>
<path d="M7 10.5 H14" stroke="#222"/>
<path d="M16 10.5 L26 10.5" stroke="#7a7a7a" stroke-width="1" stroke-dasharray="1 1"/>
<rect x="27" y="4" width="13" height="13" fill="#fff" stroke="#8a8a8a" stroke-width="2"/>
<g transform="translate(42,2)"><path d="M1 8 H19 L17 13 H3 Z" fill="#7a7a7a" stroke="#111" stroke-width="1.3"/><path d="M12 8 V1 L16 8" fill="#888" stroke="#111" stroke-width="1.2"/><path d="M5 10 L8 10 L6.5 12Z" fill="#111"/></g>
<path d="M34 29.5 L48 29.5" stroke="#7a7a7a" stroke-width="1" stroke-dasharray="1 1"/>
<rect x="49" y="23" width="13" height="13" fill="#fff" stroke="#8a8a8a" stroke-width="2"/>
<g transform="translate(66,21)"><path d="M9 0 L10.2 3.5 L17.8 12.2 L11.2 12.2 L13.6 15.6 L9 17 L4.4 15.6 L6.8 12.2 L0.2 12.2 L7.8 3.5 Z" fill="#1a1ae8"/></g>
<path d="M34 48.5 L48 48.5" stroke="#7a7a7a" stroke-width="1" stroke-dasharray="1 1"/>
<rect x="49" y="42" width="13" height="13" fill="#fff" stroke="#8a8a8a" stroke-width="2"/>
<g transform="translate(66,40)"><path d="M9 0 L10.2 3.5 L17.8 12.2 L11.2 12.2 L13.6 15.6 L9 17 L4.4 15.6 L6.8 12.2 L0.2 12.2 L7.8 3.5 Z" fill="#1a1ae8"/></g>
<path d="M34 68.5 L48 68.5" stroke="#7a7a7a" stroke-width="1" stroke-dasharray="1 1"/>
<rect x="49" y="62" width="13" height="13" fill="#fff" stroke="#8a8a8a" stroke-width="2"/>
<g transform="translate(66,60)"><path d="M9 0 L10.2 3.5 L17.8 12.2 L11.2 12.2 L13.6 15.6 L9 17 L4.4 15.6 L6.8 12.2 L0.2 12.2 L7.8 3.5 Z" fill="#1a1ae8"/></g>
<path d="M34 87.5 L48 87.5" stroke="#7a7a7a" stroke-width="1" stroke-dasharray="1 1"/>
<rect x="49" y="81" width="13" height="13" fill="#fff" stroke="#8a8a8a" stroke-width="2"/>
<g transform="translate(66,79)"><path d="M0 1.5 H18" stroke="#111" stroke-width="1.5"/><path d="M9 1.5 V4" stroke="#111" stroke-width="1.2"/><path d="M2.5 8 Q2.5 3.6 8 3.6 Q12 3.6 12.5 6.5 L17.5 5.5 L16.5 9 L12 9.5 Q11 11.5 8 11.5 Q2.5 11.5 2.5 8Z" fill="#1a1ae8" stroke="#111" stroke-width="0.9"/><path d="M3.5 13.5 H13 M6 11.5 V13.5 M10 11.5 V13.5" stroke="#111" stroke-width="1.2"/></g>
<path d="M34 106.5 L48 106.5" stroke="#7a7a7a" stroke-width="1" stroke-dasharray="1 1"/>
<rect x="49" y="100" width="13" height="13" fill="#fff" stroke="#8a8a8a" stroke-width="2"/>
<g transform="translate(66,98)"><path d="M0 1.5 H18" stroke="#111" stroke-width="1.5"/><path d="M9 1.5 V4" stroke="#111" stroke-width="1.2"/><path d="M2.5 8 Q2.5 3.6 8 3.6 Q12 3.6 12.5 6.5 L17.5 5.5 L16.5 9 L12 9.5 Q11 11.5 8 11.5 Q2.5 11.5 2.5 8Z" fill="#1a1ae8" stroke="#111" stroke-width="0.9"/><path d="M3.5 13.5 H13 M6 11.5 V13.5 M10 11.5 V13.5" stroke="#111" stroke-width="1.2"/></g>
<path d="M34 125.5 L48 125.5" stroke="#7a7a7a" stroke-width="1" stroke-dasharray="1 1"/>
<rect x="49" y="119" width="13" height="13" fill="#fff" stroke="#8a8a8a" stroke-width="2"/>
<g transform="translate(66,117)"><path d="M0 1.5 H18" stroke="#111" stroke-width="1.5"/><path d="M9 1.5 V4" stroke="#111" stroke-width="1.2"/><path d="M2.5 8 Q2.5 3.6 8 3.6 Q12 3.6 12.5 6.5 L17.5 5.5 L16.5 9 L12 9.5 Q11 11.5 8 11.5 Q2.5 11.5 2.5 8Z" fill="#1a1ae8" stroke="#111" stroke-width="0.9"/><path d="M3.5 13.5 H13 M6 11.5 V13.5 M10 11.5 V13.5" stroke="#111" stroke-width="1.2"/></g>
<path d="M34 144.5 L48 144.5" stroke="#7a7a7a" stroke-width="1" stroke-dasharray="1 1"/>
<rect x="28.5" y="139.5" width="10" height="10" fill="#fff" stroke="#888"/>
<path d="M30 144.5 H37" stroke="#222"/>
<rect x="49" y="138" width="13" height="13" fill="#fff" stroke="#8a8a8a" stroke-width="2"/>
<g transform="translate(66,136)"><path d="M1 8 H19 L17 13 H3 Z" fill="#7a7a7a" stroke="#111" stroke-width="1.3"/><path d="M12 8 V1 L16 8" fill="#888" stroke="#111" stroke-width="1.2"/><path d="M5 10 L8 10 L6.5 12Z" fill="#111"/></g>
<path d="M57 164.5 L71 164.5" stroke="#7a7a7a" stroke-width="1" stroke-dasharray="1 1"/>
<rect x="72" y="158" width="13" height="13" fill="#fff" stroke="#8a8a8a" stroke-width="2"/>
<g transform="translate(89,156)"><path d="M1 7 L6 12 L17 1" stroke="#111" stroke-width="2.6" fill="none"/></g>
<path d="M34 183.5 L48 183.5" stroke="#7a7a7a" stroke-width="1" stroke-dasharray="1 1"/>
<rect x="49" y="177" width="13" height="13" fill="#fff" stroke="#8a8a8a" stroke-width="2"/>
<g transform="translate(66,175)"><path d="M0 1.5 H18" stroke="#111" stroke-width="1.5"/><path d="M9 1.5 V4" stroke="#111" stroke-width="1.2"/><path d="M2.5 8 Q2.5 3.6 8 3.6 Q12 3.6 12.5 6.5 L17.5 5.5 L16.5 9 L12 9.5 Q11 11.5 8 11.5 Q2.5 11.5 2.5 8Z" fill="#1a1ae8" stroke="#111" stroke-width="0.9"/><path d="M3.5 13.5 H13 M6 11.5 V13.5 M10 11.5 V13.5" stroke="#111" stroke-width="1.2"/></g>
<path d="M34 202.5 L48 202.5" stroke="#7a7a7a" stroke-width="1" stroke-dasharray="1 1"/>
<rect x="49" y="196" width="13" height="13" fill="#fff" stroke="#8a8a8a" stroke-width="2"/>
<g transform="translate(66,194)"><path d="M5 4 H14 L15 7 H4 Z" fill="#2e8b2e" stroke="#111" stroke-width="1"/><path d="M9 4 L17 1" stroke="#111" stroke-width="1.3"/><path d="M1 8 H18 L16 13 H3 Z" fill="#2e8b2e" stroke="#111" stroke-width="1.1"/><path d="M3 10.5 H16" stroke="#111" stroke-width="0.8"/></g>
<path d="M34 221.5 L48 221.5" stroke="#7a7a7a" stroke-width="1" stroke-dasharray="1 1"/>
<rect x="49" y="215" width="13" height="13" fill="#fff" stroke="#8a8a8a" stroke-width="2"/>
<g transform="translate(66,213)"><path d="M6 3 L12 0" stroke="#111" stroke-width="1.3"/><path d="M6 5 H12 L13 7 H5Z" fill="#2e8b2e" stroke="#111"/><path d="M1 8 Q1 6 4 6 H15 Q18 6 18 9 V11 H1 Z" fill="#2e8b2e" stroke="#111" stroke-width="1"/><circle cx="4.5" cy="12" r="2" fill="#2e8b2e" stroke="#111"/><circle cx="14.5" cy="12" r="2" fill="#2e8b2e" stroke="#111"/></g>
<path d="M34 240.5 L48 240.5" stroke="#7a7a7a" stroke-width="1" stroke-dasharray="1 1"/>
<rect x="49" y="234" width="13" height="13" fill="#fff" stroke="#8a8a8a" stroke-width="2"/>
<g transform="translate(66,232)"><path d="M6 3 L12 0" stroke="#111" stroke-width="1.3"/><path d="M6 5 H12 L13 7 H5Z" fill="#2e8b2e" stroke="#111"/><path d="M1 8 Q1 6 4 6 H15 Q18 6 18 9 V11 H1 Z" fill="#2e8b2e" stroke="#111" stroke-width="1"/><circle cx="4.5" cy="12" r="2" fill="#2e8b2e" stroke="#111"/><circle cx="14.5" cy="12" r="2" fill="#2e8b2e" stroke="#111"/></g>
<path d="M34 260.5 L48 260.5" stroke="#7a7a7a" stroke-width="1" stroke-dasharray="1 1"/>
<rect x="49" y="254" width="13" height="13" fill="#fff" stroke="#8a8a8a" stroke-width="2"/>
<g transform="translate(66,252)"><path d="M6 3 L12 0" stroke="#111" stroke-width="1.3"/><path d="M6 5 H12 L13 7 H5Z" fill="#2e8b2e" stroke="#111"/><path d="M1 8 Q1 6 4 6 H15 Q18 6 18 9 V11 H1 Z" fill="#2e8b2e" stroke="#111" stroke-width="1"/><circle cx="4.5" cy="12" r="2" fill="#2e8b2e" stroke="#111"/><circle cx="14.5" cy="12" r="2" fill="#2e8b2e" stroke="#111"/></g>
<path d="M34 279.5 L48 279.5" stroke="#7a7a7a" stroke-width="1" stroke-dasharray="1 1"/>
<rect x="49" y="273" width="13" height="13" fill="#fff" stroke="#8a8a8a" stroke-width="2"/>
<g transform="translate(66,271)"><path d="M6 3 L12 0" stroke="#111" stroke-width="1.3"/><path d="M6 5 H12 L13 7 H5Z" fill="#2e8b2e" stroke="#111"/><path d="M1 8 Q1 6 4 6 H15 Q18 6 18 9 V11 H1 Z" fill="#2e8b2e" stroke="#111" stroke-width="1"/><circle cx="4.5" cy="12" r="2" fill="#2e8b2e" stroke="#111"/><circle cx="14.5" cy="12" r="2" fill="#2e8b2e" stroke="#111"/></g>
<path d="M34 298.5 L48 298.5" stroke="#7a7a7a" stroke-width="1" stroke-dasharray="1 1"/>
<rect x="49" y="292" width="13" height="13" fill="#fff" stroke="#8a8a8a" stroke-width="2"/>
<g transform="translate(66,290)"><path d="M1 6 Q1 3 4 3 H15 Q18 3 18 7 V11 H1 Z" fill="#2e8b2e" stroke="#111" stroke-width="1.1"/><path d="M4 5 H10" stroke="#111"/><circle cx="4.5" cy="11.5" r="2" fill="#2e8b2e" stroke="#111"/><circle cx="14.5" cy="11.5" r="2" fill="#2e8b2e" stroke="#111"/></g>
<path d="M34 317.5 L48 317.5" stroke="#7a7a7a" stroke-width="1" stroke-dasharray="1 1"/>
<rect x="49" y="311" width="13" height="13" fill="#fff" stroke="#8a8a8a" stroke-width="2"/>
<g transform="translate(66,309)"><path d="M7 5 L15 0" stroke="#111" stroke-width="1.3"/><path d="M1 7 Q1 5 4 5 H15 Q18 5 18 8 V11 H1 Z" fill="#2e8b2e" stroke="#111" stroke-width="1.1"/><circle cx="4.5" cy="12" r="2" fill="#2e8b2e" stroke="#111"/><circle cx="14.5" cy="12" r="2" fill="#2e8b2e" stroke="#111"/></g>
<path d="M34 336.5 L48 336.5" stroke="#7a7a7a" stroke-width="1" stroke-dasharray="1 1"/>
<rect x="49" y="330" width="13" height="13" fill="#fff" stroke="#8a8a8a" stroke-width="2"/>
<g transform="translate(66,328)"><path d="M0.5 0.5 L11 10" stroke="#111" stroke-width="2"/><path d="M5 9 Q6 6 10 7 L14 10 L13 13 L7 13 Z" fill="#2e8b2e" stroke="#111" stroke-width="0.9"/><circle cx="8" cy="11" r="1" fill="#111"/><path d="M8 13.5 L18 15" stroke="#111" stroke-width="1.6"/></g>
<path d="M34 356.5 L48 356.5" stroke="#7a7a7a" stroke-width="1" stroke-dasharray="1 1"/>
<rect x="49" y="350" width="13" height="13" fill="#fff" stroke="#8a8a8a" stroke-width="2"/>
<g transform="translate(66,348)"><path d="M1 6 Q1 3 4 3 H15 Q18 3 18 7 V11 H1 Z" fill="#2e8b2e" stroke="#111" stroke-width="1.1"/><path d="M4 5 H10" stroke="#111"/><circle cx="4.5" cy="11.5" r="2" fill="#2e8b2e" stroke="#111"/><circle cx="14.5" cy="11.5" r="2" fill="#2e8b2e" stroke="#111"/></g>
<path d="M34 375.5 L48 375.5" stroke="#7a7a7a" stroke-width="1" stroke-dasharray="1 1"/>
<rect x="49" y="369" width="13" height="13" fill="#fff" stroke="#8a8a8a" stroke-width="2"/>
<g transform="translate(66,367)"><path d="M0.5 0.5 L11 10" stroke="#111" stroke-width="2"/><path d="M5 9 Q6 6 10 7 L14 10 L13 13 L7 13 Z" fill="#2e8b2e" stroke="#111" stroke-width="0.9"/><circle cx="8" cy="11" r="1" fill="#111"/><path d="M8 13.5 L18 15" stroke="#111" stroke-width="1.6"/></g>
<path d="M34 394.5 L48 394.5" stroke="#7a7a7a" stroke-width="1" stroke-dasharray="1 1"/>
<rect x="49" y="388" width="13" height="13" fill="#fff" stroke="#8a8a8a" stroke-width="2"/>
<g transform="translate(66,386)"><path d="M0.5 0.5 L11 10" stroke="#111" stroke-width="2"/><path d="M5 9 Q6 6 10 7 L14 10 L13 13 L7 13 Z" fill="#2e8b2e" stroke="#111" stroke-width="0.9"/><circle cx="8" cy="11" r="1" fill="#111"/><path d="M8 13.5 L18 15" stroke="#111" stroke-width="1.6"/></g>
<path d="M34 413.5 L48 413.5" stroke="#7a7a7a" stroke-width="1" stroke-dasharray="1 1"/>
<rect x="49" y="407" width="13" height="13" fill="#fff" stroke="#8a8a8a" stroke-width="2"/>
<g transform="translate(66,405)"><path d="M1 6 Q1 3 4 3 H15 Q18 3 18 7 V11 H1 Z" fill="#2e8b2e" stroke="#111" stroke-width="1.1"/><path d="M4 5 H10" stroke="#111"/><circle cx="4.5" cy="11.5" r="2" fill="#2e8b2e" stroke="#111"/><circle cx="14.5" cy="11.5" r="2" fill="#2e8b2e" stroke="#111"/></g>
<path d="M34 432.5 L48 432.5" stroke="#7a7a7a" stroke-width="1" stroke-dasharray="1 1"/>
<rect x="49" y="426" width="13" height="13" fill="#fff" stroke="#8a8a8a" stroke-width="2"/>
<g transform="translate(66,424)"><path d="M1 6 Q1 3 4 3 H15 Q18 3 18 7 V11 H1 Z" fill="#2e8b2e" stroke="#111" stroke-width="1.1"/><path d="M4 5 H10" stroke="#111"/><circle cx="4.5" cy="11.5" r="2" fill="#2e8b2e" stroke="#111"/><circle cx="14.5" cy="11.5" r="2" fill="#2e8b2e" stroke="#111"/></g>
<path d="M34 452.5 L48 452.5" stroke="#7a7a7a" stroke-width="1" stroke-dasharray="1 1"/>
<rect x="49" y="446" width="13" height="13" fill="#fff" stroke="#8a8a8a" stroke-width="2"/>
<g transform="translate(66,444)"><circle cx="9" cy="2.2" r="2" fill="#111"/><path d="M6.3 4.8 H11.7 V10.5 H10.5 V16 H7.5 V10.5 H6.3Z" fill="#111"/><path d="M9 5 V9" stroke="#777" stroke-width="0.8"/></g>
<path d="M34 471.5 L48 471.5" stroke="#7a7a7a" stroke-width="1" stroke-dasharray="1 1"/>
<rect x="49" y="465" width="13" height="13" fill="#fff" stroke="#8a8a8a" stroke-width="2"/>
<g transform="translate(66,463)"><circle cx="9" cy="2.2" r="2" fill="#111"/><path d="M6.3 4.8 H11.7 V10.5 H10.5 V16 H7.5 V10.5 H6.3Z" fill="#111"/><path d="M9 5 V9" stroke="#777" stroke-width="0.8"/></g>
<path d="M34 490.5 L48 490.5" stroke="#7a7a7a" stroke-width="1" stroke-dasharray="1 1"/>
<rect x="49" y="484" width="13" height="13" fill="#fff" stroke="#8a8a8a" stroke-width="2"/>
<g transform="translate(66,482)"><circle cx="9" cy="2.2" r="2" fill="#111"/><path d="M6.3 4.8 H11.7 V10.5 H10.5 V16 H7.5 V10.5 H6.3Z" fill="#111"/><path d="M9 5 V9" stroke="#777" stroke-width="0.8"/></g>
<path d="M34 509.5 L48 509.5" stroke="#7a7a7a" stroke-width="1" stroke-dasharray="1 1"/>
<rect x="49" y="503" width="13" height="13" fill="#fff" stroke="#8a8a8a" stroke-width="2"/>
<g transform="translate(66,501)"><circle cx="9" cy="2.2" r="2" fill="#111"/><path d="M6.3 4.8 H11.7 V10.5 H10.5 V16 H7.5 V10.5 H6.3Z" fill="#111"/><path d="M9 5 V9" stroke="#777" stroke-width="0.8"/></g>
<path d="M34 528.5 L48 528.5" stroke="#7a7a7a" stroke-width="1" stroke-dasharray="1 1"/>
<rect x="49" y="522" width="13" height="13" fill="#fff" stroke="#8a8a8a" stroke-width="2"/>
<g transform="translate(66,520)"><circle cx="9" cy="2.2" r="2" fill="#111"/><path d="M6.3 4.8 H11.7 V10.5 H10.5 V16 H7.5 V10.5 H6.3Z" fill="#111"/><path d="M9 5 V9" stroke="#777" stroke-width="0.8"/></g>
<path d="M34 548.5 L48 548.5" stroke="#7a7a7a" stroke-width="1" stroke-dasharray="1 1"/>
<rect x="49" y="542" width="13" height="13" fill="#fff" stroke="#8a8a8a" stroke-width="2"/>
<g transform="translate(66,540)"><path d="M0.5 0.5 L11 10" stroke="#111" stroke-width="2"/><path d="M5 9 Q6 6 10 7 L14 10 L13 13 L7 13 Z" fill="#2e8b2e" stroke="#111" stroke-width="0.9"/><circle cx="8" cy="11" r="1" fill="#111"/><path d="M8 13.5 L18 15" stroke="#111" stroke-width="1.6"/></g>
<path d="M34 567.5 L48 567.5" stroke="#7a7a7a" stroke-width="1" stroke-dasharray="1 1"/>
<rect x="49" y="561" width="13" height="13" fill="#fff" stroke="#8a8a8a" stroke-width="2"/>
<g transform="translate(66,559)"><path d="M1 6 Q1 3 4 3 H15 Q18 3 18 7 V11 H1 Z" fill="#2e8b2e" stroke="#111" stroke-width="1.1"/><path d="M4 5 H10" stroke="#111"/><circle cx="4.5" cy="11.5" r="2" fill="#2e8b2e" stroke="#111"/><circle cx="14.5" cy="11.5" r="2" fill="#2e8b2e" stroke="#111"/></g>
</svg>
<div class="a" style="left:67px;top:2px;font-size:13px;line-height:16px;color:#000;white-space:nowrap">LHD3 Kearsarge Assault Ship</div>
<div class="a" style="left:90px;top:21px;font-size:13px;line-height:16px;color:#000;white-space:nowrap">S1, 231 Marine Fighter Sqdn (AV8B X 2)</div>
<div class="a" style="left:90px;top:40px;font-size:13px;line-height:16px;color:#000;white-space:nowrap">S2, 231 Marine Fighter Sqdn (AV8B X 2)</div>
<div class="a" style="left:90px;top:60px;font-size:13px;line-height:16px;color:#000;white-space:nowrap">S3, 231 Marine Fighter Sqdn (AV8B X 2)</div>
<div class="a" style="left:90px;top:79px;font-size:13px;line-height:16px;color:#000;white-space:nowrap">Flight 1, 269 Marine Combat Sqdn (AH1W X 4)</div>
<div class="a" style="left:90px;top:98px;font-size:13px;line-height:16px;color:#000;white-space:nowrap">Flight 2, 269 Marine Combat Sqdn (AH1W X 4)</div>
<div class="a" style="left:90px;top:117px;font-size:13px;line-height:16px;color:#000;white-space:nowrap">G1, 264 Marine Transport Sqdn (V22 X 8)</div>
<div class="a" style="left:90px;top:136px;font-size:13px;line-height:16px;color:#000;white-space:nowrap">LHD3 Landing Crafts (LCAC X 3)</div>
<div class="a" style="left:111px;top:155px;width:300px;height:18px;background:#3399ff"></div>
<div class="a" style="left:113px;top:156px;font-size:13px;line-height:16px;color:#fff;white-space:nowrap">Infantry C3, Bn 1, 1 Marine Rgmt (infantry X 25)</div>
<div class="a" style="left:90px;top:175px;font-size:13px;line-height:16px;color:#000;white-space:nowrap">G2, 264 Marine Transport Sqdn (V22 X 8)</div>
<div class="a" style="left:90px;top:194px;font-size:13px;line-height:16px;color:#000;white-space:nowrap">C1, 1st Marine Tank Bn (M1A1 X 12)</div>
<div class="a" style="left:90px;top:213px;font-size:13px;line-height:16px;color:#000;white-space:nowrap">APC C2, Bn 1, 4 Marine Rgmt (AAV7 X 15)</div>
<div class="a" style="left:90px;top:232px;font-size:13px;line-height:16px;color:#000;white-space:nowrap">APC C1, Bn 1, 4 Marine Rgmt (AAV7 X 15)</div>
<div class="a" style="left:90px;top:252px;font-size:13px;line-height:16px;color:#000;white-space:nowrap">C2, 1st Marine Reconn. Bn (LAV X 24)</div>
<div class="a" style="left:90px;top:271px;font-size:13px;line-height:16px;color:#000;white-space:nowrap">APC C2, Bn 3, 1 Marine Rgmt (AAV7 X 15)</div>
<div class="a" style="left:90px;top:290px;font-size:13px;line-height:16px;color:#000;white-space:nowrap">Support Group 4, 1 Marine DIV (Transport X 30)</div>
<div class="a" style="left:90px;top:309px;font-size:13px;line-height:16px;color:#000;white-space:nowrap">Co. 2, 1 Lt. Air Defense Bn (Hawk X 3)</div>
<div class="a" style="left:90px;top:328px;font-size:13px;line-height:16px;color:#000;white-space:nowrap">C4, Bn 1, 11 Marine Art. Rgmt (M777 X 8)</div>
<div class="a" style="left:90px;top:348px;font-size:13px;line-height:16px;color:#000;white-space:nowrap">G2, C1, 1st Marine Enginerring Bn (Engineer X 15)</div>
<div class="a" style="left:90px;top:367px;font-size:13px;line-height:16px;color:#000;white-space:nowrap">C2, Bn 1, 11 Marine Art. Rgmt (M777 X 8)</div>
<div class="a" style="left:90px;top:386px;font-size:13px;line-height:16px;color:#000;white-space:nowrap">C1, Bn 1, 11 Marine Art. Rgmt (M777 X 8)</div>
<div class="a" style="left:90px;top:405px;font-size:13px;line-height:16px;color:#000;white-space:nowrap">Support Group 1, 1 Marine DIV (Transport X 30)</div>
<div class="a" style="left:90px;top:424px;font-size:13px;line-height:16px;color:#000;white-space:nowrap">Headquarter, 1st Marine DIV (Command X 30)</div>
<div class="a" style="left:90px;top:444px;font-size:13px;line-height:16px;color:#000;white-space:nowrap">Infantry C3, Bn 3, 1 Marine Rgmt (infantry X 25)</div>
<div class="a" style="left:90px;top:463px;font-size:13px;line-height:16px;color:#000;white-space:nowrap">Infantry C4, Bn 1, 1 Marine Rgmt (infantry X 25)</div>
<div class="a" style="left:90px;top:482px;font-size:13px;line-height:16px;color:#000;white-space:nowrap">Infantry C4, Bn 3, 1 Marine Rgmt (infantry X 25)</div>
<div class="a" style="left:90px;top:501px;font-size:13px;line-height:16px;color:#000;white-space:nowrap">Infantry C3, Bn 1, 4 Marine Rgmt (infantry X 25)</div>
<div class="a" style="left:90px;top:520px;font-size:13px;line-height:16px;color:#000;white-space:nowrap">Infantry C3, Bn 2, 1 Marine Rgmt (infantry X 25)</div>
<div class="a" style="left:90px;top:540px;font-size:13px;line-height:16px;color:#000;white-space:nowrap">C3, Bn 1, 11 Marine Art. Rgmt (M777 X 8)</div>
<div class="a" style="left:90px;top:559px;font-size:13px;line-height:16px;color:#000;white-space:nowrap">Headquarter, 1st Marine Rgmt (Command X 30)</div>
<div class="a" style="left:0;top:718px;width:378px;height:18px;background:#f0f0f0"></div>
<div class="a" style="left:21px;top:720px;width:325px;height:15px;background:#cdcdcd"></div>
<svg class="a" style="left:0;top:718px" width="378" height="18"><path d="M13 5 L9 9 L13 13" stroke="#606060" stroke-width="1.6" fill="none"/><path d="M366 5 L370 9 L366 13" stroke="#606060" stroke-width="1.6" fill="none"/></svg>
</div>
<div class="a" style="left:617px;top:138px;font-size:13px;line-height:15px;color:#111;white-space:nowrap">Name</div>
<div class="a" style="left:661px;top:138px;font-size:13px;line-height:15px;color:#777;white-space:nowrap">Marine Infantry Sq(US)</div>
<div class="a" style="left:618px;top:170px;font-size:13px;line-height:15px;color:#111;white-space:nowrap">Fuel</div>
<div class="a" style="left:676px;top:170px;font-size:13px;line-height:15px;color:#777;white-space:nowrap">100%</div>
<div class="a" style="left:618px;top:201px;font-size:13px;line-height:15px;color:#111;white-space:nowrap">Status</div>
<div class="a" style="left:676px;top:201px;font-size:13px;line-height:15px;color:#777;white-space:nowrap">100%</div>
<div class="a" style="left:620px;top:235px;font-size:13px;line-height:15px;color:#111;white-space:nowrap">Armaments</div>
<div class="a" style="left:710px;top:228px;width:69px;height:27px;box-sizing:border-box;border:2px solid #707070;background:#efefef;font-size:13px;line-height:23px;text-align:center;color:#111">Change</div>
<div class="a" style="left:805px;top:229px;width:21px;height:22px;box-sizing:border-box;border:1px solid #fff;border-right:2px solid #777;border-bottom:2px solid #777;background:#f0f0f0;font-size:13px;line-height:18px;text-align:center;color:#111">?</div>
<div class="a" style="left:621px;top:259px;width:207px;height:93px;box-sizing:border-box;background:#fff;border-top:2px solid #8a8a8a;border-left:2px solid #8a8a8a;border-right:1px solid #e0e0e0;border-bottom:1px solid #e0e0e0"></div>
<div class="a" style="left:625px;top:263px;font-size:13px;line-height:15px;color:#111;white-space:nowrap">(100% loaded) US Marine Co</div>
<div class="a" style="left:624px;top:365px;font-size:13px;line-height:15px;color:#111;white-space:nowrap">Weapons listed in the armament</div>
<div class="a" style="left:622px;top:388px;width:206px;height:143px;box-sizing:border-box;background:#fff;border-top:2px solid #8a8a8a;border-left:2px solid #8a8a8a;border-right:1px solid #e0e0e0;border-bottom:1px solid #e0e0e0"></div>
<div class="a" style="left:625px;top:697px;font-size:13px;line-height:15px;color:#111;white-space:nowrap">Stock arms in selected unit:</div>
<div class="a" style="left:622px;top:741px;width:206px;height:154px;box-sizing:border-box;background:#fff;border-top:2px solid #8a8a8a;border-left:2px solid #8a8a8a;border-right:1px solid #e0e0e0;border-bottom:1px solid #e0e0e0"></div>
<div class="a" style="left:298px;top:918px;width:196px;height:29px;box-sizing:border-box;border:2px solid #707070;background:#efefef;font-size:13px;line-height:25px;text-align:center;color:#111">Selected Units Leave Now</div>
<div class="a" style="left:501px;top:922px;width:21px;height:22px;box-sizing:border-box;border:1px solid #fff;border-right:2px solid #777;border-bottom:2px solid #777;background:#f0f0f0;font-size:13px;line-height:18px;text-align:center;color:#111">?</div>
<div class="a" style="left:686px;top:918px;width:90px;height:30px;box-sizing:border-box;border:2px solid #707070;background:#efefef;font-size:13px;line-height:26px;text-align:center;color:#111">Close</div>
</body></html>
